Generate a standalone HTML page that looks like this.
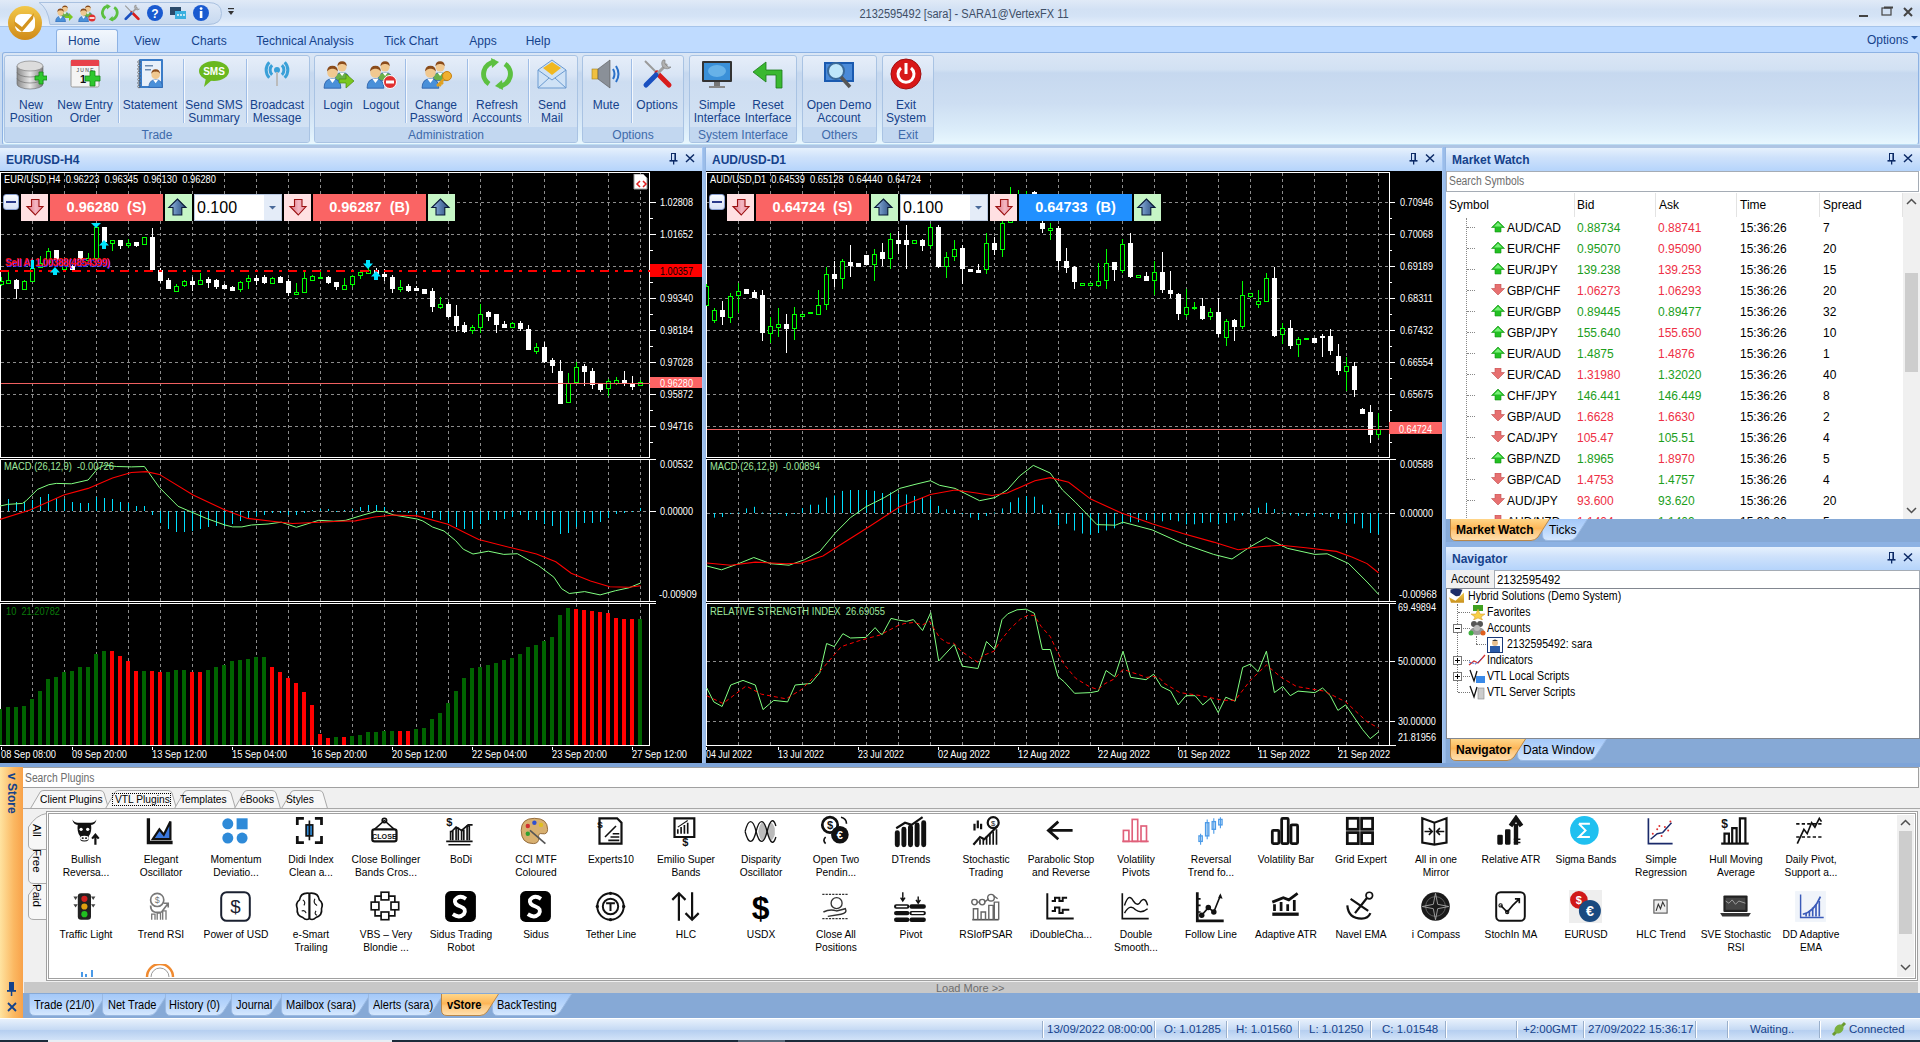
<!DOCTYPE html><html><head><meta charset="utf-8"><style>*{box-sizing:border-box;margin:0;padding:0}body{width:1920px;height:1042px;overflow:hidden;position:relative;background:#8db2e3;font-family:"Liberation Sans",sans-serif;font-size:12px;color:#000}.a{position:absolute}</style></head><body><div class="a" style="left:0;top:0;width:1920px;height:27px;background:linear-gradient(#e0eaf7,#d2e1f4 35%,#d4e3f6 60%,#e4eefb 90%)"></div><svg class="a" style="left:36px;top:0px;" width="190" height="27" viewBox="0 0 190 27"><defs><linearGradient id="qg" x1="0" y1="0" x2="0" y2="1"><stop offset="0" stop-color="#dfe9f7"/><stop offset="1" stop-color="#c6d8ef"/></linearGradient></defs><path d="M3 2.5 H172 Q185.5 2.5 185.5 13.5 Q185.5 24.5 172 24.5 H14 Q12 8 3 2.5Z" fill="url(#qg)" stroke="#a9c1e0"/></svg><svg class="a" style="left:55px;top:4px;" width="18" height="18" viewBox="0 0 18 18"><g transform="translate(5,0) scale(0.55)"><path d="M1 24 Q1 15 9 15 Q17 15 17 24 Z" fill="#6ab04a" stroke="#2a5ea8" stroke-width="0.8"/><path d="M6 15 L9 19 L12 15Z" fill="#fff"/><circle cx="9" cy="9" r="5" fill="#f0c890"/><path d="M3.8 8 Q4 2.5 9 2.5 Q14 2.5 14.2 8 Q12 5 9 5.5 Q6 5 3.8 8Z" fill="#8a4b1a"/></g><g transform="translate(0,3) scale(0.62)"><path d="M1 24 Q1 15 9 15 Q17 15 17 24 Z" fill="#4a90d9" stroke="#2a5ea8" stroke-width="0.8"/><path d="M6 15 L9 19 L12 15Z" fill="#fff"/><circle cx="9" cy="9" r="5" fill="#f0c890"/><path d="M3.8 8 Q4 2.5 9 2.5 Q14 2.5 14.2 8 Q12 5 9 5.5 Q6 5 3.8 8Z" fill="#8a4b1a"/></g><path d="M10 12h4v-3l4 4-4 4v-3h-4z" fill="#7ac820"/></svg><svg class="a" style="left:78px;top:4px;" width="18" height="18" viewBox="0 0 18 18"><g transform="translate(5,0) scale(0.55)"><path d="M1 24 Q1 15 9 15 Q17 15 17 24 Z" fill="#6ab04a" stroke="#2a5ea8" stroke-width="0.8"/><path d="M6 15 L9 19 L12 15Z" fill="#fff"/><circle cx="9" cy="9" r="5" fill="#f0c890"/><path d="M3.8 8 Q4 2.5 9 2.5 Q14 2.5 14.2 8 Q12 5 9 5.5 Q6 5 3.8 8Z" fill="#8a4b1a"/></g><g transform="translate(0,3) scale(0.62)"><path d="M1 24 Q1 15 9 15 Q17 15 17 24 Z" fill="#4a90d9" stroke="#2a5ea8" stroke-width="0.8"/><path d="M6 15 L9 19 L12 15Z" fill="#fff"/><circle cx="9" cy="9" r="5" fill="#f0c890"/><path d="M3.8 8 Q4 2.5 9 2.5 Q14 2.5 14.2 8 Q12 5 9 5.5 Q6 5 3.8 8Z" fill="#8a4b1a"/></g><circle cx="14" cy="14" r="3.5" fill="#e03030"/><rect x="11.5" y="13.2" width="5" height="1.6" fill="#fff"/></svg><svg class="a" style="left:101px;top:4px;" width="18" height="18" viewBox="0 0 18 18"><g transform="scale(.55)"><path d="M14 4 A12 12 0 0 0 8 26" fill="none" stroke="#5cc040" stroke-width="5"/><path d="M10 0 L18 4 L11 10Z" fill="#5cc040"/><path d="M18 28 A12 12 0 0 0 24 6" fill="none" stroke="#5cc040" stroke-width="5"/><path d="M22 32 L14 28 L21 22Z" fill="#5cc040"/></g></svg><svg class="a" style="left:123px;top:4px;" width="18" height="18" viewBox="0 0 18 18"><g transform="scale(.55)"><path d="M4 3 L17 16" stroke="#9a9a9a" stroke-width="2"/><path d="M16 15 L28 27" stroke="#d81c1c" stroke-width="5" stroke-linecap="round"/><path d="M26 6 L14 18" stroke="#a0a0a0" stroke-width="3"/><path d="M22 2 A5 5 0 1 0 30 9 L27 9 L24 6 L24 2Z" fill="#b0b0b0" stroke="#777" stroke-width=".6"/><path d="M15 17 L5 27" stroke="#1a50c0" stroke-width="5" stroke-linecap="round"/></g></svg><svg class="a" style="left:146px;top:4px;" width="18" height="18" viewBox="0 0 18 18"><circle cx="9" cy="9" r="8" fill="#1a5ad0"/><text x="9" y="13.5" font-size="12" font-weight="bold" text-anchor="middle" fill="#fff" font-family="Liberation Sans">?</text></svg><svg class="a" style="left:169px;top:4px;" width="18" height="18" viewBox="0 0 18 18"><rect x="1" y="3" width="11" height="8" fill="#2a4a6a"/><rect x="6" y="7" width="11" height="8" fill="#3ab0e0"/><circle cx="9" cy="11" r=".9" fill="#fff"/><circle cx="12" cy="11" r=".9" fill="#fff"/><circle cx="15" cy="11" r=".9" fill="#fff"/></svg><svg class="a" style="left:192px;top:4px;" width="18" height="18" viewBox="0 0 18 18"><circle cx="9" cy="9" r="8" fill="#1a5ad0"/><rect x="7.8" y="7" width="2.6" height="7" fill="#fff"/><circle cx="9.1" cy="4.6" r="1.4" fill="#fff"/></svg><svg class="a" style="left:226px;top:7px;" width="10" height="10" viewBox="0 0 10 10"><rect x="2" y="1" width="6" height="1.2" fill="#333"/><path d="M2 4h6l-3 4z" fill="#333"/></svg><div class="a" style="left:764.0px;top:7px;width:400px;text-align:center;font-size:12px;line-height:14px;color:#3e4f66;font-weight:normal;white-space:nowrap;transform:scaleX(0.92);transform-origin:50% 0;">2132595492 [sara] - SARA1@VertexFX 11</div><svg class="a" style="left:1856px;top:4px;" width="64" height="18" viewBox="0 0 64 18"><rect x="3" y="11" width="9" height="2" fill="#444"/><rect x="26" y="4" width="9" height="7" fill="none" stroke="#444" stroke-width="1.2"/><rect x="28" y="2.5" width="9" height="2" fill="#444"/><path d="M48 4 L56 12 M56 4 L48 12" stroke="#444" stroke-width="2"/></svg><div class="a" style="left:0;top:26px;width:1920px;height:27px;background:#bfdbff;border-top:1px solid #a6c4ea"></div><div class="a" style="left:56px;top:29px;width:62px;height:25px;border:1px solid #8db2e3;border-bottom:none;border-radius:3px 3px 0 0;background:linear-gradient(#f2f7fd,#dde8f6)"></div><div class="a" style="left:14.0px;top:34px;width:140px;text-align:center;font-size:12px;line-height:14px;color:#15428b;font-weight:normal;white-space:nowrap;">Home</div><div class="a" style="left:77.0px;top:34px;width:140px;text-align:center;font-size:12px;line-height:14px;color:#15428b;font-weight:normal;white-space:nowrap;">View</div><div class="a" style="left:139.0px;top:34px;width:140px;text-align:center;font-size:12px;line-height:14px;color:#15428b;font-weight:normal;white-space:nowrap;">Charts</div><div class="a" style="left:235.0px;top:34px;width:140px;text-align:center;font-size:12px;line-height:14px;color:#15428b;font-weight:normal;white-space:nowrap;">Technical Analysis</div><div class="a" style="left:341.0px;top:34px;width:140px;text-align:center;font-size:12px;line-height:14px;color:#15428b;font-weight:normal;white-space:nowrap;">Tick Chart</div><div class="a" style="left:413.0px;top:34px;width:140px;text-align:center;font-size:12px;line-height:14px;color:#15428b;font-weight:normal;white-space:nowrap;">Apps</div><div class="a" style="left:468.0px;top:34px;width:140px;text-align:center;font-size:12px;line-height:14px;color:#15428b;font-weight:normal;white-space:nowrap;">Help</div><div class="a" style="left:1867px;top:33px;font-size:12px;line-height:14px;color:#15428b;font-weight:normal;white-space:nowrap;">Options</div><svg class="a" style="left:1911px;top:35px;" width="8" height="6" viewBox="0 0 8 6"><path d="M0 1h7l-3.5 3.5z" fill="#15428b"/></svg><svg class="a" style="left:7px;top:5px;" width="36" height="36" viewBox="0 0 36 36"><defs><linearGradient id="orbg" x1="0" y1="0" x2="0" y2="1"><stop offset="0" stop-color="#f2c84a"/><stop offset="1" stop-color="#d08a18"/></linearGradient></defs><circle cx="18" cy="18" r="17" fill="url(#orbg)"/><rect x="8" y="9" width="20" height="18" rx="6" fill="#fff"/><path d="M7 16 L15 22 L27 8 L26 14 L15 27 L8 21Z" fill="#d4941e"/></svg><div class="a" style="left:0;top:52px;width:1920px;height:95px;background:#c8dbf2"></div><div class="a" style="left:2px;top:52px;width:1917px;height:93px;border:1px solid #8db2e3;border-bottom-color:#bcdcf2;border-radius:3px;background:linear-gradient(#dae6f5 0%,#d2e1f3 18%,#c6d8ef 22%,#cddef2 55%,#dcedfa 85%,#e8f7fe 100%)"></div><div class="a" style="left:4px;top:55px;width:306px;height:88px;border:1px solid #a9c3e3;border-radius:3px;background:linear-gradient(#e6eef9 0%,#d9e5f5 22%,#cdddf1 30%,#d4e3f4 100%);overflow:hidden"><div class="a" style="left:0;top:71px;width:100%;height:17px;background:#c2d7f0"></div></div><div class="a" style="left:4.0px;top:128px;width:306px;text-align:center;font-size:12px;line-height:14px;color:#3e6aaa;font-weight:normal;white-space:nowrap;">Trade</div><div class="a" style="left:314px;top:55px;width:264px;height:88px;border:1px solid #a9c3e3;border-radius:3px;background:linear-gradient(#e6eef9 0%,#d9e5f5 22%,#cdddf1 30%,#d4e3f4 100%);overflow:hidden"><div class="a" style="left:0;top:71px;width:100%;height:17px;background:#c2d7f0"></div></div><div class="a" style="left:314.0px;top:128px;width:264px;text-align:center;font-size:12px;line-height:14px;color:#3e6aaa;font-weight:normal;white-space:nowrap;">Administration</div><div class="a" style="left:582px;top:55px;width:102px;height:88px;border:1px solid #a9c3e3;border-radius:3px;background:linear-gradient(#e6eef9 0%,#d9e5f5 22%,#cdddf1 30%,#d4e3f4 100%);overflow:hidden"><div class="a" style="left:0;top:71px;width:100%;height:17px;background:#c2d7f0"></div></div><div class="a" style="left:582.0px;top:128px;width:102px;text-align:center;font-size:12px;line-height:14px;color:#3e6aaa;font-weight:normal;white-space:nowrap;">Options</div><div class="a" style="left:689px;top:55px;width:108px;height:88px;border:1px solid #a9c3e3;border-radius:3px;background:linear-gradient(#e6eef9 0%,#d9e5f5 22%,#cdddf1 30%,#d4e3f4 100%);overflow:hidden"><div class="a" style="left:0;top:71px;width:100%;height:17px;background:#c2d7f0"></div></div><div class="a" style="left:689.0px;top:128px;width:108px;text-align:center;font-size:12px;line-height:14px;color:#3e6aaa;font-weight:normal;white-space:nowrap;">System Interface</div><div class="a" style="left:802px;top:55px;width:75px;height:88px;border:1px solid #a9c3e3;border-radius:3px;background:linear-gradient(#e6eef9 0%,#d9e5f5 22%,#cdddf1 30%,#d4e3f4 100%);overflow:hidden"><div class="a" style="left:0;top:71px;width:100%;height:17px;background:#c2d7f0"></div></div><div class="a" style="left:802.0px;top:128px;width:75px;text-align:center;font-size:12px;line-height:14px;color:#3e6aaa;font-weight:normal;white-space:nowrap;">Others</div><div class="a" style="left:882px;top:55px;width:52px;height:88px;border:1px solid #a9c3e3;border-radius:3px;background:linear-gradient(#e6eef9 0%,#d9e5f5 22%,#cdddf1 30%,#d4e3f4 100%);overflow:hidden"><div class="a" style="left:0;top:71px;width:100%;height:17px;background:#c2d7f0"></div></div><div class="a" style="left:882.0px;top:128px;width:52px;text-align:center;font-size:12px;line-height:14px;color:#3e6aaa;font-weight:normal;white-space:nowrap;">Exit</div><div class="a" style="left:118px;top:59px;width:1px;height:64px;background:#9fbde6;box-shadow:1px 0 0 #f4f8fd"></div><div class="a" style="left:183px;top:59px;width:1px;height:64px;background:#9fbde6;box-shadow:1px 0 0 #f4f8fd"></div><div class="a" style="left:246px;top:59px;width:1px;height:64px;background:#9fbde6;box-shadow:1px 0 0 #f4f8fd"></div><div class="a" style="left:405px;top:59px;width:1px;height:64px;background:#9fbde6;box-shadow:1px 0 0 #f4f8fd"></div><div class="a" style="left:467px;top:59px;width:1px;height:64px;background:#9fbde6;box-shadow:1px 0 0 #f4f8fd"></div><div class="a" style="left:528px;top:59px;width:1px;height:64px;background:#9fbde6;box-shadow:1px 0 0 #f4f8fd"></div><div class="a" style="left:631px;top:59px;width:1px;height:64px;background:#9fbde6;box-shadow:1px 0 0 #f4f8fd"></div><svg class="a" style="left:15px;top:58px;" width="32" height="32" viewBox="0 0 32 32"><defs><linearGradient id="dbg" x1="0" x2="1"><stop offset="0" stop-color="#8a8a8a"/><stop offset=".5" stop-color="#e8e8e8"/><stop offset="1" stop-color="#7a7a7a"/></linearGradient></defs><path d="M2 20 v6 a13 5 0 0 0 26 0 v-6" fill="url(#dbg)" stroke="#666" stroke-width=".6"/><path d="M2 14 v6 a13 5 0 0 0 26 0 v-6" fill="url(#dbg)" stroke="#666" stroke-width=".6"/><path d="M2 8 v6 a13 5 0 0 0 26 0 v-6" fill="url(#dbg)" stroke="#666" stroke-width=".6"/><ellipse cx="15" cy="8" rx="13" ry="5" fill="#dcdcdc" stroke="#777" stroke-width=".6"/><path d="M20 18h4v-4h4v4h4v4h-4v4h-4v-4h-4z" fill="#2ec82e" stroke="#178a17" stroke-width=".8"/></svg><div class="a" style="left:-9.0px;top:98px;width:80px;text-align:center;font-size:12px;line-height:14px;color:#15428b;font-weight:normal;white-space:nowrap;">New</div><div class="a" style="left:-9.0px;top:111px;width:80px;text-align:center;font-size:12px;line-height:14px;color:#15428b;font-weight:normal;white-space:nowrap;">Position</div><svg class="a" style="left:69px;top:58px;" width="32" height="32" viewBox="0 0 32 32"><rect x="2" y="2" width="28" height="27" rx="1.5" fill="#f4f4f4" stroke="#9a9a9a"/><rect x="2" y="2" width="28" height="6" fill="#e8424a"/><text x="16" y="14" font-size="5" text-anchor="middle" fill="#333" font-family="Liberation Sans">J U N E</text><text x="11" y="25" font-size="11" font-weight="bold" fill="#111" font-family="Liberation Sans">1</text><path d="M16 18h5v-5h5v5h5v5h-5v5h-5v-5h-5z" fill="#2ec82e" stroke="#178a17" stroke-width=".8"/></svg><div class="a" style="left:45.0px;top:98px;width:80px;text-align:center;font-size:12px;line-height:14px;color:#15428b;font-weight:normal;white-space:nowrap;">New Entry</div><div class="a" style="left:45.0px;top:111px;width:80px;text-align:center;font-size:12px;line-height:14px;color:#15428b;font-weight:normal;white-space:nowrap;">Order</div><svg class="a" style="left:134px;top:58px;" width="32" height="32" viewBox="0 0 32 32"><rect x="5" y="1" width="24" height="29" rx="1" fill="#3a7cc8"/><rect x="8" y="3" width="19" height="25" fill="#e8f0fa"/><circle cx="5" cy="4.0" r="1.3" fill="none" stroke="#555" stroke-width=".7"/><circle cx="5" cy="7.5" r="1.3" fill="none" stroke="#555" stroke-width=".7"/><circle cx="5" cy="11.0" r="1.3" fill="none" stroke="#555" stroke-width=".7"/><circle cx="5" cy="14.5" r="1.3" fill="none" stroke="#555" stroke-width=".7"/><circle cx="5" cy="18.0" r="1.3" fill="none" stroke="#555" stroke-width=".7"/><circle cx="5" cy="21.5" r="1.3" fill="none" stroke="#555" stroke-width=".7"/><circle cx="5" cy="25.0" r="1.3" fill="none" stroke="#555" stroke-width=".7"/><circle cx="5" cy="28.5" r="1.3" fill="none" stroke="#555" stroke-width=".7"/><rect x="11" y="7" width="8" height="1.5" fill="#6a8ab0"/><rect x="11" y="11" width="6" height="1.5" fill="#6a8ab0"/><g transform="translate(14,9) scale(0.85)"><path d="M1 24 Q1 15 9 15 Q17 15 17 24 Z" fill="#4a90d9" stroke="#2a5ea8" stroke-width="0.8"/><path d="M6 15 L9 19 L12 15Z" fill="#fff"/><circle cx="9" cy="9" r="5" fill="#f0c890"/><path d="M3.8 8 Q4 2.5 9 2.5 Q14 2.5 14.2 8 Q12 5 9 5.5 Q6 5 3.8 8Z" fill="#8a4b1a"/></g></svg><div class="a" style="left:110.0px;top:98px;width:80px;text-align:center;font-size:12px;line-height:14px;color:#15428b;font-weight:normal;white-space:nowrap;">Statement</div><svg class="a" style="left:198px;top:58px;" width="32" height="32" viewBox="0 0 32 32"><ellipse cx="16" cy="13" rx="15" ry="10" fill="#6ab820"/><path d="M8 20 L6 29 L15 21Z" fill="#6ab820"/><text x="16" y="17" font-size="10" font-weight="bold" text-anchor="middle" fill="#fff" font-family="Liberation Sans">SMS</text></svg><div class="a" style="left:174.0px;top:98px;width:80px;text-align:center;font-size:12px;line-height:14px;color:#15428b;font-weight:normal;white-space:nowrap;">Send SMS</div><div class="a" style="left:174.0px;top:111px;width:80px;text-align:center;font-size:12px;line-height:14px;color:#15428b;font-weight:normal;white-space:nowrap;">Summary</div><svg class="a" style="left:261px;top:58px;" width="32" height="32" viewBox="0 0 32 32"><circle cx="16" cy="12" r="3" fill="#3aa0d8"/><rect x="15" y="14" width="2" height="14" fill="#bbb"/><path d="M11.100000000000001 7.1000000000000005 A7 7 0 0 0 11.100000000000001 16.9" fill="none" stroke="#3aa0d8" stroke-width="3"/><path d="M20.9 7.1000000000000005 A7 7 0 0 1 20.9 16.9" fill="none" stroke="#3aa0d8" stroke-width="3"/><path d="M8.3 4.300000000000001 A11 11 0 0 0 8.3 19.7" fill="none" stroke="#3aa0d8" stroke-width="3"/><path d="M23.7 4.300000000000001 A11 11 0 0 1 23.7 19.7" fill="none" stroke="#3aa0d8" stroke-width="3"/></svg><div class="a" style="left:237.0px;top:98px;width:80px;text-align:center;font-size:12px;line-height:14px;color:#15428b;font-weight:normal;white-space:nowrap;">Broadcast</div><div class="a" style="left:237.0px;top:111px;width:80px;text-align:center;font-size:12px;line-height:14px;color:#15428b;font-weight:normal;white-space:nowrap;">Message</div><svg class="a" style="left:322px;top:58px;" width="32" height="32" viewBox="0 0 32 32"><g transform="translate(12,1) scale(0.9)"><path d="M1 24 Q1 15 9 15 Q17 15 17 24 Z" fill="#6ab04a" stroke="#2a5ea8" stroke-width="0.8"/><path d="M6 15 L9 19 L12 15Z" fill="#fff"/><circle cx="9" cy="9" r="5" fill="#f0c890"/><path d="M3.8 8 Q4 2.5 9 2.5 Q14 2.5 14.2 8 Q12 5 9 5.5 Q6 5 3.8 8Z" fill="#8a4b1a"/></g><g transform="translate(1,5) scale(1.05)"><path d="M1 24 Q1 15 9 15 Q17 15 17 24 Z" fill="#4a90d9" stroke="#2a5ea8" stroke-width="0.8"/><path d="M6 15 L9 19 L12 15Z" fill="#fff"/><circle cx="9" cy="9" r="5" fill="#f0c890"/><path d="M3.8 8 Q4 2.5 9 2.5 Q14 2.5 14.2 8 Q12 5 9 5.5 Q6 5 3.8 8Z" fill="#8a4b1a"/></g><path d="M17 21h7v-5l8 7-8 7v-5h-7z" fill="#7ac820" stroke="#4a8a10" stroke-width=".7"/></svg><div class="a" style="left:298.0px;top:98px;width:80px;text-align:center;font-size:12px;line-height:14px;color:#15428b;font-weight:normal;white-space:nowrap;">Login</div><svg class="a" style="left:365px;top:58px;" width="32" height="32" viewBox="0 0 32 32"><g transform="translate(12,1) scale(0.9)"><path d="M1 24 Q1 15 9 15 Q17 15 17 24 Z" fill="#6ab04a" stroke="#2a5ea8" stroke-width="0.8"/><path d="M6 15 L9 19 L12 15Z" fill="#fff"/><circle cx="9" cy="9" r="5" fill="#f0c890"/><path d="M3.8 8 Q4 2.5 9 2.5 Q14 2.5 14.2 8 Q12 5 9 5.5 Q6 5 3.8 8Z" fill="#8a4b1a"/></g><g transform="translate(1,5) scale(1.05)"><path d="M1 24 Q1 15 9 15 Q17 15 17 24 Z" fill="#4a90d9" stroke="#2a5ea8" stroke-width="0.8"/><path d="M6 15 L9 19 L12 15Z" fill="#fff"/><circle cx="9" cy="9" r="5" fill="#f0c890"/><path d="M3.8 8 Q4 2.5 9 2.5 Q14 2.5 14.2 8 Q12 5 9 5.5 Q6 5 3.8 8Z" fill="#8a4b1a"/></g><circle cx="25" cy="24" r="6.5" fill="#e03030" stroke="#fff" stroke-width="1"/><rect x="21" y="22.5" width="8" height="3" fill="#fff"/></svg><div class="a" style="left:341.0px;top:98px;width:80px;text-align:center;font-size:12px;line-height:14px;color:#15428b;font-weight:normal;white-space:nowrap;">Logout</div><svg class="a" style="left:420px;top:58px;" width="32" height="32" viewBox="0 0 32 32"><g transform="translate(12,1) scale(0.9)"><path d="M1 24 Q1 15 9 15 Q17 15 17 24 Z" fill="#6ab04a" stroke="#2a5ea8" stroke-width="0.8"/><path d="M6 15 L9 19 L12 15Z" fill="#fff"/><circle cx="9" cy="9" r="5" fill="#f0c890"/><path d="M3.8 8 Q4 2.5 9 2.5 Q14 2.5 14.2 8 Q12 5 9 5.5 Q6 5 3.8 8Z" fill="#8a4b1a"/></g><g transform="translate(1,5) scale(1.05)"><path d="M1 24 Q1 15 9 15 Q17 15 17 24 Z" fill="#4a90d9" stroke="#2a5ea8" stroke-width="0.8"/><path d="M6 15 L9 19 L12 15Z" fill="#fff"/><circle cx="9" cy="9" r="5" fill="#f0c890"/><path d="M3.8 8 Q4 2.5 9 2.5 Q14 2.5 14.2 8 Q12 5 9 5.5 Q6 5 3.8 8Z" fill="#8a4b1a"/></g><circle cx="27" cy="18" r="4.5" fill="#f0b030" stroke="#c88010"/><path d="M24 21 L17 28 M19 26l2 2 M21 24l2 2" stroke="#e0a020" stroke-width="2.5"/></svg><div class="a" style="left:396.0px;top:98px;width:80px;text-align:center;font-size:12px;line-height:14px;color:#15428b;font-weight:normal;white-space:nowrap;">Change</div><div class="a" style="left:396.0px;top:111px;width:80px;text-align:center;font-size:12px;line-height:14px;color:#15428b;font-weight:normal;white-space:nowrap;">Password</div><svg class="a" style="left:481px;top:58px;" width="32" height="32" viewBox="0 0 32 32"><path d="M14 4 A12 12 0 0 0 8 26" fill="none" stroke="#5cc040" stroke-width="5"/><path d="M10 0 L18 4 L11 10Z" fill="#5cc040"/><path d="M18 28 A12 12 0 0 0 24 6" fill="none" stroke="#5cc040" stroke-width="5"/><path d="M22 32 L14 28 L21 22Z" fill="#5cc040"/></svg><div class="a" style="left:457.0px;top:98px;width:80px;text-align:center;font-size:12px;line-height:14px;color:#15428b;font-weight:normal;white-space:nowrap;">Refresh</div><div class="a" style="left:457.0px;top:111px;width:80px;text-align:center;font-size:12px;line-height:14px;color:#15428b;font-weight:normal;white-space:nowrap;">Accounts</div><svg class="a" style="left:536px;top:58px;" width="32" height="32" viewBox="0 0 32 32"><path d="M2 12 L16 2 L30 12 V30 H2Z" fill="#cfe2f6" stroke="#6a9ad0"/><path d="M7 10 L16 4 L25 10 L16 17Z" fill="#f0b820"/><path d="M2 12 L16 22 L30 12" fill="none" stroke="#6a9ad0"/><path d="M2 30 L13 20 M30 30 L19 20" stroke="#6a9ad0"/></svg><div class="a" style="left:512.0px;top:98px;width:80px;text-align:center;font-size:12px;line-height:14px;color:#15428b;font-weight:normal;white-space:nowrap;">Send</div><div class="a" style="left:512.0px;top:111px;width:80px;text-align:center;font-size:12px;line-height:14px;color:#15428b;font-weight:normal;white-space:nowrap;">Mail</div><svg class="a" style="left:590px;top:58px;" width="32" height="32" viewBox="0 0 32 32"><rect x="2" y="11" width="6" height="10" fill="#f0c040" stroke="#a08020" stroke-width=".6"/><path d="M8 11 L20 2 V30 L8 21Z" fill="#8a9098" stroke="#555" stroke-width=".6"/><path d="M23 11 Q26 16 23 21 M26 8 Q31 16 26 24" fill="none" stroke="#2a70c8" stroke-width="2"/></svg><div class="a" style="left:566.0px;top:98px;width:80px;text-align:center;font-size:12px;line-height:14px;color:#15428b;font-weight:normal;white-space:nowrap;">Mute</div><svg class="a" style="left:641px;top:58px;" width="32" height="32" viewBox="0 0 32 32"><path d="M4 3 L17 16" stroke="#9a9a9a" stroke-width="2"/><path d="M16 15 L28 27" stroke="#d81c1c" stroke-width="5" stroke-linecap="round"/><path d="M26 6 L14 18" stroke="#a0a0a0" stroke-width="3"/><path d="M22 2 A5 5 0 1 0 30 9 L27 9 L24 6 L24 2Z" fill="#b0b0b0" stroke="#777" stroke-width=".6"/><path d="M15 17 L5 27" stroke="#1a50c0" stroke-width="5" stroke-linecap="round"/></svg><div class="a" style="left:617.0px;top:98px;width:80px;text-align:center;font-size:12px;line-height:14px;color:#15428b;font-weight:normal;white-space:nowrap;">Options</div><svg class="a" style="left:701px;top:58px;" width="32" height="32" viewBox="0 0 32 32"><rect x="1" y="3" width="30" height="21" rx="1" fill="#333"/><rect x="3" y="5" width="26" height="17" fill="#3a90d8"/><ellipse cx="16" cy="13" rx="9" ry="6" fill="#7ac0f0" opacity=".7"/><rect x="13" y="24" width="6" height="4" fill="#777"/><rect x="8" y="28" width="16" height="2" fill="#888"/></svg><div class="a" style="left:677.0px;top:98px;width:80px;text-align:center;font-size:12px;line-height:14px;color:#15428b;font-weight:normal;white-space:nowrap;">Simple</div><div class="a" style="left:677.0px;top:111px;width:80px;text-align:center;font-size:12px;line-height:14px;color:#15428b;font-weight:normal;white-space:nowrap;">Interface</div><svg class="a" style="left:752px;top:58px;" width="32" height="32" viewBox="0 0 32 32"><path d="M30 30 V12 H14 V4 L1 14 L14 24 V17 H24 V30Z" fill="#3ab830" stroke="#1a7a1a" stroke-width=".8"/></svg><div class="a" style="left:728.0px;top:98px;width:80px;text-align:center;font-size:12px;line-height:14px;color:#15428b;font-weight:normal;white-space:nowrap;">Reset</div><div class="a" style="left:728.0px;top:111px;width:80px;text-align:center;font-size:12px;line-height:14px;color:#15428b;font-weight:normal;white-space:nowrap;">Interface</div><svg class="a" style="left:823px;top:58px;" width="32" height="32" viewBox="0 0 32 32"><rect x="1" y="4" width="30" height="20" fill="#1a5ab0"/><rect x="3" y="6" width="26" height="16" fill="#4a8ad8"/><circle cx="13" cy="13" r="8" fill="#bfe6fa" stroke="#3a6a9a" stroke-width="2"/><path d="M18 19 L27 29" stroke="#555" stroke-width="3.5"/></svg><div class="a" style="left:799.0px;top:98px;width:80px;text-align:center;font-size:12px;line-height:14px;color:#15428b;font-weight:normal;white-space:nowrap;">Open Demo</div><div class="a" style="left:799.0px;top:111px;width:80px;text-align:center;font-size:12px;line-height:14px;color:#15428b;font-weight:normal;white-space:nowrap;">Account</div><svg class="a" style="left:890px;top:58px;" width="32" height="32" viewBox="0 0 32 32"><circle cx="16" cy="16" r="15" fill="#d81818"/><circle cx="16" cy="16" r="15" fill="none" stroke="#a01010"/><path d="M11 10 A8 8 0 1 0 21 10" fill="none" stroke="#fff" stroke-width="3"/><rect x="14.5" y="5" width="3" height="11" fill="#fff"/></svg><div class="a" style="left:866.0px;top:98px;width:80px;text-align:center;font-size:12px;line-height:14px;color:#15428b;font-weight:normal;white-space:nowrap;">Exit</div><div class="a" style="left:866.0px;top:111px;width:80px;text-align:center;font-size:12px;line-height:14px;color:#15428b;font-weight:normal;white-space:nowrap;">System</div><div class="a" style="left:0;top:145px;width:1920px;height:3px;background:#aec5e4"></div><div class="a" style="left:0px;top:148px;width:702px;height:23px;background:linear-gradient(#e6f1fd,#cfe2fb 40%,#b5d4fb)"></div><div class="a" style="left:6px;top:153px;font-size:12px;line-height:14px;color:#15428b;font-weight:bold;white-space:nowrap;">EUR/USD-H4</div><svg class="a" style="left:666px;top:153px;" width="30" height="14" viewBox="0 0 30 14"><rect x="5.5" y="0.5" width="4" height="7" fill="none" stroke="#0c2a66"/><rect x="8.4" y="0.5" width="1.5" height="7" fill="#0c2a66"/><rect x="3.5" y="7" width="8" height="1.6" fill="#0c2a66"/><rect x="7" y="8" width="1.3" height="3.5" fill="#0c2a66"/><path d="M20 1.5 L28 9 M28 1.5 L20 9" stroke="#0c2a66" stroke-width="1.5"/></svg><div class="a" style="left:706px;top:148px;width:736px;height:23px;background:linear-gradient(#e6f1fd,#cfe2fb 40%,#b5d4fb)"></div><div class="a" style="left:712px;top:153px;font-size:12px;line-height:14px;color:#15428b;font-weight:bold;white-space:nowrap;">AUD/USD-D1</div><svg class="a" style="left:1406px;top:153px;" width="30" height="14" viewBox="0 0 30 14"><rect x="5.5" y="0.5" width="4" height="7" fill="none" stroke="#0c2a66"/><rect x="8.4" y="0.5" width="1.5" height="7" fill="#0c2a66"/><rect x="3.5" y="7" width="8" height="1.6" fill="#0c2a66"/><rect x="7" y="8" width="1.3" height="3.5" fill="#0c2a66"/><path d="M20 1.5 L28 9 M28 1.5 L20 9" stroke="#0c2a66" stroke-width="1.5"/></svg><div class="a" style="left:702px;top:147px;width:4px;height:616px;background:linear-gradient(90deg,#a6c7f3 25%,#9bbde9 25%,#9bbde9 75%,#93b5e3 75%)"></div><div class="a" style="left:1442px;top:147px;width:4px;height:616px;background:linear-gradient(90deg,#a6c7f3 25%,#9bbde9 25%,#9bbde9 75%,#93b5e3 75%)"></div><svg width="702" height="592" viewBox="0 171 702 592" style="position:absolute;left:0;top:171px" font-family='"Liberation Sans", sans-serif'><rect x="0" y="171" width="702" height="592" fill="#000"/><line x1="32.5" y1="173" x2="32.5" y2="457" stroke="#8c8c8c" stroke-dasharray="3,3"/><line x1="64.5" y1="173" x2="64.5" y2="457" stroke="#8c8c8c" stroke-dasharray="3,3"/><line x1="96.5" y1="173" x2="96.5" y2="457" stroke="#8c8c8c" stroke-dasharray="3,3"/><line x1="128.5" y1="173" x2="128.5" y2="457" stroke="#8c8c8c" stroke-dasharray="3,3"/><line x1="160.5" y1="173" x2="160.5" y2="457" stroke="#8c8c8c" stroke-dasharray="3,3"/><line x1="192.5" y1="173" x2="192.5" y2="457" stroke="#8c8c8c" stroke-dasharray="3,3"/><line x1="224.5" y1="173" x2="224.5" y2="457" stroke="#8c8c8c" stroke-dasharray="3,3"/><line x1="256.5" y1="173" x2="256.5" y2="457" stroke="#8c8c8c" stroke-dasharray="3,3"/><line x1="288.5" y1="173" x2="288.5" y2="457" stroke="#8c8c8c" stroke-dasharray="3,3"/><line x1="320.5" y1="173" x2="320.5" y2="457" stroke="#8c8c8c" stroke-dasharray="3,3"/><line x1="352.5" y1="173" x2="352.5" y2="457" stroke="#8c8c8c" stroke-dasharray="3,3"/><line x1="384.5" y1="173" x2="384.5" y2="457" stroke="#8c8c8c" stroke-dasharray="3,3"/><line x1="416.5" y1="173" x2="416.5" y2="457" stroke="#8c8c8c" stroke-dasharray="3,3"/><line x1="448.5" y1="173" x2="448.5" y2="457" stroke="#8c8c8c" stroke-dasharray="3,3"/><line x1="480.5" y1="173" x2="480.5" y2="457" stroke="#8c8c8c" stroke-dasharray="3,3"/><line x1="512.5" y1="173" x2="512.5" y2="457" stroke="#8c8c8c" stroke-dasharray="3,3"/><line x1="544.5" y1="173" x2="544.5" y2="457" stroke="#8c8c8c" stroke-dasharray="3,3"/><line x1="576.5" y1="173" x2="576.5" y2="457" stroke="#8c8c8c" stroke-dasharray="3,3"/><line x1="608.5" y1="173" x2="608.5" y2="457" stroke="#8c8c8c" stroke-dasharray="3,3"/><line x1="640.5" y1="173" x2="640.5" y2="457" stroke="#8c8c8c" stroke-dasharray="3,3"/><line x1="1" y1="202.5" x2="650" y2="202.5" stroke="#8c8c8c" stroke-dasharray="3,3"/><line x1="1" y1="234.5" x2="650" y2="234.5" stroke="#8c8c8c" stroke-dasharray="3,3"/><line x1="1" y1="266.5" x2="650" y2="266.5" stroke="#8c8c8c" stroke-dasharray="3,3"/><line x1="1" y1="298.5" x2="650" y2="298.5" stroke="#8c8c8c" stroke-dasharray="3,3"/><line x1="1" y1="330.5" x2="650" y2="330.5" stroke="#8c8c8c" stroke-dasharray="3,3"/><line x1="1" y1="362.5" x2="650" y2="362.5" stroke="#8c8c8c" stroke-dasharray="3,3"/><line x1="1" y1="394.5" x2="650" y2="394.5" stroke="#8c8c8c" stroke-dasharray="3,3"/><line x1="1" y1="426.5" x2="650" y2="426.5" stroke="#8c8c8c" stroke-dasharray="3,3"/><line x1="32.5" y1="460" x2="32.5" y2="601" stroke="#8c8c8c" stroke-dasharray="3,3"/><line x1="64.5" y1="460" x2="64.5" y2="601" stroke="#8c8c8c" stroke-dasharray="3,3"/><line x1="96.5" y1="460" x2="96.5" y2="601" stroke="#8c8c8c" stroke-dasharray="3,3"/><line x1="128.5" y1="460" x2="128.5" y2="601" stroke="#8c8c8c" stroke-dasharray="3,3"/><line x1="160.5" y1="460" x2="160.5" y2="601" stroke="#8c8c8c" stroke-dasharray="3,3"/><line x1="192.5" y1="460" x2="192.5" y2="601" stroke="#8c8c8c" stroke-dasharray="3,3"/><line x1="224.5" y1="460" x2="224.5" y2="601" stroke="#8c8c8c" stroke-dasharray="3,3"/><line x1="256.5" y1="460" x2="256.5" y2="601" stroke="#8c8c8c" stroke-dasharray="3,3"/><line x1="288.5" y1="460" x2="288.5" y2="601" stroke="#8c8c8c" stroke-dasharray="3,3"/><line x1="320.5" y1="460" x2="320.5" y2="601" stroke="#8c8c8c" stroke-dasharray="3,3"/><line x1="352.5" y1="460" x2="352.5" y2="601" stroke="#8c8c8c" stroke-dasharray="3,3"/><line x1="384.5" y1="460" x2="384.5" y2="601" stroke="#8c8c8c" stroke-dasharray="3,3"/><line x1="416.5" y1="460" x2="416.5" y2="601" stroke="#8c8c8c" stroke-dasharray="3,3"/><line x1="448.5" y1="460" x2="448.5" y2="601" stroke="#8c8c8c" stroke-dasharray="3,3"/><line x1="480.5" y1="460" x2="480.5" y2="601" stroke="#8c8c8c" stroke-dasharray="3,3"/><line x1="512.5" y1="460" x2="512.5" y2="601" stroke="#8c8c8c" stroke-dasharray="3,3"/><line x1="544.5" y1="460" x2="544.5" y2="601" stroke="#8c8c8c" stroke-dasharray="3,3"/><line x1="576.5" y1="460" x2="576.5" y2="601" stroke="#8c8c8c" stroke-dasharray="3,3"/><line x1="608.5" y1="460" x2="608.5" y2="601" stroke="#8c8c8c" stroke-dasharray="3,3"/><line x1="640.5" y1="460" x2="640.5" y2="601" stroke="#8c8c8c" stroke-dasharray="3,3"/><line x1="1" y1="511.5" x2="650" y2="511.5" stroke="#8c8c8c" stroke-dasharray="3,3"/><line x1="32.5" y1="604" x2="32.5" y2="745" stroke="#8c8c8c" stroke-dasharray="3,3"/><line x1="64.5" y1="604" x2="64.5" y2="745" stroke="#8c8c8c" stroke-dasharray="3,3"/><line x1="96.5" y1="604" x2="96.5" y2="745" stroke="#8c8c8c" stroke-dasharray="3,3"/><line x1="128.5" y1="604" x2="128.5" y2="745" stroke="#8c8c8c" stroke-dasharray="3,3"/><line x1="160.5" y1="604" x2="160.5" y2="745" stroke="#8c8c8c" stroke-dasharray="3,3"/><line x1="192.5" y1="604" x2="192.5" y2="745" stroke="#8c8c8c" stroke-dasharray="3,3"/><line x1="224.5" y1="604" x2="224.5" y2="745" stroke="#8c8c8c" stroke-dasharray="3,3"/><line x1="256.5" y1="604" x2="256.5" y2="745" stroke="#8c8c8c" stroke-dasharray="3,3"/><line x1="288.5" y1="604" x2="288.5" y2="745" stroke="#8c8c8c" stroke-dasharray="3,3"/><line x1="320.5" y1="604" x2="320.5" y2="745" stroke="#8c8c8c" stroke-dasharray="3,3"/><line x1="352.5" y1="604" x2="352.5" y2="745" stroke="#8c8c8c" stroke-dasharray="3,3"/><line x1="384.5" y1="604" x2="384.5" y2="745" stroke="#8c8c8c" stroke-dasharray="3,3"/><line x1="416.5" y1="604" x2="416.5" y2="745" stroke="#8c8c8c" stroke-dasharray="3,3"/><line x1="448.5" y1="604" x2="448.5" y2="745" stroke="#8c8c8c" stroke-dasharray="3,3"/><line x1="480.5" y1="604" x2="480.5" y2="745" stroke="#8c8c8c" stroke-dasharray="3,3"/><line x1="512.5" y1="604" x2="512.5" y2="745" stroke="#8c8c8c" stroke-dasharray="3,3"/><line x1="544.5" y1="604" x2="544.5" y2="745" stroke="#8c8c8c" stroke-dasharray="3,3"/><line x1="576.5" y1="604" x2="576.5" y2="745" stroke="#8c8c8c" stroke-dasharray="3,3"/><line x1="608.5" y1="604" x2="608.5" y2="745" stroke="#8c8c8c" stroke-dasharray="3,3"/><line x1="640.5" y1="604" x2="640.5" y2="745" stroke="#8c8c8c" stroke-dasharray="3,3"/><rect x="0.5" y="172.5" width="649" height="285" fill="none" stroke="#fff"/><rect x="0.5" y="459.5" width="649" height="142" fill="none" stroke="#fff"/><rect x="0.5" y="603.5" width="649" height="142" fill="none" stroke="#fff"/><rect x="650" y="459" width="6" height="1" fill="#fff"/><rect x="650" y="601" width="6" height="1" fill="#fff"/><rect x="650" y="603" width="6" height="1" fill="#fff"/><rect x="1" y="277.0" width="1" height="9.0" fill="#00ff00"/><rect x="-1" y="281.0" width="4" height="3.0" fill="#000" stroke="#00ff00" stroke-width="1" transform="translate(0.5,0.5)" /><rect x="8" y="272.0" width="1" height="11.0" fill="#00ff00"/><rect x="6" y="280.0" width="4" height="3.0" fill="#000" stroke="#00ff00" stroke-width="1" transform="translate(0.5,0.5)" /><rect x="16" y="279.0" width="1" height="20.0" fill="#fff"/><rect x="14" y="280.0" width="5" height="9.0" fill="#fff"/><rect x="24" y="280.0" width="1" height="10.0" fill="#00ff00"/><rect x="22" y="281.0" width="4" height="8.0" fill="#000" stroke="#00ff00" stroke-width="1" transform="translate(0.5,0.5)" /><rect x="32" y="267.0" width="1" height="15.0" fill="#00ff00"/><rect x="30" y="268.0" width="4" height="13.0" fill="#000" stroke="#00ff00" stroke-width="1" transform="translate(0.5,0.5)" /><rect x="40" y="256.0" width="1" height="12.0" fill="#00ff00"/><rect x="38" y="263.0" width="4" height="4.0" fill="#000" stroke="#00ff00" stroke-width="1" transform="translate(0.5,0.5)" /><rect x="48" y="248.0" width="1" height="14.0" fill="#00ff00"/><rect x="46" y="251.0" width="4" height="11.0" fill="#000" stroke="#00ff00" stroke-width="1" transform="translate(0.5,0.5)" /><rect x="56" y="250.0" width="1" height="9.0" fill="#fff"/><rect x="54" y="250.0" width="5" height="10.0" fill="#fff"/><rect x="64" y="262.0" width="1" height="8.0" fill="#00ff00"/><rect x="62" y="265.0" width="4" height="4.0" fill="#000" stroke="#00ff00" stroke-width="1" transform="translate(0.5,0.5)" /><rect x="72" y="265.0" width="1" height="5.0" fill="#fff"/><rect x="70" y="266.0" width="5" height="4.0" fill="#fff"/><rect x="80" y="251.0" width="1" height="8.0" fill="#fff"/><rect x="78" y="251.0" width="5" height="9.0" fill="#fff"/><rect x="88" y="253.0" width="1" height="7.0" fill="#00ff00"/><rect x="86" y="258.0" width="4" height="2.0" fill="#000" stroke="#00ff00" stroke-width="1" transform="translate(0.5,0.5)" /><rect x="96" y="224.0" width="1" height="35.0" fill="#00ff00"/><rect x="94" y="227.0" width="4" height="31.0" fill="#000" stroke="#00ff00" stroke-width="1" transform="translate(0.5,0.5)" /><rect x="104" y="227.0" width="1" height="14.0" fill="#fff"/><rect x="102" y="227.0" width="5" height="15.0" fill="#fff"/><rect x="112" y="240.0" width="1" height="11.0" fill="#00ff00"/><rect x="110" y="240.0" width="4" height="3.0" fill="#000" stroke="#00ff00" stroke-width="1" transform="translate(0.5,0.5)" /><rect x="120" y="240.0" width="1" height="9.0" fill="#fff"/><rect x="118" y="240.0" width="5" height="6.0" fill="#fff"/><rect x="128" y="239.0" width="1" height="9.0" fill="#00ff00"/><rect x="126" y="243.0" width="4" height="2.0" fill="#000" stroke="#00ff00" stroke-width="1" transform="translate(0.5,0.5)" /><rect x="136" y="242.0" width="1" height="5.0" fill="#fff"/><rect x="134" y="242.0" width="5" height="4.0" fill="#fff"/><rect x="144" y="237.0" width="1" height="7.0" fill="#00ff00"/><rect x="142" y="237.0" width="4" height="7.0" fill="#000" stroke="#00ff00" stroke-width="1" transform="translate(0.5,0.5)" /><rect x="152" y="228.0" width="1" height="41.0" fill="#fff"/><rect x="150" y="237.0" width="5" height="33.0" fill="#fff"/><rect x="160" y="268.0" width="1" height="15.0" fill="#fff"/><rect x="158" y="270.0" width="5" height="11.0" fill="#fff"/><rect x="168" y="278.0" width="1" height="11.0" fill="#fff"/><rect x="166" y="280.0" width="5" height="9.0" fill="#fff"/><rect x="176" y="284.0" width="1" height="8.0" fill="#00ff00"/><rect x="174" y="286.0" width="4" height="5.0" fill="#000" stroke="#00ff00" stroke-width="1" transform="translate(0.5,0.5)" /><rect x="184" y="280.0" width="1" height="7.0" fill="#00ff00"/><rect x="182" y="281.0" width="4" height="4.0" fill="#000" stroke="#00ff00" stroke-width="1" transform="translate(0.5,0.5)" /><rect x="192" y="277.0" width="1" height="14.0" fill="#fff"/><rect x="190" y="281.0" width="5" height="4.0" fill="#fff"/><rect x="200" y="273.0" width="1" height="12.0" fill="#00ff00"/><rect x="198" y="280.0" width="4" height="4.0" fill="#000" stroke="#00ff00" stroke-width="1" transform="translate(0.5,0.5)" /><rect x="208" y="277.0" width="1" height="11.0" fill="#fff"/><rect x="206" y="279.0" width="5" height="4.0" fill="#fff"/><rect x="216" y="279.0" width="1" height="10.0" fill="#fff"/><rect x="214" y="280.0" width="5" height="7.0" fill="#fff"/><rect x="224" y="284.0" width="1" height="5.0" fill="#fff"/><rect x="222" y="285.0" width="5" height="4.0" fill="#fff"/><rect x="232" y="286.0" width="1" height="5.0" fill="#fff"/><rect x="230" y="287.0" width="5" height="4.0" fill="#fff"/><rect x="240" y="281.0" width="1" height="11.0" fill="#00ff00"/><rect x="238" y="282.0" width="4" height="7.0" fill="#000" stroke="#00ff00" stroke-width="1" transform="translate(0.5,0.5)" /><rect x="248" y="275.0" width="1" height="14.0" fill="#00ff00"/><rect x="246" y="278.0" width="4" height="3.0" fill="#000" stroke="#00ff00" stroke-width="1" transform="translate(0.5,0.5)" /><rect x="256" y="275.0" width="1" height="10.0" fill="#fff"/><rect x="254" y="278.0" width="5" height="3.0" fill="#fff"/><rect x="264" y="275.0" width="1" height="9.0" fill="#fff"/><rect x="262" y="277.0" width="5" height="6.0" fill="#fff"/><rect x="272" y="277.0" width="1" height="7.0" fill="#00ff00"/><rect x="270" y="278.0" width="4" height="5.0" fill="#000" stroke="#00ff00" stroke-width="1" transform="translate(0.5,0.5)" /><rect x="280" y="276.0" width="1" height="7.0" fill="#fff"/><rect x="278" y="277.0" width="5" height="6.0" fill="#fff"/><rect x="288" y="279.0" width="1" height="17.0" fill="#fff"/><rect x="286" y="281.0" width="5" height="12.0" fill="#fff"/><rect x="296" y="283.0" width="1" height="11.0" fill="#00ff00"/><rect x="294" y="292.0" width="4" height="2.0" fill="#000" stroke="#00ff00" stroke-width="1" transform="translate(0.5,0.5)" /><rect x="304" y="272.0" width="1" height="21.0" fill="#00ff00"/><rect x="302" y="278.0" width="4" height="14.0" fill="#000" stroke="#00ff00" stroke-width="1" transform="translate(0.5,0.5)" /><rect x="312" y="275.0" width="1" height="6.0" fill="#00ff00"/><rect x="310" y="276.0" width="4" height="4.0" fill="#000" stroke="#00ff00" stroke-width="1" transform="translate(0.5,0.5)" /><rect x="320" y="272.0" width="1" height="7.0" fill="#00ff00"/><rect x="318" y="277.0" width="4" height="1.0" fill="#000" stroke="#00ff00" stroke-width="1" transform="translate(0.5,0.5)" /><rect x="328" y="276.0" width="1" height="8.0" fill="#fff"/><rect x="326" y="277.0" width="5" height="6.0" fill="#fff"/><rect x="336" y="282.0" width="1" height="8.0" fill="#fff"/><rect x="334" y="282.0" width="5" height="5.0" fill="#fff"/><rect x="344" y="278.0" width="1" height="12.0" fill="#00ff00"/><rect x="342" y="285.0" width="4" height="4.0" fill="#000" stroke="#00ff00" stroke-width="1" transform="translate(0.5,0.5)" /><rect x="352" y="275.0" width="1" height="12.0" fill="#00ff00"/><rect x="350" y="276.0" width="4" height="8.0" fill="#000" stroke="#00ff00" stroke-width="1" transform="translate(0.5,0.5)" /><rect x="360" y="271.0" width="1" height="8.0" fill="#00ff00"/><rect x="358" y="272.0" width="4" height="3.0" fill="#000" stroke="#00ff00" stroke-width="1" transform="translate(0.5,0.5)" /><rect x="368" y="268.0" width="1" height="6.0" fill="#00ff00"/><rect x="366" y="270.0" width="4" height="3.0" fill="#000" stroke="#00ff00" stroke-width="1" transform="translate(0.5,0.5)" /><rect x="376" y="268.0" width="1" height="8.0" fill="#fff"/><rect x="374" y="270.0" width="5" height="4.0" fill="#fff"/><rect x="384" y="269.0" width="1" height="12.0" fill="#fff"/><rect x="382" y="274.0" width="5" height="3.0" fill="#fff"/><rect x="392" y="275.0" width="1" height="18.0" fill="#fff"/><rect x="390" y="277.0" width="5" height="12.0" fill="#fff"/><rect x="400" y="280.0" width="1" height="12.0" fill="#00ff00"/><rect x="398" y="287.0" width="4" height="2.0" fill="#000" stroke="#00ff00" stroke-width="1" transform="translate(0.5,0.5)" /><rect x="408" y="284.0" width="1" height="8.0" fill="#fff"/><rect x="406" y="286.0" width="5" height="5.0" fill="#fff"/><rect x="416" y="286.0" width="1" height="4.0" fill="#fff"/><rect x="414" y="288.0" width="5" height="3.0" fill="#fff"/><rect x="424" y="289.0" width="1" height="4.0" fill="#fff"/><rect x="422" y="289.0" width="5" height="5.0" fill="#fff"/><rect x="432" y="288.0" width="1" height="24.0" fill="#fff"/><rect x="430" y="291.0" width="5" height="16.0" fill="#fff"/><rect x="440" y="297.0" width="1" height="12.0" fill="#00ff00"/><rect x="438" y="304.0" width="4" height="3.0" fill="#000" stroke="#00ff00" stroke-width="1" transform="translate(0.5,0.5)" /><rect x="448" y="302.0" width="1" height="16.0" fill="#fff"/><rect x="446" y="304.0" width="5" height="13.0" fill="#fff"/><rect x="456" y="305.0" width="1" height="27.0" fill="#fff"/><rect x="454" y="316.0" width="5" height="10.0" fill="#fff"/><rect x="464" y="322.0" width="1" height="11.0" fill="#fff"/><rect x="462" y="325.0" width="5" height="7.0" fill="#fff"/><rect x="472" y="325.0" width="1" height="9.0" fill="#00ff00"/><rect x="470" y="327.0" width="4" height="3.0" fill="#000" stroke="#00ff00" stroke-width="1" transform="translate(0.5,0.5)" /><rect x="480" y="304.0" width="1" height="29.0" fill="#00ff00"/><rect x="478" y="314.0" width="4" height="13.0" fill="#000" stroke="#00ff00" stroke-width="1" transform="translate(0.5,0.5)" /><rect x="488" y="311.0" width="1" height="10.0" fill="#fff"/><rect x="486" y="312.0" width="5" height="5.0" fill="#fff"/><rect x="496" y="314.0" width="1" height="19.0" fill="#fff"/><rect x="494" y="314.0" width="5" height="11.0" fill="#fff"/><rect x="504" y="321.0" width="1" height="7.0" fill="#fff"/><rect x="502" y="324.0" width="5" height="4.0" fill="#fff"/><rect x="512" y="322.0" width="1" height="5.0" fill="#00ff00"/><rect x="510" y="323.0" width="4" height="4.0" fill="#000" stroke="#00ff00" stroke-width="1" transform="translate(0.5,0.5)" /><rect x="520" y="321.0" width="1" height="10.0" fill="#fff"/><rect x="518" y="323.0" width="5" height="6.0" fill="#fff"/><rect x="528" y="325.0" width="1" height="25.0" fill="#fff"/><rect x="526" y="329.0" width="5" height="21.0" fill="#fff"/><rect x="536" y="343.0" width="1" height="11.0" fill="#00ff00"/><rect x="534" y="347.0" width="4" height="4.0" fill="#000" stroke="#00ff00" stroke-width="1" transform="translate(0.5,0.5)" /><rect x="544" y="342.0" width="1" height="21.0" fill="#fff"/><rect x="542" y="347.0" width="5" height="15.0" fill="#fff"/><rect x="552" y="358.0" width="1" height="15.0" fill="#fff"/><rect x="550" y="360.0" width="5" height="6.0" fill="#fff"/><rect x="560" y="360.0" width="1" height="44.0" fill="#fff"/><rect x="558" y="371.0" width="5" height="33.0" fill="#fff"/><rect x="568" y="373.0" width="1" height="29.0" fill="#00ff00"/><rect x="566" y="383.0" width="4" height="19.0" fill="#000" stroke="#00ff00" stroke-width="1" transform="translate(0.5,0.5)" /><rect x="576" y="362.0" width="1" height="22.0" fill="#00ff00"/><rect x="574" y="367.0" width="4" height="15.0" fill="#000" stroke="#00ff00" stroke-width="1" transform="translate(0.5,0.5)" /><rect x="584" y="364.0" width="1" height="22.0" fill="#fff"/><rect x="582" y="366.0" width="5" height="6.0" fill="#fff"/><rect x="592" y="368.0" width="1" height="21.0" fill="#fff"/><rect x="590" y="371.0" width="5" height="14.0" fill="#fff"/><rect x="600" y="383.0" width="1" height="9.0" fill="#fff"/><rect x="598" y="384.0" width="5" height="6.0" fill="#fff"/><rect x="608" y="379.0" width="1" height="17.0" fill="#00ff00"/><rect x="606" y="381.0" width="4" height="7.0" fill="#000" stroke="#00ff00" stroke-width="1" transform="translate(0.5,0.5)" /><rect x="616" y="377.0" width="1" height="8.0" fill="#00ff00"/><rect x="614" y="380.0" width="4" height="3.0" fill="#000" stroke="#00ff00" stroke-width="1" transform="translate(0.5,0.5)" /><rect x="624" y="371.0" width="1" height="15.0" fill="#fff"/><rect x="622" y="380.0" width="5" height="4.0" fill="#fff"/><rect x="632" y="376.0" width="1" height="14.0" fill="#fff"/><rect x="630" y="383.0" width="5" height="4.0" fill="#fff"/><rect x="640" y="380.0" width="1" height="6.0" fill="#00ff00"/><rect x="638" y="382.0" width="4" height="3.0" fill="#000" stroke="#00ff00" stroke-width="1" transform="translate(0.5,0.5)" /><line x1="0" y1="271" x2="650" y2="271" stroke="#ff0000" stroke-width="2" stroke-dasharray="9,6,3,6"/><line x1="1" y1="383.5" x2="650" y2="383.5" stroke="#f06060" stroke-width="1"/><rect x="8" y="499" width="1" height="12" fill="#00e0ff"/><rect x="16" y="502" width="1" height="9" fill="#00e0ff"/><rect x="24" y="502" width="1" height="9" fill="#00e0ff"/><rect x="32" y="500" width="1" height="11" fill="#00e0ff"/><rect x="40" y="497" width="1" height="14" fill="#00e0ff"/><rect x="48" y="494" width="1" height="17" fill="#00e0ff"/><rect x="56" y="498" width="1" height="13" fill="#00e0ff"/><rect x="64" y="499" width="1" height="12" fill="#00e0ff"/><rect x="72" y="502" width="1" height="9" fill="#00e0ff"/><rect x="80" y="503" width="1" height="8" fill="#00e0ff"/><rect x="88" y="503" width="1" height="8" fill="#00e0ff"/><rect x="96" y="497" width="1" height="14" fill="#00e0ff"/><rect x="104" y="498" width="1" height="13" fill="#00e0ff"/><rect x="112" y="499" width="1" height="12" fill="#00e0ff"/><rect x="120" y="502" width="1" height="9" fill="#00e0ff"/><rect x="128" y="503" width="1" height="8" fill="#00e0ff"/><rect x="136" y="506" width="1" height="5" fill="#00e0ff"/><rect x="144" y="506" width="1" height="5" fill="#00e0ff"/><rect x="152" y="511" width="1" height="4" fill="#00e0ff"/><rect x="160" y="511" width="1" height="12" fill="#00e0ff"/><rect x="168" y="511" width="1" height="18" fill="#00e0ff"/><rect x="176" y="511" width="1" height="21" fill="#00e0ff"/><rect x="184" y="511" width="1" height="21" fill="#00e0ff"/><rect x="192" y="511" width="1" height="20" fill="#00e0ff"/><rect x="200" y="511" width="1" height="18" fill="#00e0ff"/><rect x="208" y="511" width="1" height="16" fill="#00e0ff"/><rect x="216" y="511" width="1" height="15" fill="#00e0ff"/><rect x="224" y="511" width="1" height="15" fill="#00e0ff"/><rect x="232" y="511" width="1" height="13" fill="#00e0ff"/><rect x="240" y="511" width="1" height="10" fill="#00e0ff"/><rect x="248" y="511" width="1" height="7" fill="#00e0ff"/><rect x="256" y="511" width="1" height="5" fill="#00e0ff"/><rect x="264" y="511" width="1" height="4" fill="#00e0ff"/><rect x="272" y="511" width="1" height="2" fill="#00e0ff"/><rect x="280" y="511" width="1" height="2" fill="#00e0ff"/><rect x="288" y="511" width="1" height="4" fill="#00e0ff"/><rect x="296" y="511" width="1" height="4" fill="#00e0ff"/><rect x="304" y="511" width="1" height="2" fill="#00e0ff"/><rect x="312" y="510" width="1" height="1" fill="#00e0ff"/><rect x="320" y="509" width="1" height="2" fill="#00e0ff"/><rect x="328" y="509" width="1" height="2" fill="#00e0ff"/><rect x="336" y="511" width="1" height="1" fill="#00e0ff"/><rect x="344" y="510" width="1" height="1" fill="#00e0ff"/><rect x="352" y="509" width="1" height="2" fill="#00e0ff"/><rect x="360" y="507" width="1" height="4" fill="#00e0ff"/><rect x="368" y="505" width="1" height="6" fill="#00e0ff"/><rect x="376" y="505" width="1" height="6" fill="#00e0ff"/><rect x="384" y="507" width="1" height="4" fill="#00e0ff"/><rect x="392" y="510" width="1" height="1" fill="#00e0ff"/><rect x="400" y="511" width="1" height="1" fill="#00e0ff"/><rect x="408" y="511" width="1" height="2" fill="#00e0ff"/><rect x="416" y="511" width="1" height="3" fill="#00e0ff"/><rect x="424" y="511" width="1" height="4" fill="#00e0ff"/><rect x="432" y="511" width="1" height="7" fill="#00e0ff"/><rect x="440" y="511" width="1" height="9" fill="#00e0ff"/><rect x="448" y="511" width="1" height="12" fill="#00e0ff"/><rect x="456" y="511" width="1" height="16" fill="#00e0ff"/><rect x="464" y="511" width="1" height="18" fill="#00e0ff"/><rect x="472" y="511" width="1" height="18" fill="#00e0ff"/><rect x="480" y="511" width="1" height="13" fill="#00e0ff"/><rect x="488" y="511" width="1" height="9" fill="#00e0ff"/><rect x="496" y="511" width="1" height="9" fill="#00e0ff"/><rect x="504" y="511" width="1" height="8" fill="#00e0ff"/><rect x="512" y="511" width="1" height="6" fill="#00e0ff"/><rect x="520" y="511" width="1" height="4" fill="#00e0ff"/><rect x="528" y="511" width="1" height="9" fill="#00e0ff"/><rect x="536" y="511" width="1" height="9" fill="#00e0ff"/><rect x="544" y="511" width="1" height="13" fill="#00e0ff"/><rect x="552" y="511" width="1" height="15" fill="#00e0ff"/><rect x="560" y="511" width="1" height="23" fill="#00e0ff"/><rect x="568" y="511" width="1" height="22" fill="#00e0ff"/><rect x="576" y="511" width="1" height="16" fill="#00e0ff"/><rect x="584" y="511" width="1" height="12" fill="#00e0ff"/><rect x="592" y="511" width="1" height="12" fill="#00e0ff"/><rect x="600" y="511" width="1" height="11" fill="#00e0ff"/><rect x="608" y="511" width="1" height="7" fill="#00e0ff"/><rect x="616" y="511" width="1" height="3" fill="#00e0ff"/><rect x="624" y="511" width="1" height="2" fill="#00e0ff"/><rect x="632" y="511" width="1" height="1" fill="#00e0ff"/><rect x="640" y="508" width="1" height="3" fill="#00e0ff"/><polyline points="0.0,506.0 7.5,504.4 22.5,503.4 26.3,500.6 37.5,489.4 48.8,484.7 56.3,483.4 71.3,483.8 88.1,480.0 97.5,468.8 105.0,465.0 116.3,466.5 131.3,466.9 144.4,466.5 159.4,487.5 178.1,506.3 206.3,518.4 225.0,525.0 232.5,526.9 241.9,526.9 251.3,525.0 268.1,524.0 281.3,522.2 296.3,527.3 318.8,520.3 333.8,521.2 345.8,520.3 363.1,515.0 376.6,511.3 384.3,511.7 394.0,515.0 417.1,519.0 422.9,521.0 432.5,527.0 444.0,531.0 455.6,540.6 463.3,549.2 473.0,554.0 488.4,551.2 503.8,554.4 517.3,553.7 528.8,560.2 538.5,565.6 546.2,571.4 553.9,577.2 561.6,588.7 569.3,593.5 584.7,591.6 600.1,594.9 615.5,590.7 629.0,587.8 640.6,583.0" fill="none" stroke="#80ff80" stroke-width="1"/><polyline points="0.0,519.4 30.0,510.0 63.8,495.0 88.1,488.4 112.5,478.0 131.3,472.5 146.3,471.6 159.4,474.4 193.1,495.0 225.0,510.0 247.5,518.4 271.9,521.2 292.5,523.5 318.8,522.2 340.0,521.3 355.4,520.9 374.7,517.0 394.0,515.0 417.1,515.9 447.9,524.2 478.7,539.6 513.4,548.3 536.5,554.0 555.8,561.8 571.2,573.3 590.5,581.0 609.8,586.8 629.0,587.2 640.6,585.8" fill="none" stroke="#ff0000" stroke-width="1.1"/><rect x="-2" y="709" width="4" height="36" fill="#006400"/><rect x="6" y="707" width="4" height="38" fill="#006400"/><rect x="14" y="707" width="4" height="38" fill="#006400"/><rect x="22" y="706" width="4" height="39" fill="#006400"/><rect x="30" y="699" width="4" height="46" fill="#006400"/><rect x="38" y="691" width="4" height="54" fill="#006400"/><rect x="46" y="679" width="4" height="66" fill="#006400"/><rect x="54" y="677" width="4" height="68" fill="#006400"/><rect x="62" y="672" width="4" height="73" fill="#006400"/><rect x="70" y="671" width="4" height="74" fill="#006400"/><rect x="78" y="667" width="4" height="78" fill="#006400"/><rect x="86" y="667" width="4" height="78" fill="#006400"/><rect x="94" y="654" width="4" height="91" fill="#006400"/><rect x="102" y="651" width="4" height="94" fill="#006400"/><rect x="110" y="651" width="4" height="94" fill="#ff0000"/><rect x="118" y="656" width="4" height="89" fill="#ff0000"/><rect x="126" y="661" width="4" height="84" fill="#ff0000"/><rect x="134" y="671" width="4" height="74" fill="#ff0000"/><rect x="142" y="671" width="4" height="74" fill="#006400"/><rect x="150" y="671" width="4" height="74" fill="#ff0000"/><rect x="158" y="672" width="4" height="73" fill="#ff0000"/><rect x="166" y="672" width="4" height="73" fill="#006400"/><rect x="174" y="670" width="4" height="75" fill="#006400"/><rect x="182" y="670" width="4" height="75" fill="#006400"/><rect x="190" y="672" width="4" height="73" fill="#ff0000"/><rect x="198" y="672" width="4" height="73" fill="#ff0000"/><rect x="206" y="670" width="4" height="75" fill="#006400"/><rect x="214" y="667" width="4" height="78" fill="#006400"/><rect x="222" y="665" width="4" height="80" fill="#006400"/><rect x="230" y="661" width="4" height="84" fill="#006400"/><rect x="238" y="660" width="4" height="85" fill="#006400"/><rect x="246" y="659" width="4" height="86" fill="#006400"/><rect x="254" y="657" width="4" height="88" fill="#006400"/><rect x="262" y="657" width="4" height="88" fill="#006400"/><rect x="270" y="667" width="4" height="78" fill="#ff0000"/><rect x="278" y="672" width="4" height="73" fill="#ff0000"/><rect x="286" y="678" width="4" height="67" fill="#ff0000"/><rect x="294" y="683" width="4" height="62" fill="#ff0000"/><rect x="302" y="692" width="4" height="53" fill="#ff0000"/><rect x="310" y="705" width="4" height="40" fill="#ff0000"/><rect x="318" y="734" width="4" height="11" fill="#ff0000"/><rect x="326" y="738" width="4" height="7" fill="#ff0000"/><rect x="334" y="737" width="4" height="8" fill="#006400"/><rect x="342" y="737" width="4" height="8" fill="#ff0000"/><rect x="350" y="736" width="4" height="9" fill="#006400"/><rect x="358" y="735" width="4" height="10" fill="#006400"/><rect x="366" y="732" width="4" height="13" fill="#006400"/><rect x="374" y="732" width="4" height="13" fill="#006400"/><rect x="382" y="731" width="4" height="14" fill="#006400"/><rect x="390" y="731" width="4" height="14" fill="#006400"/><rect x="398" y="731" width="4" height="14" fill="#ff0000"/><rect x="406" y="731" width="4" height="14" fill="#ff0000"/><rect x="414" y="729" width="4" height="16" fill="#006400"/><rect x="422" y="728" width="4" height="17" fill="#006400"/><rect x="430" y="719" width="4" height="26" fill="#006400"/><rect x="438" y="713" width="4" height="32" fill="#006400"/><rect x="446" y="703" width="4" height="42" fill="#006400"/><rect x="454" y="691" width="4" height="54" fill="#006400"/><rect x="462" y="678" width="4" height="67" fill="#006400"/><rect x="470" y="668" width="4" height="77" fill="#006400"/><rect x="478" y="667" width="4" height="78" fill="#006400"/><rect x="486" y="665" width="4" height="80" fill="#006400"/><rect x="494" y="663" width="4" height="82" fill="#006400"/><rect x="502" y="660" width="4" height="85" fill="#006400"/><rect x="510" y="658" width="4" height="87" fill="#006400"/><rect x="518" y="654" width="4" height="91" fill="#006400"/><rect x="526" y="647" width="4" height="98" fill="#006400"/><rect x="534" y="645" width="4" height="100" fill="#006400"/><rect x="542" y="641" width="4" height="104" fill="#006400"/><rect x="550" y="637" width="4" height="108" fill="#006400"/><rect x="558" y="615" width="4" height="130" fill="#006400"/><rect x="566" y="608" width="4" height="137" fill="#006400"/><rect x="574" y="609" width="4" height="136" fill="#ff0000"/><rect x="582" y="610" width="4" height="135" fill="#ff0000"/><rect x="590" y="611" width="4" height="134" fill="#ff0000"/><rect x="598" y="612" width="4" height="133" fill="#ff0000"/><rect x="606" y="613" width="4" height="132" fill="#ff0000"/><rect x="614" y="618" width="4" height="127" fill="#ff0000"/><rect x="622" y="619" width="4" height="126" fill="#ff0000"/><rect x="630" y="619" width="4" height="126" fill="#ff0000"/><rect x="638" y="619" width="4" height="126" fill="#006400"/><text x="4" y="183" fill="#fff" font-size="10" text-anchor="start" font-weight="normal" textLength="212" lengthAdjust="spacingAndGlyphs">EUR/USD,H4&#160;&#160;0.96223&#160;&#160;0.96345&#160;&#160;0.96130&#160;&#160;0.96280</text><text x="4" y="470" fill="#9fe89f" font-size="10" text-anchor="start" font-weight="normal" textLength="110" lengthAdjust="spacingAndGlyphs">MACD (26,12,9)&#160;&#160;-0.00726</text><text x="6" y="615" fill="#0a7a0a" font-size="10" text-anchor="start" font-weight="normal" textLength="54" lengthAdjust="spacingAndGlyphs">10&#160;&#160;21.20782</text><rect x="650" y="202" width="6" height="1" fill="#fff"/><text x="660" y="206" fill="#fff" font-size="10" text-anchor="start" font-weight="normal" textLength="33.0" lengthAdjust="spacingAndGlyphs">1.02808</text><rect x="650" y="234" width="6" height="1" fill="#fff"/><text x="660" y="238" fill="#fff" font-size="10" text-anchor="start" font-weight="normal" textLength="33.0" lengthAdjust="spacingAndGlyphs">1.01652</text><rect x="650" y="298" width="6" height="1" fill="#fff"/><text x="660" y="302" fill="#fff" font-size="10" text-anchor="start" font-weight="normal" textLength="33.0" lengthAdjust="spacingAndGlyphs">0.99340</text><rect x="650" y="330" width="6" height="1" fill="#fff"/><text x="660" y="334" fill="#fff" font-size="10" text-anchor="start" font-weight="normal" textLength="33.0" lengthAdjust="spacingAndGlyphs">0.98184</text><rect x="650" y="362" width="6" height="1" fill="#fff"/><text x="660" y="366" fill="#fff" font-size="10" text-anchor="start" font-weight="normal" textLength="33.0" lengthAdjust="spacingAndGlyphs">0.97028</text><rect x="650" y="394" width="6" height="1" fill="#fff"/><text x="660" y="398" fill="#fff" font-size="10" text-anchor="start" font-weight="normal" textLength="33.0" lengthAdjust="spacingAndGlyphs">0.95872</text><rect x="650" y="426" width="6" height="1" fill="#fff"/><text x="660" y="430" fill="#fff" font-size="10" text-anchor="start" font-weight="normal" textLength="33.0" lengthAdjust="spacingAndGlyphs">0.94716</text><text x="660" y="468" fill="#fff" font-size="10" text-anchor="start" font-weight="normal" textLength="33.0" lengthAdjust="spacingAndGlyphs">0.00532</text><rect x="650" y="511" width="6" height="1" fill="#fff"/><text x="660" y="515" fill="#fff" font-size="10" text-anchor="start" font-weight="normal" textLength="33.0" lengthAdjust="spacingAndGlyphs">0.00000</text><text x="659" y="598" fill="#fff" font-size="10" text-anchor="start" font-weight="normal" textLength="37.8" lengthAdjust="spacingAndGlyphs">-0.00909</text><rect x="650" y="218" width="3" height="1" fill="#fff"/><rect x="650" y="250" width="3" height="1" fill="#fff"/><rect x="650" y="282" width="3" height="1" fill="#fff"/><rect x="650" y="314" width="3" height="1" fill="#fff"/><rect x="650" y="346" width="3" height="1" fill="#fff"/><rect x="650" y="378" width="3" height="1" fill="#fff"/><rect x="650" y="410" width="3" height="1" fill="#fff"/><rect x="650" y="442" width="3" height="1" fill="#fff"/><rect x="650" y="264" width="52" height="13" fill="#ff0000"/><text x="660" y="274.5" fill="#000" font-size="10" text-anchor="start" font-weight="normal" textLength="33" lengthAdjust="spacingAndGlyphs">1.00357</text><rect x="650" y="377" width="52" height="11" fill="#fd6464"/><text x="660" y="386.5" fill="#fff" font-size="10" text-anchor="start" font-weight="normal" textLength="33" lengthAdjust="spacingAndGlyphs">0.96280</text><rect x="1" y="747" width="1" height="3" fill="#fff"/><text x="1" y="758" fill="#fff" font-size="10" text-anchor="start" font-weight="normal" textLength="55" lengthAdjust="spacingAndGlyphs">08 Sep 08:00</text><rect x="72" y="747" width="1" height="3" fill="#fff"/><text x="72" y="758" fill="#fff" font-size="10" text-anchor="start" font-weight="normal" textLength="55" lengthAdjust="spacingAndGlyphs">09 Sep 20:00</text><rect x="152" y="747" width="1" height="3" fill="#fff"/><text x="152" y="758" fill="#fff" font-size="10" text-anchor="start" font-weight="normal" textLength="55" lengthAdjust="spacingAndGlyphs">13 Sep 12:00</text><rect x="232" y="747" width="1" height="3" fill="#fff"/><text x="232" y="758" fill="#fff" font-size="10" text-anchor="start" font-weight="normal" textLength="55" lengthAdjust="spacingAndGlyphs">15 Sep 04:00</text><rect x="312" y="747" width="1" height="3" fill="#fff"/><text x="312" y="758" fill="#fff" font-size="10" text-anchor="start" font-weight="normal" textLength="55" lengthAdjust="spacingAndGlyphs">16 Sep 20:00</text><rect x="392" y="747" width="1" height="3" fill="#fff"/><text x="392" y="758" fill="#fff" font-size="10" text-anchor="start" font-weight="normal" textLength="55" lengthAdjust="spacingAndGlyphs">20 Sep 12:00</text><rect x="472" y="747" width="1" height="3" fill="#fff"/><text x="472" y="758" fill="#fff" font-size="10" text-anchor="start" font-weight="normal" textLength="55" lengthAdjust="spacingAndGlyphs">22 Sep 04:00</text><rect x="552" y="747" width="1" height="3" fill="#fff"/><text x="552" y="758" fill="#fff" font-size="10" text-anchor="start" font-weight="normal" textLength="55" lengthAdjust="spacingAndGlyphs">23 Sep 20:00</text><rect x="632" y="747" width="1" height="3" fill="#fff"/><text x="632" y="758" fill="#fff" font-size="10" text-anchor="start" font-weight="normal" textLength="55" lengthAdjust="spacingAndGlyphs">27 Sep 12:00</text></svg><svg width="736" height="592" viewBox="706 171 736 592" style="position:absolute;left:706px;top:171px" font-family='"Liberation Sans", sans-serif'><rect x="706" y="171" width="736" height="592" fill="#000"/><line x1="738.5" y1="173" x2="738.5" y2="457" stroke="#8c8c8c" stroke-dasharray="3,3"/><line x1="770.5" y1="173" x2="770.5" y2="457" stroke="#8c8c8c" stroke-dasharray="3,3"/><line x1="802.5" y1="173" x2="802.5" y2="457" stroke="#8c8c8c" stroke-dasharray="3,3"/><line x1="834.5" y1="173" x2="834.5" y2="457" stroke="#8c8c8c" stroke-dasharray="3,3"/><line x1="866.5" y1="173" x2="866.5" y2="457" stroke="#8c8c8c" stroke-dasharray="3,3"/><line x1="898.5" y1="173" x2="898.5" y2="457" stroke="#8c8c8c" stroke-dasharray="3,3"/><line x1="930.5" y1="173" x2="930.5" y2="457" stroke="#8c8c8c" stroke-dasharray="3,3"/><line x1="962.5" y1="173" x2="962.5" y2="457" stroke="#8c8c8c" stroke-dasharray="3,3"/><line x1="994.5" y1="173" x2="994.5" y2="457" stroke="#8c8c8c" stroke-dasharray="3,3"/><line x1="1026.5" y1="173" x2="1026.5" y2="457" stroke="#8c8c8c" stroke-dasharray="3,3"/><line x1="1058.5" y1="173" x2="1058.5" y2="457" stroke="#8c8c8c" stroke-dasharray="3,3"/><line x1="1090.5" y1="173" x2="1090.5" y2="457" stroke="#8c8c8c" stroke-dasharray="3,3"/><line x1="1122.5" y1="173" x2="1122.5" y2="457" stroke="#8c8c8c" stroke-dasharray="3,3"/><line x1="1154.5" y1="173" x2="1154.5" y2="457" stroke="#8c8c8c" stroke-dasharray="3,3"/><line x1="1186.5" y1="173" x2="1186.5" y2="457" stroke="#8c8c8c" stroke-dasharray="3,3"/><line x1="1218.5" y1="173" x2="1218.5" y2="457" stroke="#8c8c8c" stroke-dasharray="3,3"/><line x1="1250.5" y1="173" x2="1250.5" y2="457" stroke="#8c8c8c" stroke-dasharray="3,3"/><line x1="1282.5" y1="173" x2="1282.5" y2="457" stroke="#8c8c8c" stroke-dasharray="3,3"/><line x1="1314.5" y1="173" x2="1314.5" y2="457" stroke="#8c8c8c" stroke-dasharray="3,3"/><line x1="1346.5" y1="173" x2="1346.5" y2="457" stroke="#8c8c8c" stroke-dasharray="3,3"/><line x1="1378.5" y1="173" x2="1378.5" y2="457" stroke="#8c8c8c" stroke-dasharray="3,3"/><line x1="707" y1="202.5" x2="1389" y2="202.5" stroke="#8c8c8c" stroke-dasharray="3,3"/><line x1="707" y1="234.5" x2="1389" y2="234.5" stroke="#8c8c8c" stroke-dasharray="3,3"/><line x1="707" y1="266.5" x2="1389" y2="266.5" stroke="#8c8c8c" stroke-dasharray="3,3"/><line x1="707" y1="298.5" x2="1389" y2="298.5" stroke="#8c8c8c" stroke-dasharray="3,3"/><line x1="707" y1="330.5" x2="1389" y2="330.5" stroke="#8c8c8c" stroke-dasharray="3,3"/><line x1="707" y1="362.5" x2="1389" y2="362.5" stroke="#8c8c8c" stroke-dasharray="3,3"/><line x1="707" y1="394.5" x2="1389" y2="394.5" stroke="#8c8c8c" stroke-dasharray="3,3"/><line x1="707" y1="426.5" x2="1389" y2="426.5" stroke="#8c8c8c" stroke-dasharray="3,3"/><line x1="738.5" y1="460" x2="738.5" y2="601" stroke="#8c8c8c" stroke-dasharray="3,3"/><line x1="770.5" y1="460" x2="770.5" y2="601" stroke="#8c8c8c" stroke-dasharray="3,3"/><line x1="802.5" y1="460" x2="802.5" y2="601" stroke="#8c8c8c" stroke-dasharray="3,3"/><line x1="834.5" y1="460" x2="834.5" y2="601" stroke="#8c8c8c" stroke-dasharray="3,3"/><line x1="866.5" y1="460" x2="866.5" y2="601" stroke="#8c8c8c" stroke-dasharray="3,3"/><line x1="898.5" y1="460" x2="898.5" y2="601" stroke="#8c8c8c" stroke-dasharray="3,3"/><line x1="930.5" y1="460" x2="930.5" y2="601" stroke="#8c8c8c" stroke-dasharray="3,3"/><line x1="962.5" y1="460" x2="962.5" y2="601" stroke="#8c8c8c" stroke-dasharray="3,3"/><line x1="994.5" y1="460" x2="994.5" y2="601" stroke="#8c8c8c" stroke-dasharray="3,3"/><line x1="1026.5" y1="460" x2="1026.5" y2="601" stroke="#8c8c8c" stroke-dasharray="3,3"/><line x1="1058.5" y1="460" x2="1058.5" y2="601" stroke="#8c8c8c" stroke-dasharray="3,3"/><line x1="1090.5" y1="460" x2="1090.5" y2="601" stroke="#8c8c8c" stroke-dasharray="3,3"/><line x1="1122.5" y1="460" x2="1122.5" y2="601" stroke="#8c8c8c" stroke-dasharray="3,3"/><line x1="1154.5" y1="460" x2="1154.5" y2="601" stroke="#8c8c8c" stroke-dasharray="3,3"/><line x1="1186.5" y1="460" x2="1186.5" y2="601" stroke="#8c8c8c" stroke-dasharray="3,3"/><line x1="1218.5" y1="460" x2="1218.5" y2="601" stroke="#8c8c8c" stroke-dasharray="3,3"/><line x1="1250.5" y1="460" x2="1250.5" y2="601" stroke="#8c8c8c" stroke-dasharray="3,3"/><line x1="1282.5" y1="460" x2="1282.5" y2="601" stroke="#8c8c8c" stroke-dasharray="3,3"/><line x1="1314.5" y1="460" x2="1314.5" y2="601" stroke="#8c8c8c" stroke-dasharray="3,3"/><line x1="1346.5" y1="460" x2="1346.5" y2="601" stroke="#8c8c8c" stroke-dasharray="3,3"/><line x1="1378.5" y1="460" x2="1378.5" y2="601" stroke="#8c8c8c" stroke-dasharray="3,3"/><line x1="707" y1="513.5" x2="1389" y2="513.5" stroke="#8c8c8c" stroke-dasharray="3,3"/><line x1="738.5" y1="604" x2="738.5" y2="745" stroke="#8c8c8c" stroke-dasharray="3,3"/><line x1="770.5" y1="604" x2="770.5" y2="745" stroke="#8c8c8c" stroke-dasharray="3,3"/><line x1="802.5" y1="604" x2="802.5" y2="745" stroke="#8c8c8c" stroke-dasharray="3,3"/><line x1="834.5" y1="604" x2="834.5" y2="745" stroke="#8c8c8c" stroke-dasharray="3,3"/><line x1="866.5" y1="604" x2="866.5" y2="745" stroke="#8c8c8c" stroke-dasharray="3,3"/><line x1="898.5" y1="604" x2="898.5" y2="745" stroke="#8c8c8c" stroke-dasharray="3,3"/><line x1="930.5" y1="604" x2="930.5" y2="745" stroke="#8c8c8c" stroke-dasharray="3,3"/><line x1="962.5" y1="604" x2="962.5" y2="745" stroke="#8c8c8c" stroke-dasharray="3,3"/><line x1="994.5" y1="604" x2="994.5" y2="745" stroke="#8c8c8c" stroke-dasharray="3,3"/><line x1="1026.5" y1="604" x2="1026.5" y2="745" stroke="#8c8c8c" stroke-dasharray="3,3"/><line x1="1058.5" y1="604" x2="1058.5" y2="745" stroke="#8c8c8c" stroke-dasharray="3,3"/><line x1="1090.5" y1="604" x2="1090.5" y2="745" stroke="#8c8c8c" stroke-dasharray="3,3"/><line x1="1122.5" y1="604" x2="1122.5" y2="745" stroke="#8c8c8c" stroke-dasharray="3,3"/><line x1="1154.5" y1="604" x2="1154.5" y2="745" stroke="#8c8c8c" stroke-dasharray="3,3"/><line x1="1186.5" y1="604" x2="1186.5" y2="745" stroke="#8c8c8c" stroke-dasharray="3,3"/><line x1="1218.5" y1="604" x2="1218.5" y2="745" stroke="#8c8c8c" stroke-dasharray="3,3"/><line x1="1250.5" y1="604" x2="1250.5" y2="745" stroke="#8c8c8c" stroke-dasharray="3,3"/><line x1="1282.5" y1="604" x2="1282.5" y2="745" stroke="#8c8c8c" stroke-dasharray="3,3"/><line x1="1314.5" y1="604" x2="1314.5" y2="745" stroke="#8c8c8c" stroke-dasharray="3,3"/><line x1="1346.5" y1="604" x2="1346.5" y2="745" stroke="#8c8c8c" stroke-dasharray="3,3"/><line x1="1378.5" y1="604" x2="1378.5" y2="745" stroke="#8c8c8c" stroke-dasharray="3,3"/><line x1="707" y1="661.5" x2="1389" y2="661.5" stroke="#8c8c8c" stroke-dasharray="3,3"/><line x1="707" y1="721.5" x2="1389" y2="721.5" stroke="#8c8c8c" stroke-dasharray="3,3"/><rect x="706.5" y="172.5" width="683" height="285" fill="none" stroke="#fff"/><rect x="706.5" y="459.5" width="683" height="142" fill="none" stroke="#fff"/><rect x="706.5" y="603.5" width="683" height="142" fill="none" stroke="#fff"/><rect x="1389" y="459" width="7" height="1" fill="#fff"/><rect x="1389" y="601" width="7" height="1" fill="#fff"/><rect x="1389" y="603" width="7" height="1" fill="#fff"/><rect x="1389" y="745" width="7" height="1" fill="#fff"/><rect x="706" y="284.0" width="1" height="22.0" fill="#00ff00"/><rect x="704" y="286.0" width="4" height="19.0" fill="#000" stroke="#00ff00" stroke-width="1" transform="translate(0.5,0.5)" /><rect x="714" y="308.0" width="1" height="15.0" fill="#00ff00"/><rect x="712" y="310.0" width="4" height="10.0" fill="#000" stroke="#00ff00" stroke-width="1" transform="translate(0.5,0.5)" /><rect x="722" y="301.0" width="1" height="24.0" fill="#fff"/><rect x="720" y="310.0" width="5" height="7.0" fill="#fff"/><rect x="730" y="293.0" width="1" height="30.0" fill="#00ff00"/><rect x="728" y="296.0" width="4" height="21.0" fill="#000" stroke="#00ff00" stroke-width="1" transform="translate(0.5,0.5)" /><rect x="738" y="283.0" width="1" height="30.0" fill="#00ff00"/><rect x="736" y="291.0" width="4" height="4.0" fill="#000" stroke="#00ff00" stroke-width="1" transform="translate(0.5,0.5)" /><rect x="746" y="289.0" width="1" height="4.0" fill="#fff"/><rect x="744" y="289.0" width="5" height="5.0" fill="#fff"/><rect x="754" y="290.0" width="1" height="8.0" fill="#fff"/><rect x="752" y="292.0" width="5" height="6.0" fill="#fff"/><rect x="762" y="290.0" width="1" height="51.0" fill="#fff"/><rect x="760" y="295.0" width="5" height="38.0" fill="#fff"/><rect x="770" y="317.0" width="1" height="26.0" fill="#00ff00"/><rect x="768" y="326.0" width="4" height="7.0" fill="#000" stroke="#00ff00" stroke-width="1" transform="translate(0.5,0.5)" /><rect x="778" y="308.0" width="1" height="29.0" fill="#00ff00"/><rect x="776" y="324.0" width="4" height="3.0" fill="#000" stroke="#00ff00" stroke-width="1" transform="translate(0.5,0.5)" /><rect x="786" y="314.0" width="1" height="39.0" fill="#fff"/><rect x="784" y="324.0" width="5" height="5.0" fill="#fff"/><rect x="794" y="307.0" width="1" height="33.0" fill="#00ff00"/><rect x="792" y="314.0" width="4" height="14.0" fill="#000" stroke="#00ff00" stroke-width="1" transform="translate(0.5,0.5)" /><rect x="802" y="314.0" width="1" height="2.0" fill="#00ff00"/><rect x="800" y="314.0" width="4" height="2.0" fill="#000" stroke="#00ff00" stroke-width="1" transform="translate(0.5,0.5)" /><rect x="810" y="312.0" width="1" height="2.0" fill="#00ff00"/><rect x="808" y="312.0" width="4" height="1.0" fill="#000" stroke="#00ff00" stroke-width="1" transform="translate(0.5,0.5)" /><rect x="818" y="290.0" width="1" height="24.0" fill="#00ff00"/><rect x="816" y="305.0" width="4" height="9.0" fill="#000" stroke="#00ff00" stroke-width="1" transform="translate(0.5,0.5)" /><rect x="826" y="267.0" width="1" height="43.0" fill="#00ff00"/><rect x="824" y="274.0" width="4" height="30.0" fill="#000" stroke="#00ff00" stroke-width="1" transform="translate(0.5,0.5)" /><rect x="834" y="261.0" width="1" height="26.0" fill="#fff"/><rect x="832" y="274.0" width="5" height="5.0" fill="#fff"/><rect x="842" y="259.0" width="1" height="30.0" fill="#00ff00"/><rect x="840" y="261.0" width="4" height="17.0" fill="#000" stroke="#00ff00" stroke-width="1" transform="translate(0.5,0.5)" /><rect x="850" y="245.0" width="1" height="32.0" fill="#fff"/><rect x="848" y="262.0" width="5" height="4.0" fill="#fff"/><rect x="858" y="263.0" width="1" height="3.0" fill="#fff"/><rect x="856" y="263.0" width="5" height="4.0" fill="#fff"/><rect x="866" y="255.0" width="1" height="9.0" fill="#fff"/><rect x="864" y="255.0" width="5" height="10.0" fill="#fff"/><rect x="874" y="249.0" width="1" height="32.0" fill="#00ff00"/><rect x="872" y="254.0" width="4" height="10.0" fill="#000" stroke="#00ff00" stroke-width="1" transform="translate(0.5,0.5)" /><rect x="882" y="243.0" width="1" height="23.0" fill="#fff"/><rect x="880" y="252.0" width="5" height="7.0" fill="#fff"/><rect x="890" y="233.0" width="1" height="36.0" fill="#00ff00"/><rect x="888" y="239.0" width="4" height="19.0" fill="#000" stroke="#00ff00" stroke-width="1" transform="translate(0.5,0.5)" /><rect x="898" y="231.0" width="1" height="23.0" fill="#fff"/><rect x="896" y="240.0" width="5" height="4.0" fill="#fff"/><rect x="906" y="225.0" width="1" height="44.0" fill="#fff"/><rect x="904" y="240.0" width="5" height="5.0" fill="#fff"/><rect x="914" y="240.0" width="1" height="3.0" fill="#00ff00"/><rect x="912" y="240.0" width="4" height="3.0" fill="#000" stroke="#00ff00" stroke-width="1" transform="translate(0.5,0.5)" /><rect x="922" y="239.0" width="1" height="12.0" fill="#fff"/><rect x="920" y="240.0" width="5" height="6.0" fill="#fff"/><rect x="930" y="224.0" width="1" height="25.0" fill="#00ff00"/><rect x="928" y="227.0" width="4" height="18.0" fill="#000" stroke="#00ff00" stroke-width="1" transform="translate(0.5,0.5)" /><rect x="938" y="225.0" width="1" height="43.0" fill="#fff"/><rect x="936" y="227.0" width="5" height="40.0" fill="#fff"/><rect x="946" y="252.0" width="1" height="26.0" fill="#00ff00"/><rect x="944" y="257.0" width="4" height="9.0" fill="#000" stroke="#00ff00" stroke-width="1" transform="translate(0.5,0.5)" /><rect x="954" y="240.0" width="1" height="21.0" fill="#00ff00"/><rect x="952" y="249.0" width="4" height="7.0" fill="#000" stroke="#00ff00" stroke-width="1" transform="translate(0.5,0.5)" /><rect x="962" y="245.0" width="1" height="39.0" fill="#fff"/><rect x="960" y="248.0" width="5" height="21.0" fill="#fff"/><rect x="970" y="269.0" width="1" height="2.0" fill="#fff"/><rect x="968" y="269.0" width="5" height="3.0" fill="#fff"/><rect x="978" y="264.0" width="1" height="8.0" fill="#fff"/><rect x="976" y="270.0" width="5" height="3.0" fill="#fff"/><rect x="986" y="233.0" width="1" height="41.0" fill="#00ff00"/><rect x="984" y="243.0" width="4" height="26.0" fill="#000" stroke="#00ff00" stroke-width="1" transform="translate(0.5,0.5)" /><rect x="994" y="237.0" width="1" height="18.0" fill="#fff"/><rect x="992" y="243.0" width="5" height="7.0" fill="#fff"/><rect x="1002" y="220.0" width="1" height="37.0" fill="#00ff00"/><rect x="1000" y="223.0" width="4" height="26.0" fill="#000" stroke="#00ff00" stroke-width="1" transform="translate(0.5,0.5)" /><rect x="1010" y="187.0" width="1" height="35.0" fill="#00ff00"/><rect x="1008" y="200.0" width="4" height="22.0" fill="#000" stroke="#00ff00" stroke-width="1" transform="translate(0.5,0.5)" /><rect x="1018" y="190.0" width="1" height="24.0" fill="#00ff00"/><rect x="1016" y="196.0" width="4" height="16.0" fill="#000" stroke="#00ff00" stroke-width="1" transform="translate(0.5,0.5)" /><rect x="1026" y="191.0" width="1" height="17.0" fill="#00ff00"/><rect x="1024" y="194.0" width="4" height="11.0" fill="#000" stroke="#00ff00" stroke-width="1" transform="translate(0.5,0.5)" /><rect x="1034" y="191.0" width="1" height="21.0" fill="#fff"/><rect x="1032" y="192.0" width="5" height="19.0" fill="#fff"/><rect x="1042" y="220.0" width="1" height="13.0" fill="#fff"/><rect x="1040" y="223.0" width="5" height="6.0" fill="#fff"/><rect x="1050" y="223.0" width="1" height="17.0" fill="#00ff00"/><rect x="1048" y="228.0" width="4" height="2.0" fill="#000" stroke="#00ff00" stroke-width="1" transform="translate(0.5,0.5)" /><rect x="1058" y="226.0" width="1" height="44.0" fill="#fff"/><rect x="1056" y="228.0" width="5" height="33.0" fill="#fff"/><rect x="1066" y="248.0" width="1" height="25.0" fill="#fff"/><rect x="1064" y="261.0" width="5" height="7.0" fill="#fff"/><rect x="1074" y="266.0" width="1" height="23.0" fill="#fff"/><rect x="1072" y="267.0" width="5" height="15.0" fill="#fff"/><rect x="1082" y="283.0" width="1" height="2.0" fill="#00ff00"/><rect x="1080" y="283.0" width="4" height="2.0" fill="#000" stroke="#00ff00" stroke-width="1" transform="translate(0.5,0.5)" /><rect x="1090" y="283.0" width="1" height="2.0" fill="#00ff00"/><rect x="1088" y="283.0" width="4" height="2.0" fill="#000" stroke="#00ff00" stroke-width="1" transform="translate(0.5,0.5)" /><rect x="1098" y="263.0" width="1" height="24.0" fill="#00ff00"/><rect x="1096" y="281.0" width="4" height="4.0" fill="#000" stroke="#00ff00" stroke-width="1" transform="translate(0.5,0.5)" /><rect x="1106" y="249.0" width="1" height="40.0" fill="#00ff00"/><rect x="1104" y="263.0" width="4" height="17.0" fill="#000" stroke="#00ff00" stroke-width="1" transform="translate(0.5,0.5)" /><rect x="1114" y="262.0" width="1" height="19.0" fill="#fff"/><rect x="1112" y="262.0" width="5" height="8.0" fill="#fff"/><rect x="1122" y="239.0" width="1" height="34.0" fill="#00ff00"/><rect x="1120" y="244.0" width="4" height="26.0" fill="#000" stroke="#00ff00" stroke-width="1" transform="translate(0.5,0.5)" /><rect x="1130" y="233.0" width="1" height="45.0" fill="#fff"/><rect x="1128" y="243.0" width="5" height="34.0" fill="#fff"/><rect x="1138" y="275.0" width="1" height="2.0" fill="#00ff00"/><rect x="1136" y="275.0" width="4" height="2.0" fill="#000" stroke="#00ff00" stroke-width="1" transform="translate(0.5,0.5)" /><rect x="1146" y="272.0" width="1" height="9.0" fill="#fff"/><rect x="1144" y="276.0" width="5" height="5.0" fill="#fff"/><rect x="1154" y="261.0" width="1" height="34.0" fill="#00ff00"/><rect x="1152" y="272.0" width="4" height="8.0" fill="#000" stroke="#00ff00" stroke-width="1" transform="translate(0.5,0.5)" /><rect x="1162" y="252.0" width="1" height="41.0" fill="#fff"/><rect x="1160" y="272.0" width="5" height="18.0" fill="#fff"/><rect x="1170" y="271.0" width="1" height="27.0" fill="#fff"/><rect x="1168" y="290.0" width="5" height="4.0" fill="#fff"/><rect x="1178" y="293.0" width="1" height="27.0" fill="#fff"/><rect x="1176" y="294.0" width="5" height="20.0" fill="#fff"/><rect x="1186" y="289.0" width="1" height="28.0" fill="#00ff00"/><rect x="1184" y="307.0" width="4" height="7.0" fill="#000" stroke="#00ff00" stroke-width="1" transform="translate(0.5,0.5)" /><rect x="1194" y="302.0" width="1" height="8.0" fill="#00ff00"/><rect x="1192" y="307.0" width="4" height="1.0" fill="#000" stroke="#00ff00" stroke-width="1" transform="translate(0.5,0.5)" /><rect x="1202" y="298.0" width="1" height="22.0" fill="#fff"/><rect x="1200" y="306.0" width="5" height="13.0" fill="#fff"/><rect x="1210" y="308.0" width="1" height="12.0" fill="#00ff00"/><rect x="1208" y="312.0" width="4" height="4.0" fill="#000" stroke="#00ff00" stroke-width="1" transform="translate(0.5,0.5)" /><rect x="1218" y="298.0" width="1" height="39.0" fill="#fff"/><rect x="1216" y="312.0" width="5" height="22.0" fill="#fff"/><rect x="1226" y="319.0" width="1" height="27.0" fill="#00ff00"/><rect x="1224" y="321.0" width="4" height="16.0" fill="#000" stroke="#00ff00" stroke-width="1" transform="translate(0.5,0.5)" /><rect x="1234" y="319.0" width="1" height="22.0" fill="#fff"/><rect x="1232" y="320.0" width="5" height="7.0" fill="#fff"/><rect x="1242" y="281.0" width="1" height="48.0" fill="#00ff00"/><rect x="1240" y="295.0" width="4" height="31.0" fill="#000" stroke="#00ff00" stroke-width="1" transform="translate(0.5,0.5)" /><rect x="1250" y="293.0" width="1" height="5.0" fill="#00ff00"/><rect x="1248" y="293.0" width="4" height="3.0" fill="#000" stroke="#00ff00" stroke-width="1" transform="translate(0.5,0.5)" /><rect x="1258" y="290.0" width="1" height="18.0" fill="#00ff00"/><rect x="1256" y="301.0" width="4" height="3.0" fill="#000" stroke="#00ff00" stroke-width="1" transform="translate(0.5,0.5)" /><rect x="1266" y="273.0" width="1" height="29.0" fill="#00ff00"/><rect x="1264" y="278.0" width="4" height="23.0" fill="#000" stroke="#00ff00" stroke-width="1" transform="translate(0.5,0.5)" /><rect x="1274" y="267.0" width="1" height="70.0" fill="#fff"/><rect x="1272" y="278.0" width="5" height="58.0" fill="#fff"/><rect x="1282" y="323.0" width="1" height="21.0" fill="#00ff00"/><rect x="1280" y="328.0" width="4" height="6.0" fill="#000" stroke="#00ff00" stroke-width="1" transform="translate(0.5,0.5)" /><rect x="1290" y="320.0" width="1" height="29.0" fill="#fff"/><rect x="1288" y="328.0" width="5" height="18.0" fill="#fff"/><rect x="1298" y="337.0" width="1" height="20.0" fill="#00ff00"/><rect x="1296" y="339.0" width="4" height="5.0" fill="#000" stroke="#00ff00" stroke-width="1" transform="translate(0.5,0.5)" /><rect x="1306" y="338.0" width="1" height="1.0" fill="#00ff00"/><rect x="1304" y="338.0" width="4" height="1.0" fill="#000" stroke="#00ff00" stroke-width="1" transform="translate(0.5,0.5)" /><rect x="1314" y="338.0" width="1" height="4.0" fill="#fff"/><rect x="1312" y="338.0" width="5" height="5.0" fill="#fff"/><rect x="1322" y="334.0" width="1" height="23.0" fill="#fff"/><rect x="1320" y="336.0" width="5" height="2.0" fill="#fff"/><rect x="1330" y="329.0" width="1" height="26.0" fill="#fff"/><rect x="1328" y="336.0" width="5" height="15.0" fill="#fff"/><rect x="1338" y="344.0" width="1" height="31.0" fill="#fff"/><rect x="1336" y="356.0" width="5" height="15.0" fill="#fff"/><rect x="1346" y="357.0" width="1" height="34.0" fill="#00ff00"/><rect x="1344" y="366.0" width="4" height="5.0" fill="#000" stroke="#00ff00" stroke-width="1" transform="translate(0.5,0.5)" /><rect x="1354" y="362.0" width="1" height="35.0" fill="#fff"/><rect x="1352" y="366.0" width="5" height="24.0" fill="#fff"/><rect x="1362" y="408.0" width="1" height="6.0" fill="#fff"/><rect x="1360" y="409.0" width="5" height="5.0" fill="#fff"/><rect x="1370" y="405.0" width="1" height="38.0" fill="#fff"/><rect x="1368" y="412.0" width="5" height="23.0" fill="#fff"/><rect x="1378" y="413.0" width="1" height="25.0" fill="#00ff00"/><rect x="1376" y="429.0" width="4" height="5.0" fill="#000" stroke="#00ff00" stroke-width="1" transform="translate(0.5,0.5)" /><line x1="707" y1="429.5" x2="1389" y2="429.5" stroke="#f06060" stroke-width="1"/><rect x="714" y="513" width="1" height="4.600000000000023" fill="#00e0ff"/><rect x="722" y="513" width="1" height="4" fill="#00e0ff"/><rect x="730" y="513" width="1" height="1" fill="#00e0ff"/><rect x="738" y="512.5" width="1" height="1" fill="#00e0ff"/><rect x="746" y="508.4" width="1" height="4.600000000000023" fill="#00e0ff"/><rect x="754" y="506.8" width="1" height="6.199999999999989" fill="#00e0ff"/><rect x="762" y="512.5" width="1" height="1" fill="#00e0ff"/><rect x="770" y="513" width="1" height="1" fill="#00e0ff"/><rect x="778" y="513" width="1" height="1" fill="#00e0ff"/><rect x="786" y="513" width="1" height="3" fill="#00e0ff"/><rect x="794" y="513" width="1" height="1" fill="#00e0ff"/><rect x="802" y="508" width="1" height="5" fill="#00e0ff"/><rect x="810" y="504.7" width="1" height="8.300000000000011" fill="#00e0ff"/><rect x="818" y="504.7" width="1" height="8.300000000000011" fill="#00e0ff"/><rect x="826" y="497.6" width="1" height="15.399999999999977" fill="#00e0ff"/><rect x="834" y="495.5" width="1" height="17.5" fill="#00e0ff"/><rect x="842" y="490.9" width="1" height="22.100000000000023" fill="#00e0ff"/><rect x="850" y="490" width="1" height="23" fill="#00e0ff"/><rect x="858" y="490" width="1" height="23" fill="#00e0ff"/><rect x="866" y="490" width="1" height="23" fill="#00e0ff"/><rect x="874" y="490.9" width="1" height="22.100000000000023" fill="#00e0ff"/><rect x="882" y="493" width="1" height="20" fill="#00e0ff"/><rect x="890" y="492.4" width="1" height="20.600000000000023" fill="#00e0ff"/><rect x="898" y="493.6" width="1" height="19.399999999999977" fill="#00e0ff"/><rect x="906" y="494.5" width="1" height="18.5" fill="#00e0ff"/><rect x="914" y="496" width="1" height="17" fill="#00e0ff"/><rect x="922" y="497.6" width="1" height="15.399999999999977" fill="#00e0ff"/><rect x="930" y="499.2" width="1" height="13.800000000000011" fill="#00e0ff"/><rect x="938" y="505.9" width="1" height="7.100000000000023" fill="#00e0ff"/><rect x="946" y="509.3" width="1" height="3.6999999999999886" fill="#00e0ff"/><rect x="954" y="509.9" width="1" height="3.1000000000000227" fill="#00e0ff"/><rect x="962" y="513" width="1" height="1" fill="#00e0ff"/><rect x="970" y="513" width="1" height="4.600000000000023" fill="#00e0ff"/><rect x="978" y="513" width="1" height="7" fill="#00e0ff"/><rect x="986" y="513" width="1" height="3" fill="#00e0ff"/><rect x="994" y="512.5" width="1" height="1" fill="#00e0ff"/><rect x="1002" y="508.4" width="1" height="4.600000000000023" fill="#00e0ff"/><rect x="1010" y="502.2" width="1" height="10.800000000000011" fill="#00e0ff"/><rect x="1018" y="497.6" width="1" height="15.399999999999977" fill="#00e0ff"/><rect x="1026" y="496" width="1" height="17" fill="#00e0ff"/><rect x="1034" y="496.7" width="1" height="16.30000000000001" fill="#00e0ff"/><rect x="1042" y="504.7" width="1" height="8.300000000000011" fill="#00e0ff"/><rect x="1050" y="509.9" width="1" height="3.1000000000000227" fill="#00e0ff"/><rect x="1058" y="513" width="1" height="12.299999999999955" fill="#00e0ff"/><rect x="1066" y="513" width="1" height="10.700000000000045" fill="#00e0ff"/><rect x="1074" y="513" width="1" height="17.5" fill="#00e0ff"/><rect x="1082" y="513" width="1" height="20.5" fill="#00e0ff"/><rect x="1090" y="513" width="1" height="21.5" fill="#00e0ff"/><rect x="1098" y="513" width="1" height="20" fill="#00e0ff"/><rect x="1106" y="513" width="1" height="17.5" fill="#00e0ff"/><rect x="1114" y="513" width="1" height="15.299999999999955" fill="#00e0ff"/><rect x="1122" y="513" width="1" height="10.700000000000045" fill="#00e0ff"/><rect x="1130" y="513" width="1" height="9.200000000000045" fill="#00e0ff"/><rect x="1138" y="513" width="1" height="9.200000000000045" fill="#00e0ff"/><rect x="1146" y="513" width="1" height="7" fill="#00e0ff"/><rect x="1154" y="513" width="1" height="7" fill="#00e0ff"/><rect x="1162" y="513" width="1" height="8.299999999999955" fill="#00e0ff"/><rect x="1170" y="513" width="1" height="7" fill="#00e0ff"/><rect x="1178" y="513" width="1" height="8.299999999999955" fill="#00e0ff"/><rect x="1186" y="513" width="1" height="11.299999999999955" fill="#00e0ff"/><rect x="1194" y="513" width="1" height="11.299999999999955" fill="#00e0ff"/><rect x="1202" y="513" width="1" height="10" fill="#00e0ff"/><rect x="1210" y="513" width="1" height="9.200000000000045" fill="#00e0ff"/><rect x="1218" y="513" width="1" height="11.299999999999955" fill="#00e0ff"/><rect x="1226" y="513" width="1" height="10" fill="#00e0ff"/><rect x="1234" y="513" width="1" height="7.600000000000023" fill="#00e0ff"/><rect x="1242" y="513" width="1" height="2.5" fill="#00e0ff"/><rect x="1250" y="509.3" width="1" height="3.6999999999999886" fill="#00e0ff"/><rect x="1258" y="507.7" width="1" height="5.300000000000011" fill="#00e0ff"/><rect x="1266" y="502.8" width="1" height="10.199999999999989" fill="#00e0ff"/><rect x="1274" y="509" width="1" height="4" fill="#00e0ff"/><rect x="1282" y="512.5" width="1" height="1" fill="#00e0ff"/><rect x="1290" y="513" width="1" height="2.3999999999999773" fill="#00e0ff"/><rect x="1298" y="513" width="1" height="3" fill="#00e0ff"/><rect x="1306" y="513" width="1" height="3" fill="#00e0ff"/><rect x="1314" y="513" width="1" height="4" fill="#00e0ff"/><rect x="1322" y="513" width="1" height="2" fill="#00e0ff"/><rect x="1330" y="513" width="1" height="4" fill="#00e0ff"/><rect x="1338" y="513" width="1" height="6" fill="#00e0ff"/><rect x="1346" y="513" width="1" height="10" fill="#00e0ff"/><rect x="1354" y="513" width="1" height="10.700000000000045" fill="#00e0ff"/><rect x="1362" y="513" width="1" height="15.299999999999955" fill="#00e0ff"/><rect x="1370" y="513" width="1" height="20" fill="#00e0ff"/><rect x="1378" y="513" width="1" height="21.5" fill="#00e0ff"/><polyline points="706.8,566.0 721.5,569.8 736.9,564.3 753.8,557.5 770.7,563.7 789.1,565.2 804.5,559.7 819.8,551.4 835.2,533.0 850.5,517.6 865.9,506.8 884.3,497.6 899.7,488.4 915.0,484.4 930.4,480.7 939.6,485.3 955.0,488.4 964.2,493.0 979.6,500.7 994.9,497.6 1007.2,490.0 1019.5,476.1 1033.3,465.4 1050.2,473.0 1062.5,490.0 1075.4,502.2 1096.9,524.6 1115.3,525.2 1123.0,522.2 1152.1,529.9 1182.8,543.7 1213.6,554.4 1232.0,559.0 1250.4,546.7 1266.4,537.5 1287.3,548.3 1314.9,554.4 1327.2,553.8 1348.7,563.6 1367.1,582.0 1378.5,594.3" fill="none" stroke="#80ff80" stroke-width="1"/><polyline points="706.8,563.0 730.7,565.2 755.3,562.1 786.0,563.7 801.4,563.0 822.9,556.0 844.4,542.2 869.0,526.8 899.7,506.8 930.4,494.5 955.0,490.0 976.5,493.0 991.9,495.5 1007.2,493.0 1034.9,480.7 1050.2,477.6 1068.7,482.3 1090.7,499.1 1121.4,513.0 1152.1,523.7 1182.8,533.5 1213.6,542.1 1238.1,549.8 1259.6,546.7 1281.1,545.2 1305.7,547.7 1336.4,551.4 1351.8,556.9 1367.1,563.6 1378.5,572.8" fill="none" stroke="#ff0000" stroke-width="1.1"/><polyline points="706.8,688.0 713.8,701.9 722.1,706.5 730.7,685.0 743.0,680.4 755.3,685.0 763.0,709.6 773.7,700.4 787.6,701.9 795.2,685.0 810.6,683.5 819.8,672.7 826.6,643.5 834.3,646.6 842.9,633.7 850.5,638.0 865.9,637.4 875.1,627.6 880.0,633.4 882.3,634.5 891.0,618.4 898.4,620.1 906.5,621.3 913.4,619.6 922.6,630.5 930.7,612.7 938.7,661.0 954.3,644.3 962.3,666.2 977.9,668.5 986.5,641.5 994.6,649.5 1002.0,619.6 1007.8,613.8 1017.0,609.8 1026.2,609.2 1034.3,613.2 1042.3,649.5 1050.4,649.5 1057.9,676.6 1064.2,681.8 1074.6,693.3 1090.7,692.6 1098.4,691.1 1106.1,670.5 1114.7,676.7 1123.0,651.2 1130.6,677.3 1146.0,679.7 1153.7,674.2 1161.3,686.5 1170.6,691.1 1178.2,704.9 1185.9,695.7 1195.1,695.7 1202.8,704.9 1210.5,698.2 1218.2,712.6 1225.8,697.2 1235.1,701.2 1242.7,667.4 1250.4,664.1 1258.1,671.7 1266.4,651.2 1274.4,692.6 1282.7,686.5 1290.3,695.7 1298.0,691.1 1314.9,692.6 1322.6,688.0 1330.3,695.7 1337.9,710.4 1345.6,704.9 1362.5,729.5 1370.2,738.7 1378.5,732.0" fill="none" stroke="#80ff80" stroke-width="1"/><polyline points="706.8,695.7 723.0,703.5 746.1,686.0 761.4,694.2 786.0,698.8 801.4,689.6 822.9,668.1 841.3,646.6 859.8,640.5 880.0,635.0 888.6,630.5 897.3,625.9 904.2,623.6 913.4,622.5 922.6,624.8 929.5,621.3 934.1,628.8 939.9,638.0 947.9,643.2 953.7,643.2 960.6,650.7 972.1,658.7 977.9,662.2 983.6,655.3 994.0,651.2 1000.9,640.3 1010.1,628.8 1020.5,619.0 1028.5,615.0 1034.3,615.5 1041.2,626.5 1050.4,636.8 1056.2,649.5 1064.2,664.5 1075.7,678.3 1080.0,681.0 1090.0,687.0 1098.0,689.5 1105.0,683.6 1113.6,679.3 1117.5,675.5 1123.3,669.2 1130.4,672.0 1138.6,674.5 1146.3,677.4 1154.5,676.4 1160.0,678.4 1164.4,683.4 1179.8,692.6 1201.3,695.7 1222.8,700.3 1235.1,700.3 1250.4,680.3 1266.4,665.0 1281.1,677.3 1296.5,686.5 1324.1,691.1 1345.6,701.8 1367.1,721.8 1378.5,728.0" fill="none" stroke="#ff0000" stroke-width="1" stroke-dasharray="4,3"/><text x="710" y="183" fill="#fff" font-size="10" text-anchor="start" font-weight="normal" textLength="211" lengthAdjust="spacingAndGlyphs">AUD/USD,D1&#160;&#160;0.64539&#160;&#160;0.65128&#160;&#160;0.64440&#160;&#160;0.64724</text><text x="710" y="470" fill="#9fe89f" font-size="10" text-anchor="start" font-weight="normal" textLength="110" lengthAdjust="spacingAndGlyphs">MACD (26,12,9)&#160;&#160;-0.00894</text><text x="710" y="615" fill="#9fe89f" font-size="10" text-anchor="start" font-weight="normal" textLength="175" lengthAdjust="spacingAndGlyphs">RELATIVE STRENGTH INDEX&#160;&#160;26.69055</text><rect x="1389" y="202" width="6" height="1" fill="#fff"/><text x="1400" y="206" fill="#fff" font-size="10" text-anchor="start" font-weight="normal" textLength="33.0" lengthAdjust="spacingAndGlyphs">0.70946</text><rect x="1389" y="234" width="6" height="1" fill="#fff"/><text x="1400" y="238" fill="#fff" font-size="10" text-anchor="start" font-weight="normal" textLength="33.0" lengthAdjust="spacingAndGlyphs">0.70068</text><rect x="1389" y="266" width="6" height="1" fill="#fff"/><text x="1400" y="270" fill="#fff" font-size="10" text-anchor="start" font-weight="normal" textLength="33.0" lengthAdjust="spacingAndGlyphs">0.69189</text><rect x="1389" y="298" width="6" height="1" fill="#fff"/><text x="1400" y="302" fill="#fff" font-size="10" text-anchor="start" font-weight="normal" textLength="33.0" lengthAdjust="spacingAndGlyphs">0.68311</text><rect x="1389" y="330" width="6" height="1" fill="#fff"/><text x="1400" y="334" fill="#fff" font-size="10" text-anchor="start" font-weight="normal" textLength="33.0" lengthAdjust="spacingAndGlyphs">0.67432</text><rect x="1389" y="362" width="6" height="1" fill="#fff"/><text x="1400" y="366" fill="#fff" font-size="10" text-anchor="start" font-weight="normal" textLength="33.0" lengthAdjust="spacingAndGlyphs">0.66554</text><rect x="1389" y="394" width="6" height="1" fill="#fff"/><text x="1400" y="398" fill="#fff" font-size="10" text-anchor="start" font-weight="normal" textLength="33.0" lengthAdjust="spacingAndGlyphs">0.65675</text><text x="1400" y="468" fill="#fff" font-size="10" text-anchor="start" font-weight="normal" textLength="33.0" lengthAdjust="spacingAndGlyphs">0.00588</text><rect x="1389" y="513" width="6" height="1" fill="#fff"/><text x="1400" y="517" fill="#fff" font-size="10" text-anchor="start" font-weight="normal" textLength="33.0" lengthAdjust="spacingAndGlyphs">0.00000</text><text x="1399" y="598" fill="#fff" font-size="10" text-anchor="start" font-weight="normal" textLength="37.8" lengthAdjust="spacingAndGlyphs">-0.00968</text><rect x="1389" y="661" width="6" height="1" fill="#fff"/><text x="1398" y="665" fill="#fff" font-size="10" text-anchor="start" font-weight="normal" textLength="37.8" lengthAdjust="spacingAndGlyphs">50.00000</text><rect x="1389" y="721" width="6" height="1" fill="#fff"/><text x="1398" y="725" fill="#fff" font-size="10" text-anchor="start" font-weight="normal" textLength="37.8" lengthAdjust="spacingAndGlyphs">30.00000</text><text x="1398" y="611" fill="#fff" font-size="10" text-anchor="start" font-weight="normal" textLength="38" lengthAdjust="spacingAndGlyphs">69.49894</text><text x="1398" y="741" fill="#fff" font-size="10" text-anchor="start" font-weight="normal" textLength="38" lengthAdjust="spacingAndGlyphs">21.81956</text><rect x="1389" y="218" width="3" height="1" fill="#fff"/><rect x="1389" y="250" width="3" height="1" fill="#fff"/><rect x="1389" y="282" width="3" height="1" fill="#fff"/><rect x="1389" y="314" width="3" height="1" fill="#fff"/><rect x="1389" y="346" width="3" height="1" fill="#fff"/><rect x="1389" y="378" width="3" height="1" fill="#fff"/><rect x="1389" y="410" width="3" height="1" fill="#fff"/><rect x="1389" y="442" width="3" height="1" fill="#fff"/><rect x="1389" y="422" width="53" height="12" fill="#fd6464"/><text x="1399" y="432.5" fill="#fff" font-size="10" text-anchor="start" font-weight="normal" textLength="33" lengthAdjust="spacingAndGlyphs">0.64724</text><rect x="706" y="747" width="1" height="3" fill="#fff"/><text x="706" y="758" fill="#fff" font-size="10" text-anchor="start" font-weight="normal" textLength="46" lengthAdjust="spacingAndGlyphs">04 Jul 2022</text><rect x="778" y="747" width="1" height="3" fill="#fff"/><text x="778" y="758" fill="#fff" font-size="10" text-anchor="start" font-weight="normal" textLength="46" lengthAdjust="spacingAndGlyphs">13 Jul 2022</text><rect x="858" y="747" width="1" height="3" fill="#fff"/><text x="858" y="758" fill="#fff" font-size="10" text-anchor="start" font-weight="normal" textLength="46" lengthAdjust="spacingAndGlyphs">23 Jul 2022</text><rect x="938" y="747" width="1" height="3" fill="#fff"/><text x="938" y="758" fill="#fff" font-size="10" text-anchor="start" font-weight="normal" textLength="52" lengthAdjust="spacingAndGlyphs">02 Aug 2022</text><rect x="1018" y="747" width="1" height="3" fill="#fff"/><text x="1018" y="758" fill="#fff" font-size="10" text-anchor="start" font-weight="normal" textLength="52" lengthAdjust="spacingAndGlyphs">12 Aug 2022</text><rect x="1098" y="747" width="1" height="3" fill="#fff"/><text x="1098" y="758" fill="#fff" font-size="10" text-anchor="start" font-weight="normal" textLength="52" lengthAdjust="spacingAndGlyphs">22 Aug 2022</text><rect x="1178" y="747" width="1" height="3" fill="#fff"/><text x="1178" y="758" fill="#fff" font-size="10" text-anchor="start" font-weight="normal" textLength="52" lengthAdjust="spacingAndGlyphs">01 Sep 2022</text><rect x="1258" y="747" width="1" height="3" fill="#fff"/><text x="1258" y="758" fill="#fff" font-size="10" text-anchor="start" font-weight="normal" textLength="52" lengthAdjust="spacingAndGlyphs">11 Sep 2022</text><rect x="1338" y="747" width="1" height="3" fill="#fff"/><text x="1338" y="758" fill="#fff" font-size="10" text-anchor="start" font-weight="normal" textLength="52" lengthAdjust="spacingAndGlyphs">21 Sep 2022</text></svg><div class="a" style="left:3px;top:194px;width:453px;height:27px;background:#000"></div><div class="a" style="left:3px;top:194px;width:16px;height:16px;border:1px solid #8aa0d0;border-radius:3px;background:linear-gradient(#fafcff,#d6e0f4)"></div><div class="a" style="left:6px;top:201px;width:10px;height:2px;background:#2a3a8a"></div><div class="a" style="left:21px;top:194px;width:27px;height:27px;background:#ffe0e2"></div><svg class="a" style="left:22px;top:195px;" width="26" height="26" viewBox="0 0 26 26"><defs><linearGradient id="dg" x1="0" x2="1"><stop offset="0" stop-color="#d8707e"/><stop offset=".55" stop-color="#f4b6c2"/><stop offset="1" stop-color="#e58a9a"/></linearGradient></defs><path d="M9.5 4.5 H17 V11.5 H21 L13.25 20 L5 11.5 H9.5 Z" fill="url(#dg)" stroke="#9a1010" stroke-width="1.1"/></svg><div class="a" style="left:50px;top:194px;width:113px;height:27px;background:#fa6464;color:#fff;font-weight:bold;font-size:14.5px;line-height:27px;text-align:center;white-space:pre">0.96280  (S)</div><div class="a" style="left:165px;top:194px;width:27px;height:27px;background:#c6f6c6"></div><svg class="a" style="left:166px;top:195px;" width="26" height="26" viewBox="0 0 26 26"><defs><linearGradient id="ug" x1="0" x2="1"><stop offset="0" stop-color="#9ec0e4"/><stop offset=".5" stop-color="#5a80b0"/><stop offset="1" stop-color="#2e4a78"/></linearGradient></defs><path d="M11.4 4 L20 12.5 H15.8 V20 H7 V12.5 H2.8 Z" fill="url(#ug)" stroke="#0a1a3a" stroke-width="1.1"/></svg><div class="a" style="left:194px;top:194px;width:88px;height:27px;background:#fff;border:1px solid #b8c8e0"></div><div class="a" style="left:264px;top:195px;width:17px;height:25px;background:#e4ecf8"></div><svg class="a" style="left:268px;top:205px;" width="9" height="5" viewBox="0 0 9 5"><path d="M1 1h7l-3.5 3.5z" fill="#4a6a9a"/></svg><div class="a" style="left:197px;top:199px;font-size:16px;line-height:18px;color:#000;font-weight:normal;white-space:nowrap;">0.100</div><div class="a" style="left:284px;top:194px;width:27px;height:27px;background:#ffe0e2"></div><svg class="a" style="left:285px;top:195px;" width="26" height="26" viewBox="0 0 26 26"><defs><linearGradient id="dg" x1="0" x2="1"><stop offset="0" stop-color="#d8707e"/><stop offset=".55" stop-color="#f4b6c2"/><stop offset="1" stop-color="#e58a9a"/></linearGradient></defs><path d="M9.5 4.5 H17 V11.5 H21 L13.25 20 L5 11.5 H9.5 Z" fill="url(#dg)" stroke="#9a1010" stroke-width="1.1"/></svg><div class="a" style="left:313px;top:194px;width:113px;height:27px;background:#fa6464;color:#fff;font-weight:bold;font-size:14.5px;line-height:27px;text-align:center;white-space:pre">0.96287  (B)</div><div class="a" style="left:428px;top:194px;width:27px;height:27px;background:#c6f6c6"></div><svg class="a" style="left:429px;top:195px;" width="26" height="26" viewBox="0 0 26 26"><defs><linearGradient id="ug" x1="0" x2="1"><stop offset="0" stop-color="#9ec0e4"/><stop offset=".5" stop-color="#5a80b0"/><stop offset="1" stop-color="#2e4a78"/></linearGradient></defs><path d="M11.4 4 L20 12.5 H15.8 V20 H7 V12.5 H2.8 Z" fill="url(#ug)" stroke="#0a1a3a" stroke-width="1.1"/></svg><div class="a" style="left:709px;top:194px;width:453px;height:27px;background:#000"></div><div class="a" style="left:709px;top:194px;width:16px;height:16px;border:1px solid #8aa0d0;border-radius:3px;background:linear-gradient(#fafcff,#d6e0f4)"></div><div class="a" style="left:712px;top:201px;width:10px;height:2px;background:#2a3a8a"></div><div class="a" style="left:727px;top:194px;width:27px;height:27px;background:#ffe0e2"></div><svg class="a" style="left:728px;top:195px;" width="26" height="26" viewBox="0 0 26 26"><defs><linearGradient id="dg" x1="0" x2="1"><stop offset="0" stop-color="#d8707e"/><stop offset=".55" stop-color="#f4b6c2"/><stop offset="1" stop-color="#e58a9a"/></linearGradient></defs><path d="M9.5 4.5 H17 V11.5 H21 L13.25 20 L5 11.5 H9.5 Z" fill="url(#dg)" stroke="#9a1010" stroke-width="1.1"/></svg><div class="a" style="left:756px;top:194px;width:113px;height:27px;background:#fa6464;color:#fff;font-weight:bold;font-size:14.5px;line-height:27px;text-align:center;white-space:pre">0.64724  (S)</div><div class="a" style="left:871px;top:194px;width:27px;height:27px;background:#c6f6c6"></div><svg class="a" style="left:872px;top:195px;" width="26" height="26" viewBox="0 0 26 26"><defs><linearGradient id="ug" x1="0" x2="1"><stop offset="0" stop-color="#9ec0e4"/><stop offset=".5" stop-color="#5a80b0"/><stop offset="1" stop-color="#2e4a78"/></linearGradient></defs><path d="M11.4 4 L20 12.5 H15.8 V20 H7 V12.5 H2.8 Z" fill="url(#ug)" stroke="#0a1a3a" stroke-width="1.1"/></svg><div class="a" style="left:900px;top:194px;width:88px;height:27px;background:#fff;border:1px solid #b8c8e0"></div><div class="a" style="left:970px;top:195px;width:17px;height:25px;background:#e4ecf8"></div><svg class="a" style="left:974px;top:205px;" width="9" height="5" viewBox="0 0 9 5"><path d="M1 1h7l-3.5 3.5z" fill="#4a6a9a"/></svg><div class="a" style="left:903px;top:199px;font-size:16px;line-height:18px;color:#000;font-weight:normal;white-space:nowrap;">0.100</div><div class="a" style="left:990px;top:194px;width:27px;height:27px;background:#ffe0e2"></div><svg class="a" style="left:991px;top:195px;" width="26" height="26" viewBox="0 0 26 26"><defs><linearGradient id="dg" x1="0" x2="1"><stop offset="0" stop-color="#d8707e"/><stop offset=".55" stop-color="#f4b6c2"/><stop offset="1" stop-color="#e58a9a"/></linearGradient></defs><path d="M9.5 4.5 H17 V11.5 H21 L13.25 20 L5 11.5 H9.5 Z" fill="url(#dg)" stroke="#9a1010" stroke-width="1.1"/></svg><div class="a" style="left:1019px;top:194px;width:113px;height:27px;background:#2090ff;color:#fff;font-weight:bold;font-size:14.5px;line-height:27px;text-align:center;white-space:pre">0.64733  (B)</div><div class="a" style="left:1134px;top:194px;width:27px;height:27px;background:#c6f6c6"></div><svg class="a" style="left:1135px;top:195px;" width="26" height="26" viewBox="0 0 26 26"><defs><linearGradient id="ug" x1="0" x2="1"><stop offset="0" stop-color="#9ec0e4"/><stop offset=".5" stop-color="#5a80b0"/><stop offset="1" stop-color="#2e4a78"/></linearGradient></defs><path d="M11.4 4 L20 12.5 H15.8 V20 H7 V12.5 H2.8 Z" fill="url(#ug)" stroke="#0a1a3a" stroke-width="1.1"/></svg><div class="a" style="left:5px;top:257px;font-size:10px;font-weight:bold;color:#ff1010;white-space:nowrap;text-shadow:1px 1px 0 #3030ff;line-height:12px;letter-spacing:-.45px">Sell At 1.00388(4854399)</div><svg class="a" style="left:0px;top:0px;" width="702" height="300" viewBox="0 0 702 300"><path d="M91 223 H101 L96 228Z" fill="#00e5ff"/><rect x="95" y="223" width="2" height="3" fill="#00e5ff"/><path d="M104 240 L109 245.5 H106 V249 H102 V245.5 H99Z" fill="#00e5ff"/><path d="M55 267 L60 272.5 H57 V275 H53 V272.5 H50Z" fill="#00e5ff"/><rect x="31" y="260" width="3" height="9" fill="#00e5ff"/><path d="M368 269 L373 263.5 H370 V260 H366 V263.5 H363Z" fill="#00e5ff"/><path d="M376 271 L381 276.5 H378 V280 H374 V276.5 H371Z" fill="#00e5ff"/></svg><svg class="a" style="left:633px;top:174px;" width="16" height="16" viewBox="0 0 16 16"><path d="M1 0H10L14 4V15H1Z" fill="#fff" stroke="#999"/><path d="M7 7L4 10L7 13M10 7L13 10L10 13" fill="none" stroke="#e02020" stroke-width="1.5"/></svg><div class="a" style="left:1446px;top:148px;width:474px;height:23px;background:linear-gradient(#e6f1fd,#cfe2fb 40%,#b5d4fb)"></div><div class="a" style="left:1452px;top:153px;font-size:12px;line-height:14px;color:#15428b;font-weight:bold;white-space:nowrap;">Market Watch</div><svg class="a" style="left:1884px;top:153px;" width="30" height="14" viewBox="0 0 30 14"><rect x="5.5" y="0.5" width="4" height="7" fill="none" stroke="#0c2a66"/><rect x="8.4" y="0.5" width="1.5" height="7" fill="#0c2a66"/><rect x="3.5" y="7" width="8" height="1.6" fill="#0c2a66"/><rect x="7" y="8" width="1.3" height="3.5" fill="#0c2a66"/><path d="M20 1.5 L28 9 M28 1.5 L20 9" stroke="#0c2a66" stroke-width="1.5"/></svg><div class="a" style="left:1446px;top:171px;width:474px;height:348px;background:#fff;overflow:hidden"><div class="a" style="left:0;top:0;width:473px;height:21px;border:1px solid #a5acb5"></div><div class="a" style="left:3px;top:3px;font-size:12px;line-height:14px;color:#6d6d6d;font-weight:normal;white-space:nowrap;transform:scaleX(0.86);transform-origin:0 0;">Search Symbols</div><div class="a" style="left:128px;top:22px;width:1px;height:24px;background:#e3e3e3"></div><div class="a" style="left:209px;top:22px;width:1px;height:24px;background:#e3e3e3"></div><div class="a" style="left:290px;top:22px;width:1px;height:24px;background:#e3e3e3"></div><div class="a" style="left:373px;top:22px;width:1px;height:24px;background:#e3e3e3"></div><div class="a" style="left:456px;top:22px;width:1px;height:24px;background:#e3e3e3"></div><div class="a" style="left:3px;top:27px;font-size:12px;line-height:14px;color:#000;font-weight:normal;white-space:nowrap;">Symbol</div><div class="a" style="left:131px;top:27px;font-size:12px;line-height:14px;color:#000;font-weight:normal;white-space:nowrap;">Bid</div><div class="a" style="left:213px;top:27px;font-size:12px;line-height:14px;color:#000;font-weight:normal;white-space:nowrap;">Ask</div><div class="a" style="left:294px;top:27px;font-size:12px;line-height:14px;color:#000;font-weight:normal;white-space:nowrap;">Time</div><div class="a" style="left:377px;top:27px;font-size:12px;line-height:14px;color:#000;font-weight:normal;white-space:nowrap;">Spread</div><div class="a" style="left:20px;top:47px;width:0;height:310px;border-left:1px dotted #888"></div><div class="a" style="left:21px;top:56px;width:8px;height:0;border-top:1px dotted #888"></div><svg class="a" style="left:45px;top:50px;" width="14" height="12" viewBox="0 0 14 12"><path d="M7 0 L13.5 6.5 H10 V11 H4 V6.5 H0.5Z" fill="#22c022" stroke="#109010" stroke-width=".6"/><path d="M7 1.5 L11 5.5 H3Z" fill="#7af07a"/></svg><div class="a" style="left:61px;top:50px;font-size:12px;line-height:14px;color:#000;font-weight:normal;white-space:nowrap;">AUD/CAD</div><div class="a" style="left:131px;top:50px;font-size:12px;line-height:14px;color:#1b9e1b;font-weight:normal;white-space:nowrap;">0.88734</div><div class="a" style="left:212px;top:50px;font-size:12px;line-height:14px;color:#ee2f45;font-weight:normal;white-space:nowrap;">0.88741</div><div class="a" style="left:294px;top:50px;font-size:12px;line-height:14px;color:#000;font-weight:normal;white-space:nowrap;">15:36:26</div><div class="a" style="left:377px;top:50px;font-size:12px;line-height:14px;color:#000;font-weight:normal;white-space:nowrap;">7</div><div class="a" style="left:21px;top:77px;width:8px;height:0;border-top:1px dotted #888"></div><svg class="a" style="left:45px;top:71px;" width="14" height="12" viewBox="0 0 14 12"><path d="M7 0 L13.5 6.5 H10 V11 H4 V6.5 H0.5Z" fill="#22c022" stroke="#109010" stroke-width=".6"/><path d="M7 1.5 L11 5.5 H3Z" fill="#7af07a"/></svg><div class="a" style="left:61px;top:71px;font-size:12px;line-height:14px;color:#000;font-weight:normal;white-space:nowrap;">EUR/CHF</div><div class="a" style="left:131px;top:71px;font-size:12px;line-height:14px;color:#1b9e1b;font-weight:normal;white-space:nowrap;">0.95070</div><div class="a" style="left:212px;top:71px;font-size:12px;line-height:14px;color:#ee2f45;font-weight:normal;white-space:nowrap;">0.95090</div><div class="a" style="left:294px;top:71px;font-size:12px;line-height:14px;color:#000;font-weight:normal;white-space:nowrap;">15:36:26</div><div class="a" style="left:377px;top:71px;font-size:12px;line-height:14px;color:#000;font-weight:normal;white-space:nowrap;">20</div><div class="a" style="left:21px;top:98px;width:8px;height:0;border-top:1px dotted #888"></div><svg class="a" style="left:45px;top:92px;" width="14" height="12" viewBox="0 0 14 12"><path d="M7 0 L13.5 6.5 H10 V11 H4 V6.5 H0.5Z" fill="#22c022" stroke="#109010" stroke-width=".6"/><path d="M7 1.5 L11 5.5 H3Z" fill="#7af07a"/></svg><div class="a" style="left:61px;top:92px;font-size:12px;line-height:14px;color:#000;font-weight:normal;white-space:nowrap;">EUR/JPY</div><div class="a" style="left:131px;top:92px;font-size:12px;line-height:14px;color:#1b9e1b;font-weight:normal;white-space:nowrap;">139.238</div><div class="a" style="left:212px;top:92px;font-size:12px;line-height:14px;color:#ee2f45;font-weight:normal;white-space:nowrap;">139.253</div><div class="a" style="left:294px;top:92px;font-size:12px;line-height:14px;color:#000;font-weight:normal;white-space:nowrap;">15:36:26</div><div class="a" style="left:377px;top:92px;font-size:12px;line-height:14px;color:#000;font-weight:normal;white-space:nowrap;">15</div><div class="a" style="left:21px;top:119px;width:8px;height:0;border-top:1px dotted #888"></div><svg class="a" style="left:45px;top:113px;" width="14" height="12" viewBox="0 0 14 12"><path d="M7 11 L13.5 4.5 H10 V0 H4 V4.5 H0.5Z" fill="#e77070" stroke="#c05050" stroke-width=".6"/></svg><div class="a" style="left:61px;top:113px;font-size:12px;line-height:14px;color:#000;font-weight:normal;white-space:nowrap;">GBP/CHF</div><div class="a" style="left:131px;top:113px;font-size:12px;line-height:14px;color:#ee2f45;font-weight:normal;white-space:nowrap;">1.06273</div><div class="a" style="left:212px;top:113px;font-size:12px;line-height:14px;color:#ee2f45;font-weight:normal;white-space:nowrap;">1.06293</div><div class="a" style="left:294px;top:113px;font-size:12px;line-height:14px;color:#000;font-weight:normal;white-space:nowrap;">15:36:26</div><div class="a" style="left:377px;top:113px;font-size:12px;line-height:14px;color:#000;font-weight:normal;white-space:nowrap;">20</div><div class="a" style="left:21px;top:140px;width:8px;height:0;border-top:1px dotted #888"></div><svg class="a" style="left:45px;top:134px;" width="14" height="12" viewBox="0 0 14 12"><path d="M7 0 L13.5 6.5 H10 V11 H4 V6.5 H0.5Z" fill="#22c022" stroke="#109010" stroke-width=".6"/><path d="M7 1.5 L11 5.5 H3Z" fill="#7af07a"/></svg><div class="a" style="left:61px;top:134px;font-size:12px;line-height:14px;color:#000;font-weight:normal;white-space:nowrap;">EUR/GBP</div><div class="a" style="left:131px;top:134px;font-size:12px;line-height:14px;color:#1b9e1b;font-weight:normal;white-space:nowrap;">0.89445</div><div class="a" style="left:212px;top:134px;font-size:12px;line-height:14px;color:#1b9e1b;font-weight:normal;white-space:nowrap;">0.89477</div><div class="a" style="left:294px;top:134px;font-size:12px;line-height:14px;color:#000;font-weight:normal;white-space:nowrap;">15:36:26</div><div class="a" style="left:377px;top:134px;font-size:12px;line-height:14px;color:#000;font-weight:normal;white-space:nowrap;">32</div><div class="a" style="left:21px;top:161px;width:8px;height:0;border-top:1px dotted #888"></div><svg class="a" style="left:45px;top:155px;" width="14" height="12" viewBox="0 0 14 12"><path d="M7 0 L13.5 6.5 H10 V11 H4 V6.5 H0.5Z" fill="#22c022" stroke="#109010" stroke-width=".6"/><path d="M7 1.5 L11 5.5 H3Z" fill="#7af07a"/></svg><div class="a" style="left:61px;top:155px;font-size:12px;line-height:14px;color:#000;font-weight:normal;white-space:nowrap;">GBP/JPY</div><div class="a" style="left:131px;top:155px;font-size:12px;line-height:14px;color:#1b9e1b;font-weight:normal;white-space:nowrap;">155.640</div><div class="a" style="left:212px;top:155px;font-size:12px;line-height:14px;color:#ee2f45;font-weight:normal;white-space:nowrap;">155.650</div><div class="a" style="left:294px;top:155px;font-size:12px;line-height:14px;color:#000;font-weight:normal;white-space:nowrap;">15:36:26</div><div class="a" style="left:377px;top:155px;font-size:12px;line-height:14px;color:#000;font-weight:normal;white-space:nowrap;">10</div><div class="a" style="left:21px;top:182px;width:8px;height:0;border-top:1px dotted #888"></div><svg class="a" style="left:45px;top:176px;" width="14" height="12" viewBox="0 0 14 12"><path d="M7 0 L13.5 6.5 H10 V11 H4 V6.5 H0.5Z" fill="#22c022" stroke="#109010" stroke-width=".6"/><path d="M7 1.5 L11 5.5 H3Z" fill="#7af07a"/></svg><div class="a" style="left:61px;top:176px;font-size:12px;line-height:14px;color:#000;font-weight:normal;white-space:nowrap;">EUR/AUD</div><div class="a" style="left:131px;top:176px;font-size:12px;line-height:14px;color:#1b9e1b;font-weight:normal;white-space:nowrap;">1.4875</div><div class="a" style="left:212px;top:176px;font-size:12px;line-height:14px;color:#ee2f45;font-weight:normal;white-space:nowrap;">1.4876</div><div class="a" style="left:294px;top:176px;font-size:12px;line-height:14px;color:#000;font-weight:normal;white-space:nowrap;">15:36:26</div><div class="a" style="left:377px;top:176px;font-size:12px;line-height:14px;color:#000;font-weight:normal;white-space:nowrap;">1</div><div class="a" style="left:21px;top:203px;width:8px;height:0;border-top:1px dotted #888"></div><svg class="a" style="left:45px;top:197px;" width="14" height="12" viewBox="0 0 14 12"><path d="M7 11 L13.5 4.5 H10 V0 H4 V4.5 H0.5Z" fill="#e77070" stroke="#c05050" stroke-width=".6"/></svg><div class="a" style="left:61px;top:197px;font-size:12px;line-height:14px;color:#000;font-weight:normal;white-space:nowrap;">EUR/CAD</div><div class="a" style="left:131px;top:197px;font-size:12px;line-height:14px;color:#ee2f45;font-weight:normal;white-space:nowrap;">1.31980</div><div class="a" style="left:212px;top:197px;font-size:12px;line-height:14px;color:#1b9e1b;font-weight:normal;white-space:nowrap;">1.32020</div><div class="a" style="left:294px;top:197px;font-size:12px;line-height:14px;color:#000;font-weight:normal;white-space:nowrap;">15:36:26</div><div class="a" style="left:377px;top:197px;font-size:12px;line-height:14px;color:#000;font-weight:normal;white-space:nowrap;">40</div><div class="a" style="left:21px;top:224px;width:8px;height:0;border-top:1px dotted #888"></div><svg class="a" style="left:45px;top:218px;" width="14" height="12" viewBox="0 0 14 12"><path d="M7 0 L13.5 6.5 H10 V11 H4 V6.5 H0.5Z" fill="#22c022" stroke="#109010" stroke-width=".6"/><path d="M7 1.5 L11 5.5 H3Z" fill="#7af07a"/></svg><div class="a" style="left:61px;top:218px;font-size:12px;line-height:14px;color:#000;font-weight:normal;white-space:nowrap;">CHF/JPY</div><div class="a" style="left:131px;top:218px;font-size:12px;line-height:14px;color:#1b9e1b;font-weight:normal;white-space:nowrap;">146.441</div><div class="a" style="left:212px;top:218px;font-size:12px;line-height:14px;color:#1b9e1b;font-weight:normal;white-space:nowrap;">146.449</div><div class="a" style="left:294px;top:218px;font-size:12px;line-height:14px;color:#000;font-weight:normal;white-space:nowrap;">15:36:26</div><div class="a" style="left:377px;top:218px;font-size:12px;line-height:14px;color:#000;font-weight:normal;white-space:nowrap;">8</div><div class="a" style="left:21px;top:245px;width:8px;height:0;border-top:1px dotted #888"></div><svg class="a" style="left:45px;top:239px;" width="14" height="12" viewBox="0 0 14 12"><path d="M7 11 L13.5 4.5 H10 V0 H4 V4.5 H0.5Z" fill="#e77070" stroke="#c05050" stroke-width=".6"/></svg><div class="a" style="left:61px;top:239px;font-size:12px;line-height:14px;color:#000;font-weight:normal;white-space:nowrap;">GBP/AUD</div><div class="a" style="left:131px;top:239px;font-size:12px;line-height:14px;color:#ee2f45;font-weight:normal;white-space:nowrap;">1.6628</div><div class="a" style="left:212px;top:239px;font-size:12px;line-height:14px;color:#ee2f45;font-weight:normal;white-space:nowrap;">1.6630</div><div class="a" style="left:294px;top:239px;font-size:12px;line-height:14px;color:#000;font-weight:normal;white-space:nowrap;">15:36:26</div><div class="a" style="left:377px;top:239px;font-size:12px;line-height:14px;color:#000;font-weight:normal;white-space:nowrap;">2</div><div class="a" style="left:21px;top:266px;width:8px;height:0;border-top:1px dotted #888"></div><svg class="a" style="left:45px;top:260px;" width="14" height="12" viewBox="0 0 14 12"><path d="M7 11 L13.5 4.5 H10 V0 H4 V4.5 H0.5Z" fill="#e77070" stroke="#c05050" stroke-width=".6"/></svg><div class="a" style="left:61px;top:260px;font-size:12px;line-height:14px;color:#000;font-weight:normal;white-space:nowrap;">CAD/JPY</div><div class="a" style="left:131px;top:260px;font-size:12px;line-height:14px;color:#ee2f45;font-weight:normal;white-space:nowrap;">105.47</div><div class="a" style="left:212px;top:260px;font-size:12px;line-height:14px;color:#1b9e1b;font-weight:normal;white-space:nowrap;">105.51</div><div class="a" style="left:294px;top:260px;font-size:12px;line-height:14px;color:#000;font-weight:normal;white-space:nowrap;">15:36:26</div><div class="a" style="left:377px;top:260px;font-size:12px;line-height:14px;color:#000;font-weight:normal;white-space:nowrap;">4</div><div class="a" style="left:21px;top:287px;width:8px;height:0;border-top:1px dotted #888"></div><svg class="a" style="left:45px;top:281px;" width="14" height="12" viewBox="0 0 14 12"><path d="M7 0 L13.5 6.5 H10 V11 H4 V6.5 H0.5Z" fill="#22c022" stroke="#109010" stroke-width=".6"/><path d="M7 1.5 L11 5.5 H3Z" fill="#7af07a"/></svg><div class="a" style="left:61px;top:281px;font-size:12px;line-height:14px;color:#000;font-weight:normal;white-space:nowrap;">GBP/NZD</div><div class="a" style="left:131px;top:281px;font-size:12px;line-height:14px;color:#1b9e1b;font-weight:normal;white-space:nowrap;">1.8965</div><div class="a" style="left:212px;top:281px;font-size:12px;line-height:14px;color:#ee2f45;font-weight:normal;white-space:nowrap;">1.8970</div><div class="a" style="left:294px;top:281px;font-size:12px;line-height:14px;color:#000;font-weight:normal;white-space:nowrap;">15:36:26</div><div class="a" style="left:377px;top:281px;font-size:12px;line-height:14px;color:#000;font-weight:normal;white-space:nowrap;">5</div><div class="a" style="left:21px;top:308px;width:8px;height:0;border-top:1px dotted #888"></div><svg class="a" style="left:45px;top:302px;" width="14" height="12" viewBox="0 0 14 12"><path d="M7 11 L13.5 4.5 H10 V0 H4 V4.5 H0.5Z" fill="#e77070" stroke="#c05050" stroke-width=".6"/></svg><div class="a" style="left:61px;top:302px;font-size:12px;line-height:14px;color:#000;font-weight:normal;white-space:nowrap;">GBP/CAD</div><div class="a" style="left:131px;top:302px;font-size:12px;line-height:14px;color:#ee2f45;font-weight:normal;white-space:nowrap;">1.4753</div><div class="a" style="left:212px;top:302px;font-size:12px;line-height:14px;color:#1b9e1b;font-weight:normal;white-space:nowrap;">1.4757</div><div class="a" style="left:294px;top:302px;font-size:12px;line-height:14px;color:#000;font-weight:normal;white-space:nowrap;">15:36:26</div><div class="a" style="left:377px;top:302px;font-size:12px;line-height:14px;color:#000;font-weight:normal;white-space:nowrap;">4</div><div class="a" style="left:21px;top:329px;width:8px;height:0;border-top:1px dotted #888"></div><svg class="a" style="left:45px;top:323px;" width="14" height="12" viewBox="0 0 14 12"><path d="M7 11 L13.5 4.5 H10 V0 H4 V4.5 H0.5Z" fill="#e77070" stroke="#c05050" stroke-width=".6"/></svg><div class="a" style="left:61px;top:323px;font-size:12px;line-height:14px;color:#000;font-weight:normal;white-space:nowrap;">AUD/JPY</div><div class="a" style="left:131px;top:323px;font-size:12px;line-height:14px;color:#ee2f45;font-weight:normal;white-space:nowrap;">93.600</div><div class="a" style="left:212px;top:323px;font-size:12px;line-height:14px;color:#1b9e1b;font-weight:normal;white-space:nowrap;">93.620</div><div class="a" style="left:294px;top:323px;font-size:12px;line-height:14px;color:#000;font-weight:normal;white-space:nowrap;">15:36:26</div><div class="a" style="left:377px;top:323px;font-size:12px;line-height:14px;color:#000;font-weight:normal;white-space:nowrap;">20</div><div class="a" style="left:21px;top:350px;width:8px;height:0;border-top:1px dotted #888"></div><svg class="a" style="left:45px;top:344px;" width="14" height="12" viewBox="0 0 14 12"><path d="M7 11 L13.5 4.5 H10 V0 H4 V4.5 H0.5Z" fill="#e77070" stroke="#c05050" stroke-width=".6"/></svg><div class="a" style="left:61px;top:344px;font-size:12px;line-height:14px;color:#000;font-weight:normal;white-space:nowrap;">AUD/NZD</div><div class="a" style="left:131px;top:344px;font-size:12px;line-height:14px;color:#ee2f45;font-weight:normal;white-space:nowrap;">1.1404</div><div class="a" style="left:212px;top:344px;font-size:12px;line-height:14px;color:#1b9e1b;font-weight:normal;white-space:nowrap;">1.1409</div><div class="a" style="left:294px;top:344px;font-size:12px;line-height:14px;color:#000;font-weight:normal;white-space:nowrap;">15:36:26</div><div class="a" style="left:377px;top:344px;font-size:12px;line-height:14px;color:#000;font-weight:normal;white-space:nowrap;">5</div><div class="a" style="left:457px;top:22px;width:17px;height:326px;background:#f0f0f0"></div><div class="a" style="left:459px;top:102px;width:13px;height:99px;background:#cdcdcd"></div><svg class="a" style="left:460px;top:27px;" width="11" height="8" viewBox="0 0 11 8"><path d="M1 6 L5.5 1.5 L10 6" fill="none" stroke="#505050" stroke-width="1.5"/></svg><svg class="a" style="left:460px;top:335px;" width="11" height="8" viewBox="0 0 11 8"><path d="M1 2 L5.5 6.5 L10 2" fill="none" stroke="#505050" stroke-width="1.5"/></svg></div><div class="a" style="left:1446px;top:519px;width:474px;height:28px;background:#86a9d6"></div><svg class="a" style="left:1542px;top:519px;" width="46" height="22" viewBox="0 0 46 22"><defs><linearGradient id="tg1" x1="0" y1="0" x2="0" y2="1"><stop offset="0" stop-color="#a4c8f8"/><stop offset=".5" stop-color="#b8d6fc"/><stop offset="1" stop-color="#d6e8fe"/></linearGradient></defs><path d="M0.5 0 L0.5 16 Q0.5 21.5 6 21.5 L27 21.5 Q31 21.5 34 18 L45.5 0 Z" fill="url(#tg1)"/><path d="M0.5 0 L0.5 16 Q0.5 21.5 6 21.5 L27 21.5 Q31 21.5 34 18 L45.5 0" fill="none" stroke="#9ab9e2"/></svg><svg class="a" style="left:1450px;top:519px;" width="100" height="22" viewBox="0 0 100 22"><defs><linearGradient id="tg2" x1="0" y1="0" x2="0" y2="1"><stop offset="0" stop-color="#ffd689"/><stop offset=".45" stop-color="#fdb556"/><stop offset=".55" stop-color="#fdc67a"/><stop offset="1" stop-color="#ffe0b0"/></linearGradient></defs><path d="M0.5 0 L0.5 16 Q0.5 21.5 6 21.5 L81 21.5 Q85 21.5 88 18 L99.5 0 Z" fill="url(#tg2)"/><path d="M0.5 0 L0.5 16 Q0.5 21.5 6 21.5 L81 21.5 Q85 21.5 88 18 L99.5 0" fill="none" stroke="#b8874a"/></svg><div class="a" style="left:1456px;top:523px;font-size:12px;line-height:14px;color:#000;font-weight:bold;white-space:nowrap;">Market Watch</div><div class="a" style="left:1549px;top:523px;font-size:12px;line-height:14px;color:#000;font-weight:normal;white-space:nowrap;">Ticks</div><div class="a" style="left:1446px;top:542px;width:474px;height:5px;background:#8db2e3"></div><div class="a" style="left:1446px;top:547px;width:474px;height:23px;background:linear-gradient(#e6f1fd,#cfe2fb 40%,#b5d4fb)"></div><div class="a" style="left:1452px;top:552px;font-size:12px;line-height:14px;color:#15428b;font-weight:bold;white-space:nowrap;">Navigator</div><svg class="a" style="left:1884px;top:552px;" width="30" height="14" viewBox="0 0 30 14"><rect x="5.5" y="0.5" width="4" height="7" fill="none" stroke="#0c2a66"/><rect x="8.4" y="0.5" width="1.5" height="7" fill="#0c2a66"/><rect x="3.5" y="7" width="8" height="1.6" fill="#0c2a66"/><rect x="7" y="8" width="1.3" height="3.5" fill="#0c2a66"/><path d="M20 1.5 L28 9 M28 1.5 L20 9" stroke="#0c2a66" stroke-width="1.5"/></svg><div class="a" style="left:1446px;top:570px;width:48px;height:19px;background:#f0f0f0;border-bottom:1px solid #9aa"></div><div class="a" style="left:1451px;top:572px;font-size:12px;line-height:14px;color:#000;font-weight:normal;white-space:nowrap;transform:scaleX(0.88);transform-origin:0 0;">Account</div><div class="a" style="left:1494px;top:570px;width:426px;height:19px;background:#fff;border:1px solid #a5acb5"></div><div class="a" style="left:1497px;top:573px;font-size:12px;line-height:14px;color:#000;font-weight:normal;white-space:nowrap;transform:scaleX(0.95);transform-origin:0 0;">2132595492</div><div class="a" style="left:1446px;top:588px;width:474px;height:151px;background:#fff;border:1px solid #828790;border-top:1px solid #828790"></div><div class="a" style="left:1457px;top:604px;width:0;height:88px;border-left:1px dotted #777"></div><div class="a" style="left:1458px;top:612px;width:12px;height:0;border-top:1px dotted #777"></div><div class="a" style="left:1458px;top:628px;width:12px;height:0;border-top:1px dotted #777"></div><div class="a" style="left:1458px;top:660px;width:12px;height:0;border-top:1px dotted #777"></div><div class="a" style="left:1458px;top:676px;width:12px;height:0;border-top:1px dotted #777"></div><div class="a" style="left:1458px;top:692px;width:12px;height:0;border-top:1px dotted #777"></div><div class="a" style="left:1476px;top:636px;width:0;height:8px;border-left:1px dotted #777"></div><div class="a" style="left:1476px;top:644px;width:12px;height:0;border-top:1px dotted #777"></div><svg class="a" style="left:1453px;top:624px;" width="9" height="9" viewBox="0 0 9 9"><rect x=".5" y=".5" width="8" height="8" fill="#fff" stroke="#777"/><rect x="2" y="4" width="5" height="1" fill="#000"/></svg><svg class="a" style="left:1453px;top:656px;" width="9" height="9" viewBox="0 0 9 9"><rect x=".5" y=".5" width="8" height="8" fill="#fff" stroke="#777"/><rect x="2" y="4" width="5" height="1" fill="#000"/><rect x="4" y="2" width="1" height="5" fill="#000"/></svg><svg class="a" style="left:1453px;top:672px;" width="9" height="9" viewBox="0 0 9 9"><rect x=".5" y=".5" width="8" height="8" fill="#fff" stroke="#777"/><rect x="2" y="4" width="5" height="1" fill="#000"/><rect x="4" y="2" width="1" height="5" fill="#000"/></svg><div class="a" style="left:1468px;top:589px;font-size:12px;line-height:14px;color:#000;font-weight:normal;white-space:nowrap;transform:scaleX(0.88);transform-origin:0 0;">Hybrid Solutions (Demo System)</div><div class="a" style="left:1487px;top:605px;font-size:12px;line-height:14px;color:#000;font-weight:normal;white-space:nowrap;transform:scaleX(0.88);transform-origin:0 0;">Favorites</div><div class="a" style="left:1487px;top:621px;font-size:12px;line-height:14px;color:#000;font-weight:normal;white-space:nowrap;transform:scaleX(0.88);transform-origin:0 0;">Accounts</div><div class="a" style="left:1507px;top:637px;font-size:12px;line-height:14px;color:#000;font-weight:normal;white-space:nowrap;transform:scaleX(0.88);transform-origin:0 0;">2132595492: sara</div><div class="a" style="left:1487px;top:653px;font-size:12px;line-height:14px;color:#000;font-weight:normal;white-space:nowrap;transform:scaleX(0.88);transform-origin:0 0;">Indicators</div><div class="a" style="left:1487px;top:669px;font-size:12px;line-height:14px;color:#000;font-weight:normal;white-space:nowrap;transform:scaleX(0.88);transform-origin:0 0;">VTL Local Scripts</div><div class="a" style="left:1487px;top:685px;font-size:12px;line-height:14px;color:#000;font-weight:normal;white-space:nowrap;transform:scaleX(0.88);transform-origin:0 0;">VTL Server Scripts</div><svg class="a" style="left:1449px;top:588px;" width="16" height="16" viewBox="0 0 16 16"><defs><linearGradient id="hg" x1="0" y1="0" x2="0" y2="1"><stop offset="0" stop-color="#f4cc50"/><stop offset="1" stop-color="#c8901c"/></linearGradient></defs><path d="M1.5 1.5 Q7 0 13.5 1.7 L11 7.4 Q8.5 8.6 6.5 8 L1.4 4.6Z" fill="#1c2c68"/><path d="M0 9.3 L6.5 12.8 L15 4.5 L15 14.8 L2 14.8Z" fill="url(#hg)"/></svg><svg class="a" style="left:1470px;top:605px;" width="16" height="15" viewBox="0 0 16 15"><rect x="3" y="0" width="10" height="6" fill="#40a020"/><path d="M8 4 L10 9 L15 9 L11 12 L12.5 15 L8 13 L3.5 15 L5 12 L1 9 L6 9Z" fill="#f8d048" stroke="#d09020" stroke-width=".5"/></svg><svg class="a" style="left:1468px;top:620px;" width="18" height="16" viewBox="0 0 18 16"><circle cx="6" cy="4" r="3" fill="#555"/><circle cx="12" cy="4" r="3" fill="#555"/><ellipse cx="9" cy="11" rx="7" ry="4" fill="#999"/><circle cx="9" cy="8" r="3" fill="#bbb"/><circle cx="3" cy="13" r="2.5" fill="#40b040"/><circle cx="15" cy="13" r="2.5" fill="#e06020"/></svg><svg class="a" style="left:1487px;top:637px;" width="16" height="16" viewBox="0 0 16 16"><rect x=".5" y=".5" width="15" height="15" fill="#fff" stroke="#1a3a7a"/><rect x="3" y="9" width="10" height="6" fill="#2a5aa8"/><circle cx="8" cy="6" r="3" fill="#e8c090"/><path d="M5 4 Q8 1 11 4Z" fill="#333"/></svg><svg class="a" style="left:1468px;top:653px;" width="18" height="14" viewBox="0 0 18 14"><path d="M1 12 L6 8 L10 10 L17 2" fill="none" stroke="#d03030" stroke-width="1.3"/><path d="M1 9 L8 11 L14 5" fill="none" stroke="#3060d0" stroke-width="1" stroke-dasharray="2,1"/></svg><svg class="a" style="left:1468px;top:669px;" width="18" height="16" viewBox="0 0 18 16"><path d="M2 1 L6 12 L9 2" fill="none" stroke="#111" stroke-width="1.3"/><rect x="8" y="7" width="9" height="7" fill="#3a8ae8"/></svg><svg class="a" style="left:1468px;top:685px;" width="18" height="16" viewBox="0 0 18 16"><path d="M2 1 L6 12 L9 2" fill="none" stroke="#111" stroke-width="1.3"/><rect x="10" y="3" width="6" height="11" fill="#ccc" stroke="#888" stroke-width=".6"/></svg><div class="a" style="left:1446px;top:739px;width:474px;height:24px;background:#86a9d6"></div><svg class="a" style="left:1517px;top:739px;" width="90" height="22" viewBox="0 0 90 22"><defs><linearGradient id="tg3" x1="0" y1="0" x2="0" y2="1"><stop offset="0" stop-color="#a4c8f8"/><stop offset=".5" stop-color="#b8d6fc"/><stop offset="1" stop-color="#d6e8fe"/></linearGradient></defs><path d="M0.5 0 L0.5 16 Q0.5 21.5 6 21.5 L71 21.5 Q75 21.5 78 18 L89.5 0 Z" fill="url(#tg3)"/><path d="M0.5 0 L0.5 16 Q0.5 21.5 6 21.5 L71 21.5 Q75 21.5 78 18 L89.5 0" fill="none" stroke="#9ab9e2"/></svg><svg class="a" style="left:1450px;top:739px;" width="76" height="22" viewBox="0 0 76 22"><defs><linearGradient id="tg4" x1="0" y1="0" x2="0" y2="1"><stop offset="0" stop-color="#ffd689"/><stop offset=".45" stop-color="#fdb556"/><stop offset=".55" stop-color="#fdc67a"/><stop offset="1" stop-color="#ffe0b0"/></linearGradient></defs><path d="M0.5 0 L0.5 16 Q0.5 21.5 6 21.5 L57 21.5 Q61 21.5 64 18 L75.5 0 Z" fill="url(#tg4)"/><path d="M0.5 0 L0.5 16 Q0.5 21.5 6 21.5 L57 21.5 Q61 21.5 64 18 L75.5 0" fill="none" stroke="#b8874a"/></svg><div class="a" style="left:1456px;top:743px;font-size:12px;line-height:14px;color:#000;font-weight:bold;white-space:nowrap;">Navigator</div><div class="a" style="left:1523px;top:743px;font-size:12px;line-height:14px;color:#000;font-weight:normal;white-space:nowrap;">Data Window</div><div class="a" style="left:0;top:763px;width:1920px;height:4px;background:#7ea4d8"></div><div class="a" style="left:0;top:767px;width:23px;height:252px;background:linear-gradient(90deg,#ffe3a0,#fbb862 60%,#f8a24a)"></div><div class="a" style="left:-10px;top:770px;width:40px;height:50px"><div style="position:absolute;left:0;top:0;transform-origin:0 0;transform:translate(2px,3px) rotate(90deg) translate(0,-27px);font-size:12px;font-weight:bold;color:#15428b;white-space:nowrap;line-height:15px">v Store</div></div><svg class="a" style="left:5px;top:981px;" width="14" height="36" viewBox="0 0 14 36"><rect x="4" y="1" width="5" height="8" fill="#15428b"/><rect x="2" y="9" width="9" height="1.8" fill="#15428b"/><rect x="5.8" y="10" width="1.5" height="5" fill="#15428b"/><path d="M3 22 L11 30 M11 22 L3 30" stroke="#15428b" stroke-width="1.8"/></svg><div class="a" style="left:23px;top:767px;width:1897px;height:226px;background:#f0f0f0"></div><div class="a" style="left:23px;top:767px;width:1896px;height:21px;background:#fff;border:1px solid #a0a0a0;border-left:none"></div><div class="a" style="left:25px;top:771px;font-size:12px;line-height:14px;color:#6d6d6d;font-weight:normal;white-space:nowrap;transform:scaleX(0.86);transform-origin:0 0;">Search Plugins</div><svg class="a" style="left:23px;top:790px;" width="320" height="20" viewBox="0 0 320 20"><path d="M7.5 18.5 L17.5 1.5 Q19 0.5 21 0.5 L77 0.5 Q80 0.5 81 3 L85.5 18.5" fill="#f7f7f7" stroke="#a9a9a9"/><path d="M82.5 18.5 L92.5 1.5 Q94 0.5 96 0.5 L145 0.5 Q148 0.5 149 3 L153.5 18.5" fill="#f7f7f7" stroke="#a9a9a9"/><path d="M151.5 18.5 L161.5 1.5 Q163 0.5 165 0.5 L204 0.5 Q207 0.5 208 3 L212.5 18.5" fill="#f7f7f7" stroke="#a9a9a9"/><path d="M211.5 18.5 L221.5 1.5 Q223 0.5 225 0.5 L249 0.5 Q252 0.5 253 3 L257.5 18.5" fill="#f7f7f7" stroke="#a9a9a9"/><path d="M258.5 18.5 L268.5 1.5 Q270 0.5 272 0.5 L296 0.5 Q299 0.5 300 3 L304.5 18.5" fill="#f7f7f7" stroke="#a9a9a9"/></svg><div class="a" style="left:23px;top:808px;width:1897px;height:1px;background:#a8a8a8"></div><div class="a" style="left:40px;top:793px;font-size:11.5px;line-height:13.5px;color:#000;font-weight:normal;white-space:nowrap;transform:scaleX(0.89);transform-origin:0 0;">Client Plugins</div><div class="a" style="left:115px;top:793px;font-size:11.5px;line-height:13.5px;color:#000;font-weight:normal;white-space:nowrap;transform:scaleX(0.89);transform-origin:0 0;">VTL Plugins</div><div class="a" style="left:180px;top:793px;font-size:11.5px;line-height:13.5px;color:#000;font-weight:normal;white-space:nowrap;transform:scaleX(0.89);transform-origin:0 0;">Templates</div><div class="a" style="left:240px;top:793px;font-size:11.5px;line-height:13.5px;color:#000;font-weight:normal;white-space:nowrap;transform:scaleX(0.89);transform-origin:0 0;">eBooks</div><div class="a" style="left:286px;top:793px;font-size:11.5px;line-height:13.5px;color:#000;font-weight:normal;white-space:nowrap;transform:scaleX(0.89);transform-origin:0 0;">Styles</div><div class="a" style="left:112px;top:793px;width:59px;height:13px;border:1px dotted #000"></div><div class="a" style="left:24px;top:812px;width:22px;height:170px;background:#f0f0f0"></div><svg class="a" style="left:28px;top:813px;" width="19" height="110" viewBox="0 0 19 110"><path d="M18.5 68.5 Q8 70 0.5 82 V102 Q0.5 106.5 6 106.5 H18.5" fill="#f7f7f7" stroke="#a9a9a9"/><path d="M18.5 33.5 Q8 35 0.5 47 V66 Q0.5 70.5 6 70.5 H18.5" fill="#f7f7f7" stroke="#a9a9a9"/><path d="M18.5 0.5 Q8 2 0.5 14 V32 Q0.5 36.5 6 36.5 H18.5" fill="#f7f7f7" stroke="#a9a9a9"/></svg><div class="a" style="left:44px;top:824px;width:60px;transform-origin:0 0;transform:rotate(90deg);font-size:11.5px;line-height:14px;color:#000;white-space:nowrap">All</div><div class="a" style="left:44px;top:849px;width:60px;transform-origin:0 0;transform:rotate(90deg);font-size:11.5px;line-height:14px;color:#000;white-space:nowrap">Free</div><div class="a" style="left:44px;top:884px;width:60px;transform-origin:0 0;transform:rotate(90deg);font-size:11.5px;line-height:14px;color:#000;white-space:nowrap">Paid</div><div class="a" style="left:46px;top:811px;width:1872px;height:170px;background:#fff;border:2px solid #a0a0a0;border-style:double;border-width:3px"></div><svg class="a" style="left:69.0px;top:815px" width="33" height="33" viewBox="0 0 30 30"><path d="M3 4 Q4 9 9 9 L19 9 Q24 9 25 4 Q23 7 20 7 L8 7 Q5 7 3 4Z" fill="#111"/><path d="M8 8 Q7 16 10 19 Q9 24 14 24 Q19 24 18 19 Q21 16 20 8Z" fill="#111"/><ellipse cx="14" cy="21" rx="4" ry="2.2" fill="#fff"/><ellipse cx="12.5" cy="21" rx="1" ry=".8" fill="#111"/><ellipse cx="15.5" cy="21" rx="1" ry=".8" fill="#111"/><circle cx="11" cy="13" r="1.5" fill="#fff"/><circle cx="17" cy="13" r="1.5" fill="#fff"/><path d="M24 27V19M21 21.5L24 18L27 21.5" stroke="#111" stroke-width="2" fill="none"/></svg><div class="a" style="left:35.5px;top:853px;width:100px;text-align:center;font-size:11px;line-height:13px;color:#000;font-weight:normal;white-space:nowrap;transform:scaleX(0.93);transform-origin:50% 0;">Bullish</div><div class="a" style="left:35.5px;top:866px;width:100px;text-align:center;font-size:11px;line-height:13px;color:#000;font-weight:normal;white-space:nowrap;transform:scaleX(0.93);transform-origin:50% 0;">Reversa...</div><svg class="a" style="left:69.0px;top:890px" width="33" height="33" viewBox="0 0 30 30"><rect x="8" y="3" width="12" height="24" rx="3" fill="#222"/><circle cx="14" cy="8" r="2.8" fill="#d02020"/><circle cx="14" cy="15" r="2.8" fill="#e0a010"/><circle cx="14" cy="22" r="2.8" fill="#20c020"/><path d="M4 6h4l-2 3zM20 6h4l-2 3zM4 13h4l-2 3zM20 13h4l-2 3z" fill="#444"/></svg><div class="a" style="left:35.5px;top:928px;width:100px;text-align:center;font-size:11px;line-height:13px;color:#000;font-weight:normal;white-space:nowrap;transform:scaleX(0.93);transform-origin:50% 0;">Traffic Light</div><svg class="a" style="left:144.0px;top:815px" width="33" height="33" viewBox="0 0 30 30"><path d="M4 3 V25 H26" fill="none" stroke="#111" stroke-width="3"/><path d="M8 22 L14 13 L18 18 L24 6 V22Z" fill="#3a78e0" stroke="#111" stroke-width="2"/></svg><div class="a" style="left:110.5px;top:853px;width:100px;text-align:center;font-size:11px;line-height:13px;color:#000;font-weight:normal;white-space:nowrap;transform:scaleX(0.93);transform-origin:50% 0;">Elegant</div><div class="a" style="left:110.5px;top:866px;width:100px;text-align:center;font-size:11px;line-height:13px;color:#000;font-weight:normal;white-space:nowrap;transform:scaleX(0.93);transform-origin:50% 0;">Oscillator</div><svg class="a" style="left:144.0px;top:890px" width="33" height="33" viewBox="0 0 30 30"><circle cx="12" cy="9" r="6" fill="none" stroke="#777" stroke-width="1.5"/><text x="12" y="12" font-size="8" text-anchor="middle" fill="#777" font-family="Liberation Sans">$</text><path d="M6 14Q6 22 16 20L22 12M18 12H22V16" fill="none" stroke="#777" stroke-width="1.5"/><path d="M7 27V22H10V27M12 27V21H15V27M17 27V19H20V27" fill="none" stroke="#777" stroke-width="1.2"/></svg><div class="a" style="left:110.5px;top:928px;width:100px;text-align:center;font-size:11px;line-height:13px;color:#000;font-weight:normal;white-space:nowrap;transform:scaleX(0.93);transform-origin:50% 0;">Trend RSI</div><svg class="a" style="left:219.0px;top:815px" width="33" height="33" viewBox="0 0 30 30"><circle cx="8" cy="8" r="5" fill="#2e8ad8"/><rect x="16" y="3" width="10" height="10" fill="#2e8ad8"/><circle cx="8" cy="21" r="5" fill="#2e8ad8"/><circle cx="21" cy="21" r="5" fill="#2e8ad8"/></svg><div class="a" style="left:185.5px;top:853px;width:100px;text-align:center;font-size:11px;line-height:13px;color:#000;font-weight:normal;white-space:nowrap;transform:scaleX(0.93);transform-origin:50% 0;">Momentum</div><div class="a" style="left:185.5px;top:866px;width:100px;text-align:center;font-size:11px;line-height:13px;color:#000;font-weight:normal;white-space:nowrap;transform:scaleX(0.93);transform-origin:50% 0;">Deviatio...</div><svg class="a" style="left:219.0px;top:890px" width="33" height="33" viewBox="0 0 30 30"><rect x="2" y="2" width="26" height="26" rx="5" fill="none" stroke="#1a2030" stroke-width="1.8"/><text x="15" y="21" font-size="17" text-anchor="middle" fill="#1a2030" font-family="Liberation Sans">$</text></svg><div class="a" style="left:185.5px;top:928px;width:100px;text-align:center;font-size:11px;line-height:13px;color:#000;font-weight:normal;white-space:nowrap;transform:scaleX(0.93);transform-origin:50% 0;">Power of USD</div><svg class="a" style="left:294.0px;top:815px" width="33" height="33" viewBox="0 0 30 30"><path d="M3 9V3H9M19 3H25V9M25 19V25H19M9 25H3V19" fill="none" stroke="#111" stroke-width="2.5"/><rect x="11" y="9" width="6" height="10" fill="#2e8ad8" stroke="#111" stroke-width="1.5"/><path d="M14 5V23" stroke="#111" stroke-width="1.5"/></svg><div class="a" style="left:260.5px;top:853px;width:100px;text-align:center;font-size:11px;line-height:13px;color:#000;font-weight:normal;white-space:nowrap;transform:scaleX(0.93);transform-origin:50% 0;">Didi Index</div><div class="a" style="left:260.5px;top:866px;width:100px;text-align:center;font-size:11px;line-height:13px;color:#000;font-weight:normal;white-space:nowrap;transform:scaleX(0.93);transform-origin:50% 0;">Clean a...</div><svg class="a" style="left:294.0px;top:890px" width="33" height="33" viewBox="0 0 30 30"><path d="M14 3Q6 2 5 9Q1 12 3 17Q2 23 8 25Q11 28 14 26Q17 28 20 25Q26 23 25 17Q27 12 23 9Q22 2 14 3Z" fill="none" stroke="#111" stroke-width="1.5"/><path d="M14 3V26" stroke="#111" stroke-width="2"/><path d="M8 9Q11 11 9 14M19 8Q17 12 21 14M7 19Q10 18 11 21M20 19Q18 22 21 23" fill="none" stroke="#111" stroke-width="1"/></svg><div class="a" style="left:260.5px;top:928px;width:100px;text-align:center;font-size:11px;line-height:13px;color:#000;font-weight:normal;white-space:nowrap;transform:scaleX(0.93);transform-origin:50% 0;">e-Smart</div><div class="a" style="left:260.5px;top:941px;width:100px;text-align:center;font-size:11px;line-height:13px;color:#000;font-weight:normal;white-space:nowrap;transform:scaleX(0.93);transform-origin:50% 0;">Trailing</div><svg class="a" style="left:369.0px;top:815px" width="33" height="33" viewBox="0 0 30 30"><path d="M14 5 L5 13 M14 5 L23 13" stroke="#111" stroke-width="1.5" fill="none"/><circle cx="14" cy="5" r="2" fill="none" stroke="#111" stroke-width="1.5"/><rect x="3" y="13" width="22" height="11" rx="2" fill="none" stroke="#111" stroke-width="2"/><text x="14" y="21.5" font-size="6.5" font-weight="bold" text-anchor="middle" fill="#111" font-family="Liberation Sans">CLOSE</text></svg><div class="a" style="left:335.5px;top:853px;width:100px;text-align:center;font-size:11px;line-height:13px;color:#000;font-weight:normal;white-space:nowrap;transform:scaleX(0.93);transform-origin:50% 0;">Close Bollinger</div><div class="a" style="left:335.5px;top:866px;width:100px;text-align:center;font-size:11px;line-height:13px;color:#000;font-weight:normal;white-space:nowrap;transform:scaleX(0.93);transform-origin:50% 0;">Bands Cros...</div><svg class="a" style="left:369.0px;top:890px" width="33" height="33" viewBox="0 0 30 30"><rect x="11" y="2" width="7" height="7" fill="none" stroke="#111" stroke-width="1.5"/><rect x="2" y="11" width="7" height="7" fill="none" stroke="#111" stroke-width="1.5"/><rect x="20" y="11" width="7" height="7" fill="none" stroke="#111" stroke-width="1.5"/><rect x="11" y="20" width="7" height="7" fill="none" stroke="#111" stroke-width="1.5"/><path d="M11 5.5H5.5V11M18 5.5H23.5V11M5.5 18V23.5H11M23.5 18V23.5H18" fill="none" stroke="#111" stroke-width="1.5"/></svg><div class="a" style="left:335.5px;top:928px;width:100px;text-align:center;font-size:11px;line-height:13px;color:#000;font-weight:normal;white-space:nowrap;transform:scaleX(0.93);transform-origin:50% 0;">VBS &#8211; Very</div><div class="a" style="left:335.5px;top:941px;width:100px;text-align:center;font-size:11px;line-height:13px;color:#000;font-weight:normal;white-space:nowrap;transform:scaleX(0.93);transform-origin:50% 0;">Blondie ...</div><svg class="a" style="left:444.0px;top:815px" width="33" height="33" viewBox="0 0 30 30"><text x="2" y="10" font-size="10" font-weight="bold" fill="#111" font-family="Liberation Sans">$</text><path d="M2 24H26M4 27H24" stroke="#111" stroke-width="1.5"/><path d="M6 23V15H8V23M11 23V12H13V23M16 23V14H18V23M21 23V10H23V23" fill="none" stroke="#111" stroke-width="1.5"/><path d="M7 15L11 11L16 14L22 9H26" fill="none" stroke="#111" stroke-width="1.5"/></svg><div class="a" style="left:410.5px;top:853px;width:100px;text-align:center;font-size:11px;line-height:13px;color:#000;font-weight:normal;white-space:nowrap;transform:scaleX(0.93);transform-origin:50% 0;">BoDi</div><svg class="a" style="left:444.0px;top:890px" width="33" height="33" viewBox="0 0 30 30"><rect x="1" y="1" width="28" height="28" rx="5" fill="#000"/><path d="M20 8Q14 4 10 9Q9 13 15 15Q21 17 18 22Q14 26 8 22" fill="none" stroke="#fff" stroke-width="3.5"/></svg><div class="a" style="left:410.5px;top:928px;width:100px;text-align:center;font-size:11px;line-height:13px;color:#000;font-weight:normal;white-space:nowrap;transform:scaleX(0.93);transform-origin:50% 0;">Sidus Trading</div><div class="a" style="left:410.5px;top:941px;width:100px;text-align:center;font-size:11px;line-height:13px;color:#000;font-weight:normal;white-space:nowrap;transform:scaleX(0.93);transform-origin:50% 0;">Robot</div><svg class="a" style="left:519.0px;top:815px" width="33" height="33" viewBox="0 0 30 30"><path d="M14 3 Q26 3 26 13 Q26 18 21 17 Q17 16 18 21 Q18 26 13 26 Q2 26 2 14 Q2 3 14 3Z" fill="#d8b070" stroke="#8a6030" stroke-width=".8"/><circle cx="8" cy="10" r="2" fill="#d03030"/><circle cx="14" cy="7" r="2" fill="#3050d0"/><circle cx="20" cy="9" r="2" fill="#e0c020"/><circle cx="8" cy="17" r="2" fill="#30a030"/><path d="M10 14 L24 26" stroke="#555" stroke-width="1.5"/></svg><div class="a" style="left:485.5px;top:853px;width:100px;text-align:center;font-size:11px;line-height:13px;color:#000;font-weight:normal;white-space:nowrap;transform:scaleX(0.93);transform-origin:50% 0;">CCI MTF</div><div class="a" style="left:485.5px;top:866px;width:100px;text-align:center;font-size:11px;line-height:13px;color:#000;font-weight:normal;white-space:nowrap;transform:scaleX(0.93);transform-origin:50% 0;">Coloured</div><svg class="a" style="left:519.0px;top:890px" width="33" height="33" viewBox="0 0 30 30"><rect x="1" y="1" width="28" height="28" rx="5" fill="#000"/><path d="M20 8Q14 4 10 9Q9 13 15 15Q21 17 18 22Q14 26 8 22" fill="none" stroke="#fff" stroke-width="3.5"/></svg><div class="a" style="left:485.5px;top:928px;width:100px;text-align:center;font-size:11px;line-height:13px;color:#000;font-weight:normal;white-space:nowrap;transform:scaleX(0.93);transform-origin:50% 0;">Sidus</div><svg class="a" style="left:594.0px;top:815px" width="33" height="33" viewBox="0 0 30 30"><path d="M5 3H21L25 7V26H5Z" fill="none" stroke="#111" stroke-width="2"/><text x="3" y="12" font-size="9" font-weight="bold" fill="#111" font-family="Liberation Sans">$</text><path d="M10 20L20 10" stroke="#111" stroke-width="1.5"/><path d="M13 23h10M15 20h8M17 17h6" stroke="#111" stroke-width="1.5"/></svg><div class="a" style="left:560.5px;top:853px;width:100px;text-align:center;font-size:11px;line-height:13px;color:#000;font-weight:normal;white-space:nowrap;transform:scaleX(0.93);transform-origin:50% 0;">Experts10</div><svg class="a" style="left:594.0px;top:890px" width="33" height="33" viewBox="0 0 30 30"><circle cx="15" cy="15" r="12" fill="none" stroke="#111" stroke-width="1.8"/><circle cx="15" cy="15" r="7" fill="none" stroke="#111" stroke-width="1.8"/><path d="M11 12H19M15 12V19" stroke="#111" stroke-width="1.8"/><circle cx="15" cy="3" r="1.5" fill="#111"/><circle cx="15" cy="27" r="1.5" fill="#111"/><circle cx="3" cy="15" r="1.5" fill="#111"/><circle cx="27" cy="15" r="1.5" fill="#111"/></svg><div class="a" style="left:560.5px;top:928px;width:100px;text-align:center;font-size:11px;line-height:13px;color:#000;font-weight:normal;white-space:nowrap;transform:scaleX(0.93);transform-origin:50% 0;">Tether Line</div><svg class="a" style="left:669.0px;top:815px" width="33" height="33" viewBox="0 0 30 30"><path d="M5 3H23V20H5Z" fill="none" stroke="#111" stroke-width="2"/><path d="M8 17V13M11 17V11M14 17V9M17 17V7" stroke="#111" stroke-width="1.5"/><path d="M8 11L17 5" stroke="#111" stroke-width="1"/><text x="12" y="28" font-size="10" font-weight="bold" fill="#111" font-family="Liberation Sans">$</text></svg><div class="a" style="left:635.5px;top:853px;width:100px;text-align:center;font-size:11px;line-height:13px;color:#000;font-weight:normal;white-space:nowrap;transform:scaleX(0.93);transform-origin:50% 0;">Emilio Super</div><div class="a" style="left:635.5px;top:866px;width:100px;text-align:center;font-size:11px;line-height:13px;color:#000;font-weight:normal;white-space:nowrap;transform:scaleX(0.93);transform-origin:50% 0;">Bands</div><svg class="a" style="left:669.0px;top:890px" width="33" height="33" viewBox="0 0 30 30"><path d="M9 28V3M3 9L9 3L15 9M21 2V27M15 21L21 27L27 21" fill="none" stroke="#111" stroke-width="2"/></svg><div class="a" style="left:635.5px;top:928px;width:100px;text-align:center;font-size:11px;line-height:13px;color:#000;font-weight:normal;white-space:nowrap;transform:scaleX(0.93);transform-origin:50% 0;">HLC</div><svg class="a" style="left:744.0px;top:815px" width="33" height="33" viewBox="0 0 30 30"><path d="M13 15 C15 5 18 4 21 15 C23 24 25 26 28 18 V12 C25 4 23 6 21 15 C18 26 15 25 13 15Z" fill="#bbb"/><path d="M1 15 C4 3 8 3 11 15 S18 27 21 15 S27 3 29 10" fill="none" stroke="#111" stroke-width="1.2"/><path d="M1 15 C4 27 8 27 11 15 S18 3 21 15 S27 27 29 20" fill="none" stroke="#111" stroke-width="1.2"/></svg><div class="a" style="left:710.5px;top:853px;width:100px;text-align:center;font-size:11px;line-height:13px;color:#000;font-weight:normal;white-space:nowrap;transform:scaleX(0.93);transform-origin:50% 0;">Disparity</div><div class="a" style="left:710.5px;top:866px;width:100px;text-align:center;font-size:11px;line-height:13px;color:#000;font-weight:normal;white-space:nowrap;transform:scaleX(0.93);transform-origin:50% 0;">Oscillator</div><svg class="a" style="left:744.0px;top:890px" width="33" height="33" viewBox="0 0 30 30"><text x="15" y="26" font-size="29" font-weight="bold" text-anchor="middle" fill="#000" font-family="Liberation Sans">$</text></svg><div class="a" style="left:710.5px;top:928px;width:100px;text-align:center;font-size:11px;line-height:13px;color:#000;font-weight:normal;white-space:nowrap;transform:scaleX(0.93);transform-origin:50% 0;">USDX</div><svg class="a" style="left:819.0px;top:815px" width="33" height="33" viewBox="0 0 30 30"><circle cx="10" cy="9" r="7" fill="none" stroke="#111" stroke-width="2.5"/><text x="10" y="13" font-size="10" font-weight="bold" text-anchor="middle" fill="#111" font-family="Liberation Sans">$</text><circle cx="19" cy="18" r="8" fill="#111"/><text x="19" y="22" font-size="10" font-weight="bold" text-anchor="middle" fill="#fff" font-family="Liberation Sans">€</text><path d="M20 2Q25 3 25 8M6 20Q3 23 6 26" stroke="#111" stroke-width="1.5" fill="none"/></svg><div class="a" style="left:785.5px;top:853px;width:100px;text-align:center;font-size:11px;line-height:13px;color:#000;font-weight:normal;white-space:nowrap;transform:scaleX(0.93);transform-origin:50% 0;">Open Two</div><div class="a" style="left:785.5px;top:866px;width:100px;text-align:center;font-size:11px;line-height:13px;color:#000;font-weight:normal;white-space:nowrap;transform:scaleX(0.93);transform-origin:50% 0;">Pendin...</div><svg class="a" style="left:819.0px;top:890px" width="33" height="33" viewBox="0 0 30 30"><path d="M3 4H27M3 26H27" stroke="#333" stroke-width="1" stroke-dasharray="2,1"/><circle cx="16" cy="12" r="5" fill="none" stroke="#333" stroke-width="1.2"/><path d="M4 20Q10 17 16 19L24 17Q26 21 20 22L8 24" fill="none" stroke="#333" stroke-width="1.3"/></svg><div class="a" style="left:785.5px;top:928px;width:100px;text-align:center;font-size:11px;line-height:13px;color:#000;font-weight:normal;white-space:nowrap;transform:scaleX(0.93);transform-origin:50% 0;">Close All</div><div class="a" style="left:785.5px;top:941px;width:100px;text-align:center;font-size:11px;line-height:13px;color:#000;font-weight:normal;white-space:nowrap;transform:scaleX(0.93);transform-origin:50% 0;">Positions</div><svg class="a" style="left:894.0px;top:815px" width="33" height="33" viewBox="0 0 30 30"><path d="M3 27V16M9 27V13M15 27V11M21 27V9M27 27V7" stroke="#111" stroke-width="4.5" stroke-linecap="round"/><path d="M2 12L10 7L16 9L26 2" fill="none" stroke="#111" stroke-width="2"/></svg><div class="a" style="left:860.5px;top:853px;width:100px;text-align:center;font-size:11px;line-height:13px;color:#000;font-weight:normal;white-space:nowrap;transform:scaleX(0.93);transform-origin:50% 0;">DTrends</div><svg class="a" style="left:894.0px;top:890px" width="33" height="33" viewBox="0 0 30 30"><path d="M2 15H12M16 15H27M2 21H12M16 21H27M2 27H12M16 27H27" stroke="#111" stroke-width="4" stroke-linecap="round"/><path d="M2 15h10v0M16 21h11" stroke="#fff" stroke-width="1.5"/><path d="M8 2V10M6 7L8 10L10 7M22 6V12M20 9L22 12L24 9" fill="none" stroke="#111" stroke-width="1.3"/></svg><div class="a" style="left:860.5px;top:928px;width:100px;text-align:center;font-size:11px;line-height:13px;color:#000;font-weight:normal;white-space:nowrap;transform:scaleX(0.93);transform-origin:50% 0;">Pivot</div><svg class="a" style="left:969.0px;top:815px" width="33" height="33" viewBox="0 0 30 30"><path d="M4 27 L10 20 L14 22 L26 10" fill="none" stroke="#111" stroke-width="2"/><path d="M10 27V22M13 27V21M16 27V19M19 27V17M22 27V15M25 27V13" stroke="#111" stroke-width="1.5"/><circle cx="22" cy="7" r="5" fill="none" stroke="#111" stroke-width="2"/><text x="22" y="10" font-size="7" text-anchor="middle" fill="#111" font-family="Liberation Sans">$</text><path d="M5 14V8M8 12V5M11 13V8" stroke="#111" stroke-width="2"/></svg><div class="a" style="left:935.5px;top:853px;width:100px;text-align:center;font-size:11px;line-height:13px;color:#000;font-weight:normal;white-space:nowrap;transform:scaleX(0.93);transform-origin:50% 0;">Stochastic</div><div class="a" style="left:935.5px;top:866px;width:100px;text-align:center;font-size:11px;line-height:13px;color:#000;font-weight:normal;white-space:nowrap;transform:scaleX(0.93);transform-origin:50% 0;">Trading</div><svg class="a" style="left:969.0px;top:890px" width="33" height="33" viewBox="0 0 30 30"><path d="M3 27H27" stroke="#555" stroke-width="1.5"/><path d="M4 27V17H8V27M11 27V20H15V27M18 27V14H22V27M23 27V11H27V27" fill="none" stroke="#666" stroke-width="1.3"/><circle cx="5" cy="11" r="2.5" fill="none" stroke="#666" stroke-width="1.3"/><circle cx="12" cy="11" r="2.5" fill="none" stroke="#666" stroke-width="1.3"/><circle cx="20" cy="7" r="3" fill="none" stroke="#666" stroke-width="1.3"/><path d="M7 11H10M14 11L18 8M22 5L26 8" stroke="#666" stroke-width="1.3"/></svg><div class="a" style="left:935.5px;top:928px;width:100px;text-align:center;font-size:11px;line-height:13px;color:#000;font-weight:normal;white-space:nowrap;transform:scaleX(0.93);transform-origin:50% 0;">RSIofPSAR</div><svg class="a" style="left:1044.0px;top:815px" width="33" height="33" viewBox="0 0 30 30"><path d="M26 14H5M13 6L4 14L13 22" fill="none" stroke="#111" stroke-width="2.5"/></svg><div class="a" style="left:1010.5px;top:853px;width:100px;text-align:center;font-size:11px;line-height:13px;color:#000;font-weight:normal;white-space:nowrap;transform:scaleX(0.93);transform-origin:50% 0;">Parabolic Stop</div><div class="a" style="left:1010.5px;top:866px;width:100px;text-align:center;font-size:11px;line-height:13px;color:#000;font-weight:normal;white-space:nowrap;transform:scaleX(0.93);transform-origin:50% 0;">and Reverse</div><svg class="a" style="left:1044.0px;top:890px" width="33" height="33" viewBox="0 0 30 30"><path d="M3 3V26H27" fill="none" stroke="#111" stroke-width="1.8"/><path d="M7 10H10V7H14V10H17V7H21M7 19H10V16H14V21H17V18H23" fill="none" stroke="#111" stroke-width="1.8"/></svg><div class="a" style="left:1010.5px;top:928px;width:100px;text-align:center;font-size:11px;line-height:13px;color:#000;font-weight:normal;white-space:nowrap;transform:scaleX(0.93);transform-origin:50% 0;">iDoubleCha...</div><svg class="a" style="left:1119.0px;top:815px" width="33" height="33" viewBox="0 0 30 30"><path d="M3 24H27" stroke="#e0607a" stroke-width="1.5"/><rect x="4" y="14" width="5" height="10" fill="none" stroke="#e0607a" stroke-width="1.5"/><rect x="12" y="4" width="5" height="20" fill="none" stroke="#e0607a" stroke-width="1.5"/><rect x="20" y="10" width="5" height="14" fill="none" stroke="#e0607a" stroke-width="1.5"/></svg><div class="a" style="left:1085.5px;top:853px;width:100px;text-align:center;font-size:11px;line-height:13px;color:#000;font-weight:normal;white-space:nowrap;transform:scaleX(0.93);transform-origin:50% 0;">Volatility</div><div class="a" style="left:1085.5px;top:866px;width:100px;text-align:center;font-size:11px;line-height:13px;color:#000;font-weight:normal;white-space:nowrap;transform:scaleX(0.93);transform-origin:50% 0;">Pivots</div><svg class="a" style="left:1119.0px;top:890px" width="33" height="33" viewBox="0 0 30 30"><path d="M3 3V26H27" fill="none" stroke="#111" stroke-width="1.5"/><path d="M5 14Q9 2 13 10Q17 16 20 10Q24 6 26 14M5 21Q10 12 15 18Q20 22 26 17" fill="none" stroke="#111" stroke-width="1.3"/></svg><div class="a" style="left:1085.5px;top:928px;width:100px;text-align:center;font-size:11px;line-height:13px;color:#000;font-weight:normal;white-space:nowrap;transform:scaleX(0.93);transform-origin:50% 0;">Double</div><div class="a" style="left:1085.5px;top:941px;width:100px;text-align:center;font-size:11px;line-height:13px;color:#000;font-weight:normal;white-space:nowrap;transform:scaleX(0.93);transform-origin:50% 0;">Smooth...</div><svg class="a" style="left:1194.0px;top:815px" width="33" height="33" viewBox="0 0 30 30"><path d="M6 27V17M12 22V4M18 17V3M24 12V2" stroke="#4a9ae8" stroke-width="1"/><rect x="4.5" y="19" width="3" height="5" fill="none" stroke="#4a9ae8" stroke-width="1.2"/><rect x="10.5" y="7" width="3" height="12" fill="none" stroke="#4a9ae8" stroke-width="1.2"/><rect x="16.5" y="6" width="3" height="7" fill="none" stroke="#4a9ae8" stroke-width="1.2"/><rect x="22.5" y="4" width="3" height="5" fill="none" stroke="#4a9ae8" stroke-width="1.2"/></svg><div class="a" style="left:1160.5px;top:853px;width:100px;text-align:center;font-size:11px;line-height:13px;color:#000;font-weight:normal;white-space:nowrap;transform:scaleX(0.93);transform-origin:50% 0;">Reversal</div><div class="a" style="left:1160.5px;top:866px;width:100px;text-align:center;font-size:11px;line-height:13px;color:#000;font-weight:normal;white-space:nowrap;transform:scaleX(0.93);transform-origin:50% 0;">Trend fo...</div><svg class="a" style="left:1194.0px;top:890px" width="33" height="33" viewBox="0 0 30 30"><path d="M3 2V28H27" fill="none" stroke="#111" stroke-width="2.5"/><path d="M3 8H6M3 14H6M3 20H6" stroke="#111" stroke-width="1.5"/><path d="M7 23L13 16L18 20L24 5" fill="none" stroke="#111" stroke-width="1.5"/><circle cx="7" cy="23" r="2.5" fill="#111"/><circle cx="13" cy="16" r="2.5" fill="#111"/><circle cx="18" cy="20" r="2.5" fill="#111"/><path d="M22 7L24 3L26 8" fill="#111"/></svg><div class="a" style="left:1160.5px;top:928px;width:100px;text-align:center;font-size:11px;line-height:13px;color:#000;font-weight:normal;white-space:nowrap;transform:scaleX(0.93);transform-origin:50% 0;">Follow Line</div><svg class="a" style="left:1269.0px;top:815px" width="33" height="33" viewBox="0 0 30 30"><rect x="3" y="14" width="6" height="12" rx="1" fill="none" stroke="#111" stroke-width="2.5"/><rect x="11.5" y="3" width="6" height="23" rx="1" fill="none" stroke="#111" stroke-width="2.5"/><rect x="20" y="9" width="6" height="17" rx="1" fill="none" stroke="#111" stroke-width="2.5"/></svg><div class="a" style="left:1235.5px;top:853px;width:100px;text-align:center;font-size:11px;line-height:13px;color:#000;font-weight:normal;white-space:nowrap;transform:scaleX(0.93);transform-origin:50% 0;">Volatility Bar</div><svg class="a" style="left:1269.0px;top:890px" width="33" height="33" viewBox="0 0 30 30"><path d="M3 22H27" stroke="#111" stroke-width="3"/><path d="M5 19V13M11 19V11M17 19V13M23 19V9" stroke="#111" stroke-width="2.5"/><path d="M3 11L13 7L18 9L26 3" fill="none" stroke="#111" stroke-width="2.5"/></svg><div class="a" style="left:1235.5px;top:928px;width:100px;text-align:center;font-size:11px;line-height:13px;color:#000;font-weight:normal;white-space:nowrap;transform:scaleX(0.93);transform-origin:50% 0;">Adaptive ATR</div><svg class="a" style="left:1344.0px;top:815px" width="33" height="33" viewBox="0 0 30 30"><rect x="3" y="3" width="10" height="10" fill="none" stroke="#111" stroke-width="2.5"/><rect x="16" y="3" width="10" height="10" fill="none" stroke="#111" stroke-width="2.5"/><rect x="3" y="16" width="10" height="10" fill="none" stroke="#111" stroke-width="2.5"/><rect x="16" y="16" width="10" height="10" fill="none" stroke="#111" stroke-width="2.5"/></svg><div class="a" style="left:1310.5px;top:853px;width:100px;text-align:center;font-size:11px;line-height:13px;color:#000;font-weight:normal;white-space:nowrap;transform:scaleX(0.93);transform-origin:50% 0;">Grid Expert</div><svg class="a" style="left:1344.0px;top:890px" width="33" height="33" viewBox="0 0 30 30"><circle cx="23" cy="5" r="3" fill="none" stroke="#111" stroke-width="1.5"/><path d="M21 7L10 21M6 8L22 19M3 14Q4 26 16 26Q22 26 24 21" fill="none" stroke="#111" stroke-width="2"/></svg><div class="a" style="left:1310.5px;top:928px;width:100px;text-align:center;font-size:11px;line-height:13px;color:#000;font-weight:normal;white-space:nowrap;transform:scaleX(0.93);transform-origin:50% 0;">Navel EMA</div><svg class="a" style="left:1419.0px;top:815px" width="33" height="33" viewBox="0 0 30 30"><path d="M3 3L14 7L25 3V25L14 27L3 25Z" fill="none" stroke="#111" stroke-width="2"/><path d="M14 7V27" stroke="#111" stroke-width="1.5"/><path d="M5 15H12M9 12L12 15L9 18M23 15H16M19 12L16 15L19 18" fill="none" stroke="#111" stroke-width="1.5"/></svg><div class="a" style="left:1385.5px;top:853px;width:100px;text-align:center;font-size:11px;line-height:13px;color:#000;font-weight:normal;white-space:nowrap;transform:scaleX(0.93);transform-origin:50% 0;">All in one</div><div class="a" style="left:1385.5px;top:866px;width:100px;text-align:center;font-size:11px;line-height:13px;color:#000;font-weight:normal;white-space:nowrap;transform:scaleX(0.93);transform-origin:50% 0;">Mirror</div><svg class="a" style="left:1419.0px;top:890px" width="33" height="33" viewBox="0 0 30 30"><circle cx="15" cy="15" r="13" fill="#1a1a1a"/><circle cx="15" cy="15" r="9" fill="none" stroke="#666" stroke-width=".8"/><path d="M15 3L17 13L27 15L17 17L15 27L13 17L3 15L13 13Z" fill="none" stroke="#aaa" stroke-width=".8"/></svg><div class="a" style="left:1385.5px;top:928px;width:100px;text-align:center;font-size:11px;line-height:13px;color:#000;font-weight:normal;white-space:nowrap;transform:scaleX(0.93);transform-origin:50% 0;">i Compass</div><svg class="a" style="left:1494.0px;top:815px" width="33" height="33" viewBox="0 0 30 30"><rect x="3" y="18" width="5" height="9" rx="1" fill="#111"/><rect x="10" y="13" width="5" height="14" rx="1" fill="#111"/><path d="M20 27V8M15 10L20 3L25 10" stroke="#111" stroke-width="4" fill="none"/><path d="M18 22h6M18 25h6" stroke="#111" stroke-width="1.5"/></svg><div class="a" style="left:1460.5px;top:853px;width:100px;text-align:center;font-size:11px;line-height:13px;color:#000;font-weight:normal;white-space:nowrap;transform:scaleX(0.93);transform-origin:50% 0;">Relative ATR</div><svg class="a" style="left:1494.0px;top:890px" width="33" height="33" viewBox="0 0 30 30"><rect x="2" y="2" width="26" height="26" rx="4" fill="none" stroke="#111" stroke-width="1.8"/><path d="M6 14L12 20L17 14L23 8M19 8H23V12" fill="none" stroke="#111" stroke-width="1.5"/><circle cx="6" cy="14" r="1.5" fill="none" stroke="#111"/><circle cx="12" cy="20" r="1.5" fill="none" stroke="#111"/></svg><div class="a" style="left:1460.5px;top:928px;width:100px;text-align:center;font-size:11px;line-height:13px;color:#000;font-weight:normal;white-space:nowrap;transform:scaleX(0.93);transform-origin:50% 0;">StochIn MA</div><svg class="a" style="left:1569.0px;top:815px" width="33" height="33" viewBox="0 0 30 30"><circle cx="14" cy="14" r="13" fill="#20c0f0"/><path d="M9 8H19M9 8L15 14L9 20H19" fill="none" stroke="#fff" stroke-width="1.8"/></svg><div class="a" style="left:1535.5px;top:853px;width:100px;text-align:center;font-size:11px;line-height:13px;color:#000;font-weight:normal;white-space:nowrap;transform:scaleX(0.93);transform-origin:50% 0;">Sigma Bands</div><svg class="a" style="left:1569.0px;top:890px" width="33" height="33" viewBox="0 0 30 30"><rect x="0" y="0" width="30" height="30" fill="#eee"/><circle cx="9" cy="9" r="8" fill="#d01818"/><text x="9" y="13" font-size="10" font-weight="bold" text-anchor="middle" fill="#fff" font-family="Liberation Sans">$</text><circle cx="19" cy="19" r="10" fill="#1a4a80"/><text x="19" y="24" font-size="13" font-weight="bold" text-anchor="middle" fill="#fff" font-family="Liberation Sans">€</text></svg><div class="a" style="left:1535.5px;top:928px;width:100px;text-align:center;font-size:11px;line-height:13px;color:#000;font-weight:normal;white-space:nowrap;transform:scaleX(0.93);transform-origin:50% 0;">EURUSD</div><svg class="a" style="left:1644.0px;top:815px" width="33" height="33" viewBox="0 0 30 30"><path d="M4 3V26H26" fill="none" stroke="#1a2a6a" stroke-width="1.5"/><path d="M6 22L12 17L17 16L25 7" fill="none" stroke="#1a2a6a" stroke-width="1.3"/><g fill="#e03030"><circle cx="8" cy="17" r=".9"/><circle cx="12" cy="13" r=".9"/><circle cx="16" cy="19" r=".9"/><circle cx="19" cy="11" r=".9"/><circle cx="22" cy="14" r=".9"/><circle cx="24" cy="6" r=".9"/><circle cx="14" cy="10" r=".9"/></g></svg><div class="a" style="left:1610.5px;top:853px;width:100px;text-align:center;font-size:11px;line-height:13px;color:#000;font-weight:normal;white-space:nowrap;transform:scaleX(0.93);transform-origin:50% 0;">Simple</div><div class="a" style="left:1610.5px;top:866px;width:100px;text-align:center;font-size:11px;line-height:13px;color:#000;font-weight:normal;white-space:nowrap;transform:scaleX(0.93);transform-origin:50% 0;">Regression</div><svg class="a" style="left:1644.0px;top:890px" width="33" height="33" viewBox="0 0 30 30"><rect x="9" y="9" width="12" height="12" fill="#eee" stroke="#555"/><path d="M11 19L13 13L15 17L17 11L19 15" fill="none" stroke="#333" stroke-width="1"/></svg><div class="a" style="left:1610.5px;top:928px;width:100px;text-align:center;font-size:11px;line-height:13px;color:#000;font-weight:normal;white-space:nowrap;transform:scaleX(0.93);transform-origin:50% 0;">HLC Trend</div><svg class="a" style="left:1719.0px;top:815px" width="33" height="33" viewBox="0 0 30 30"><text x="2" y="12" font-size="11" font-weight="bold" fill="#111" font-family="Liberation Sans">$</text><path d="M2 26H27" stroke="#111" stroke-width="2"/><path d="M5 26V17H9V26M12 26V12H16V26M19 26V3H24V26" fill="none" stroke="#111" stroke-width="2"/></svg><div class="a" style="left:1685.5px;top:853px;width:100px;text-align:center;font-size:11px;line-height:13px;color:#000;font-weight:normal;white-space:nowrap;transform:scaleX(0.93);transform-origin:50% 0;">Hull Moving</div><div class="a" style="left:1685.5px;top:866px;width:100px;text-align:center;font-size:11px;line-height:13px;color:#000;font-weight:normal;white-space:nowrap;transform:scaleX(0.93);transform-origin:50% 0;">Average</div><svg class="a" style="left:1719.0px;top:890px" width="33" height="33" viewBox="0 0 30 30"><rect x="4" y="5" width="22" height="15" rx="1" fill="#222"/><rect x="6" y="7" width="18" height="11" fill="#444"/><path d="M6 10L9 12L12 9L15 13L18 10L24 12" stroke="#aaa" stroke-width=".8" fill="none"/><path d="M1 21H29L27 24H3Z" fill="#333"/></svg><div class="a" style="left:1685.5px;top:928px;width:100px;text-align:center;font-size:11px;line-height:13px;color:#000;font-weight:normal;white-space:nowrap;transform:scaleX(0.93);transform-origin:50% 0;">SVE Stochastic</div><div class="a" style="left:1685.5px;top:941px;width:100px;text-align:center;font-size:11px;line-height:13px;color:#000;font-weight:normal;white-space:nowrap;transform:scaleX(0.93);transform-origin:50% 0;">RSI</div><svg class="a" style="left:1794.0px;top:815px" width="33" height="33" viewBox="0 0 30 30"><path d="M2 8H26M2 20H26" stroke="#111" stroke-width="1.5" stroke-dasharray="3,2"/><path d="M3 26L9 13L12 17L16 7L19 11L23 3L25 6" fill="none" stroke="#111" stroke-width="1.5"/></svg><div class="a" style="left:1760.5px;top:853px;width:100px;text-align:center;font-size:11px;line-height:13px;color:#000;font-weight:normal;white-space:nowrap;transform:scaleX(0.93);transform-origin:50% 0;">Daily Pivot,</div><div class="a" style="left:1760.5px;top:866px;width:100px;text-align:center;font-size:11px;line-height:13px;color:#000;font-weight:normal;white-space:nowrap;transform:scaleX(0.93);transform-origin:50% 0;">Support a...</div><svg class="a" style="left:1794.0px;top:890px" width="33" height="33" viewBox="0 0 30 30"><rect x="1" y="1" width="28" height="28" fill="#f0f4fa"/><path d="M6 4V25H27" fill="none" stroke="#3a5ab8" stroke-width="1.3"/><path d="M8 22Q18 20 24 6" fill="none" stroke="#3a5ab8" stroke-width="1.5"/><path d="M11 24V21M14 24V19M17 24V16M20 24V13M23 24V10" stroke="#3a5ab8" stroke-width="1.5"/></svg><div class="a" style="left:1760.5px;top:928px;width:100px;text-align:center;font-size:11px;line-height:13px;color:#000;font-weight:normal;white-space:nowrap;transform:scaleX(0.93);transform-origin:50% 0;">DD Adaptive</div><div class="a" style="left:1760.5px;top:941px;width:100px;text-align:center;font-size:11px;line-height:13px;color:#000;font-weight:normal;white-space:nowrap;transform:scaleX(0.93);transform-origin:50% 0;">EMA</div><svg class="a" style="left:78px;top:966px;" width="20" height="11" viewBox="0 0 20 11"><path d="M4 6V11M8 8V11M14 4V11" stroke="#4a9ae8" stroke-width="2"/></svg><svg class="a" style="left:145px;top:964px;" width="30" height="13" viewBox="0 0 30 13"><path d="M2 13 A13 13 0 0 1 28 13" fill="none" stroke="#f08a30" stroke-width="2.5"/><path d="M6 13 A9 9 0 0 1 24 13" fill="none" stroke="#999" stroke-width="1"/></svg><div class="a" style="left:1897px;top:815px;width:17px;height:162px;background:#f0f0f0"></div><div class="a" style="left:1899px;top:831px;width:13px;height:103px;background:#cdcdcd"></div><svg class="a" style="left:1900px;top:819px;" width="11" height="8" viewBox="0 0 11 8"><path d="M1 6 L5.5 1.5 L10 6" fill="none" stroke="#505050" stroke-width="1.5"/></svg><svg class="a" style="left:1900px;top:963px;" width="11" height="8" viewBox="0 0 11 8"><path d="M1 2 L5.5 6.5 L10 2" fill="none" stroke="#505050" stroke-width="1.5"/></svg><div class="a" style="left:24px;top:982px;width:1894px;height:11px;background:#c8c8c8"></div><div class="a" style="left:936px;top:982px;font-size:11px;line-height:13px;color:#6d6d6d;font-weight:normal;white-space:nowrap;">Load More &gt;&gt;</div><div class="a" style="left:23px;top:993px;width:1897px;height:26px;background:#86a9d6"></div><svg class="a" style="left:29px;top:994px;" width="78" height="22" viewBox="0 0 78 22"><defs><linearGradient id="tg5" x1="0" y1="0" x2="0" y2="1"><stop offset="0" stop-color="#a4c8f8"/><stop offset=".5" stop-color="#b8d6fc"/><stop offset="1" stop-color="#d6e8fe"/></linearGradient></defs><path d="M0.5 0 L0.5 16 Q0.5 21.5 6 21.5 L59 21.5 Q63 21.5 66 18 L77.5 0 Z" fill="url(#tg5)"/><path d="M0.5 0 L0.5 16 Q0.5 21.5 6 21.5 L59 21.5 Q63 21.5 66 18 L77.5 0" fill="none" stroke="#9ab9e2"/></svg><svg class="a" style="left:102px;top:994px;" width="66" height="22" viewBox="0 0 66 22"><defs><linearGradient id="tg6" x1="0" y1="0" x2="0" y2="1"><stop offset="0" stop-color="#a4c8f8"/><stop offset=".5" stop-color="#b8d6fc"/><stop offset="1" stop-color="#d6e8fe"/></linearGradient></defs><path d="M0.5 0 L0.5 16 Q0.5 21.5 6 21.5 L47 21.5 Q51 21.5 54 18 L65.5 0 Z" fill="url(#tg6)"/><path d="M0.5 0 L0.5 16 Q0.5 21.5 6 21.5 L47 21.5 Q51 21.5 54 18 L65.5 0" fill="none" stroke="#9ab9e2"/></svg><svg class="a" style="left:165px;top:994px;" width="70" height="22" viewBox="0 0 70 22"><defs><linearGradient id="tg7" x1="0" y1="0" x2="0" y2="1"><stop offset="0" stop-color="#a4c8f8"/><stop offset=".5" stop-color="#b8d6fc"/><stop offset="1" stop-color="#d6e8fe"/></linearGradient></defs><path d="M0.5 0 L0.5 16 Q0.5 21.5 6 21.5 L51 21.5 Q55 21.5 58 18 L69.5 0 Z" fill="url(#tg7)"/><path d="M0.5 0 L0.5 16 Q0.5 21.5 6 21.5 L51 21.5 Q55 21.5 58 18 L69.5 0" fill="none" stroke="#9ab9e2"/></svg><svg class="a" style="left:231px;top:994px;" width="53" height="22" viewBox="0 0 53 22"><defs><linearGradient id="tg8" x1="0" y1="0" x2="0" y2="1"><stop offset="0" stop-color="#a4c8f8"/><stop offset=".5" stop-color="#b8d6fc"/><stop offset="1" stop-color="#d6e8fe"/></linearGradient></defs><path d="M0.5 0 L0.5 16 Q0.5 21.5 6 21.5 L34 21.5 Q38 21.5 41 18 L52.5 0 Z" fill="url(#tg8)"/><path d="M0.5 0 L0.5 16 Q0.5 21.5 6 21.5 L34 21.5 Q38 21.5 41 18 L52.5 0" fill="none" stroke="#9ab9e2"/></svg><svg class="a" style="left:281px;top:994px;" width="90" height="22" viewBox="0 0 90 22"><defs><linearGradient id="tg9" x1="0" y1="0" x2="0" y2="1"><stop offset="0" stop-color="#a4c8f8"/><stop offset=".5" stop-color="#b8d6fc"/><stop offset="1" stop-color="#d6e8fe"/></linearGradient></defs><path d="M0.5 0 L0.5 16 Q0.5 21.5 6 21.5 L71 21.5 Q75 21.5 78 18 L89.5 0 Z" fill="url(#tg9)"/><path d="M0.5 0 L0.5 16 Q0.5 21.5 6 21.5 L71 21.5 Q75 21.5 78 18 L89.5 0" fill="none" stroke="#9ab9e2"/></svg><svg class="a" style="left:368px;top:994px;" width="76" height="22" viewBox="0 0 76 22"><defs><linearGradient id="tg10" x1="0" y1="0" x2="0" y2="1"><stop offset="0" stop-color="#a4c8f8"/><stop offset=".5" stop-color="#b8d6fc"/><stop offset="1" stop-color="#d6e8fe"/></linearGradient></defs><path d="M0.5 0 L0.5 16 Q0.5 21.5 6 21.5 L57 21.5 Q61 21.5 64 18 L75.5 0 Z" fill="url(#tg10)"/><path d="M0.5 0 L0.5 16 Q0.5 21.5 6 21.5 L57 21.5 Q61 21.5 64 18 L75.5 0" fill="none" stroke="#9ab9e2"/></svg><svg class="a" style="left:492px;top:994px;" width="80" height="22" viewBox="0 0 80 22"><defs><linearGradient id="tg11" x1="0" y1="0" x2="0" y2="1"><stop offset="0" stop-color="#a4c8f8"/><stop offset=".5" stop-color="#b8d6fc"/><stop offset="1" stop-color="#d6e8fe"/></linearGradient></defs><path d="M0.5 0 L0.5 16 Q0.5 21.5 6 21.5 L61 21.5 Q65 21.5 68 18 L79.5 0 Z" fill="url(#tg11)"/><path d="M0.5 0 L0.5 16 Q0.5 21.5 6 21.5 L61 21.5 Q65 21.5 68 18 L79.5 0" fill="none" stroke="#9ab9e2"/></svg><svg class="a" style="left:441px;top:994px;" width="58" height="22" viewBox="0 0 58 22"><defs><linearGradient id="tg12" x1="0" y1="0" x2="0" y2="1"><stop offset="0" stop-color="#ffd689"/><stop offset=".45" stop-color="#fdb556"/><stop offset=".55" stop-color="#fdc67a"/><stop offset="1" stop-color="#ffe0b0"/></linearGradient></defs><path d="M0.5 0 L0.5 16 Q0.5 21.5 6 21.5 L39 21.5 Q43 21.5 46 18 L57.5 0 Z" fill="url(#tg12)"/><path d="M0.5 0 L0.5 16 Q0.5 21.5 6 21.5 L39 21.5 Q43 21.5 46 18 L57.5 0" fill="none" stroke="#b8874a"/></svg><div class="a" style="left:34px;top:998px;font-size:12px;line-height:14px;color:#000;font-weight:normal;white-space:nowrap;transform:scaleX(0.92);transform-origin:0 0;">Trade (21/0)</div><div class="a" style="left:108px;top:998px;font-size:12px;line-height:14px;color:#000;font-weight:normal;white-space:nowrap;transform:scaleX(0.92);transform-origin:0 0;">Net Trade</div><div class="a" style="left:169px;top:998px;font-size:12px;line-height:14px;color:#000;font-weight:normal;white-space:nowrap;transform:scaleX(0.92);transform-origin:0 0;">History (0)</div><div class="a" style="left:236px;top:998px;font-size:12px;line-height:14px;color:#000;font-weight:normal;white-space:nowrap;transform:scaleX(0.92);transform-origin:0 0;">Journal</div><div class="a" style="left:286px;top:998px;font-size:12px;line-height:14px;color:#000;font-weight:normal;white-space:nowrap;transform:scaleX(0.92);transform-origin:0 0;">Mailbox (sara)</div><div class="a" style="left:373px;top:998px;font-size:12px;line-height:14px;color:#000;font-weight:normal;white-space:nowrap;transform:scaleX(0.92);transform-origin:0 0;">Alerts (sara)</div><div class="a" style="left:447px;top:998px;font-size:12px;line-height:14px;color:#000;font-weight:bold;white-space:nowrap;transform:scaleX(0.92);transform-origin:0 0;">vStore</div><div class="a" style="left:497px;top:998px;font-size:12px;line-height:14px;color:#000;font-weight:normal;white-space:nowrap;transform:scaleX(0.92);transform-origin:0 0;">BackTesting</div><div class="a" style="left:0;top:1019px;width:1920px;height:21px;background:linear-gradient(#e8f1fc,#c6daf4 50%,#b6cff0 55%,#d2e3f8)"></div><div class="a" style="left:0;top:1018px;width:1920px;height:1px;background:#fff"></div><div class="a" style="left:1042px;top:1021px;width:1px;height:17px;background:#9ab0cc;box-shadow:1px 0 0 #fff"></div><div class="a" style="left:1154px;top:1021px;width:1px;height:17px;background:#9ab0cc;box-shadow:1px 0 0 #fff"></div><div class="a" style="left:1226px;top:1021px;width:1px;height:17px;background:#9ab0cc;box-shadow:1px 0 0 #fff"></div><div class="a" style="left:1298px;top:1021px;width:1px;height:17px;background:#9ab0cc;box-shadow:1px 0 0 #fff"></div><div class="a" style="left:1370px;top:1021px;width:1px;height:17px;background:#9ab0cc;box-shadow:1px 0 0 #fff"></div><div class="a" style="left:1445px;top:1021px;width:1px;height:17px;background:#9ab0cc;box-shadow:1px 0 0 #fff"></div><div class="a" style="left:1516px;top:1021px;width:1px;height:17px;background:#9ab0cc;box-shadow:1px 0 0 #fff"></div><div class="a" style="left:1583px;top:1021px;width:1px;height:17px;background:#9ab0cc;box-shadow:1px 0 0 #fff"></div><div class="a" style="left:1695px;top:1021px;width:1px;height:17px;background:#9ab0cc;box-shadow:1px 0 0 #fff"></div><div class="a" style="left:1727px;top:1021px;width:1px;height:17px;background:#9ab0cc;box-shadow:1px 0 0 #fff"></div><div class="a" style="left:1819px;top:1021px;width:1px;height:17px;background:#9ab0cc;box-shadow:1px 0 0 #fff"></div><div class="a" style="left:1047px;top:1023px;font-size:11.5px;line-height:13.5px;color:#15428b;font-weight:normal;white-space:nowrap;">13/09/2022 08:00:00</div><div class="a" style="left:1164px;top:1023px;font-size:11.5px;line-height:13.5px;color:#15428b;font-weight:normal;white-space:nowrap;">O: 1.01285</div><div class="a" style="left:1236px;top:1023px;font-size:11.5px;line-height:13.5px;color:#15428b;font-weight:normal;white-space:nowrap;">H: 1.01560</div><div class="a" style="left:1309px;top:1023px;font-size:11.5px;line-height:13.5px;color:#15428b;font-weight:normal;white-space:nowrap;">L: 1.01250</div><div class="a" style="left:1382px;top:1023px;font-size:11.5px;line-height:13.5px;color:#15428b;font-weight:normal;white-space:nowrap;">C: 1.01548</div><div class="a" style="left:1523px;top:1023px;font-size:11.5px;line-height:13.5px;color:#15428b;font-weight:normal;white-space:nowrap;">+2:00GMT</div><div class="a" style="left:1588px;top:1023px;font-size:11.5px;line-height:13.5px;color:#15428b;font-weight:normal;white-space:nowrap;">27/09/2022 15:36:17</div><div class="a" style="left:1750px;top:1023px;font-size:11.5px;line-height:13.5px;color:#15428b;font-weight:normal;white-space:nowrap;">Waiting..</div><div class="a" style="left:1849px;top:1023px;font-size:11.5px;line-height:13.5px;color:#15428b;font-weight:normal;white-space:nowrap;">Connected</div><svg class="a" style="left:1830px;top:1021px;" width="17" height="17" viewBox="0 0 17 17"><path d="M3 14 L7 10 M11 6 L15 2" stroke="#6a9a30" stroke-width="3"/><ellipse cx="9" cy="8" rx="5" ry="4" transform="rotate(-45 9 8)" fill="#7ab040"/></svg><div class="a" style="left:0;top:1040px;width:1920px;height:2px;background:#1c2b3a"></div><div class="a" style="left:48px;top:1040px;width:344px;height:2px;background:#e8eef4"></div><div class="a" style="left:738px;top:1040px;width:47px;height:2px;background:#5a6a7a"></div></body></html>
